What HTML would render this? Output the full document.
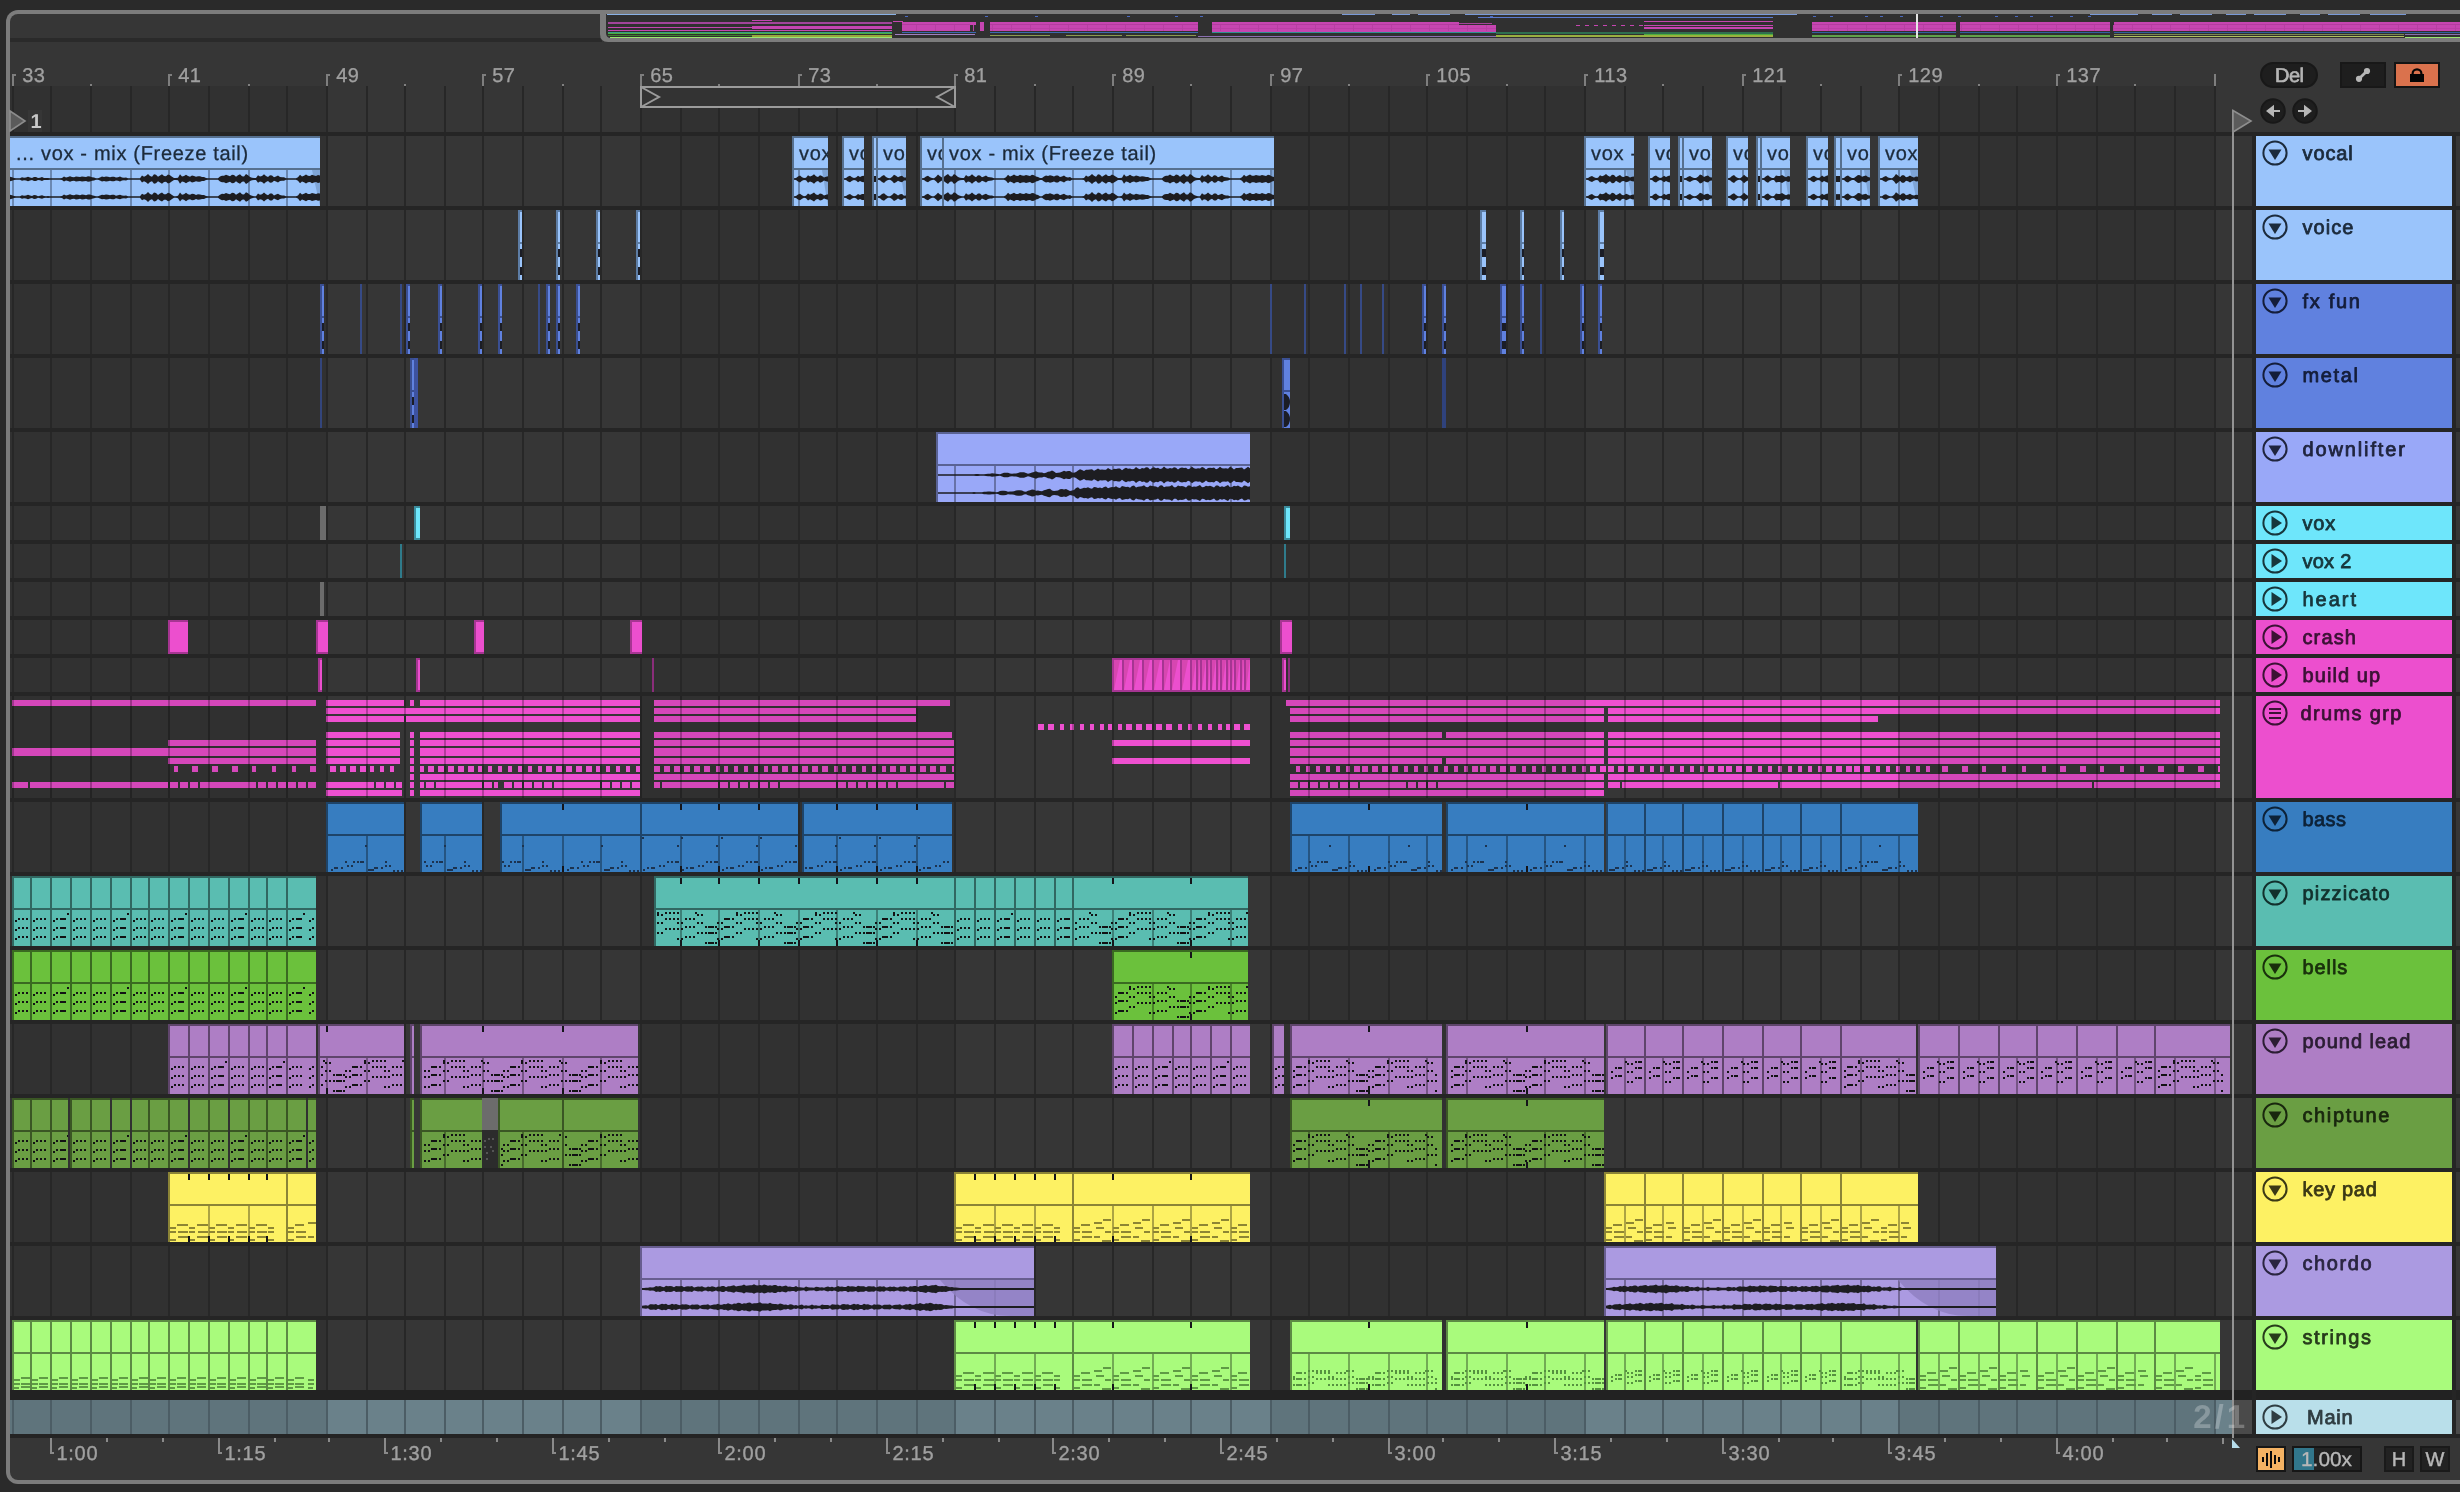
<!DOCTYPE html>
<html lang="en"><head><meta charset="utf-8"><title>Arrangement</title>
<style>html,body{margin:0;padding:0;background:#2a2a2a;overflow:hidden}svg{display:block;will-change:transform;backface-visibility:hidden}text{shape-rendering:auto}circle,.aa{shape-rendering:geometricPrecision}</style></head>
<body>
<svg width="2460" height="1492" viewBox="0 0 2460 1492" shape-rendering="crispEdges" text-rendering="geometricPrecision">
<rect x="0" y="0" width="2460" height="1492" fill="#2a2a2a"/>
<rect class="aa" x="6" y="10" width="2480" height="1474" rx="12" fill="#7c7c7c"/>
<rect class="aa" x="10" y="14" width="2480" height="1466" rx="8" fill="#363636"/>
<rect x="10" y="38" width="592" height="4" fill="#2a2a2a"/>
<rect x="10" y="132" width="2450" height="1306" fill="#252525"/>
<rect x="10" y="86" width="2242" height="46" fill="#363636"/>
<rect x="2456" y="86" width="4" height="46" fill="#363636"/>
<rect x="10" y="86" width="316" height="46" fill="#313131"/>
<rect x="640" y="86" width="314" height="46" fill="#313131"/>
<rect x="1270" y="86" width="314" height="46" fill="#313131"/>
<rect x="1898" y="86" width="316" height="46" fill="#313131"/>
<rect x="10" y="136" width="2242" height="70" fill="#363636"/>
<rect x="2456" y="136" width="4" height="70" fill="#363636"/>
<rect x="10" y="136" width="316" height="70" fill="#313131"/>
<rect x="640" y="136" width="314" height="70" fill="#313131"/>
<rect x="1270" y="136" width="314" height="70" fill="#313131"/>
<rect x="1898" y="136" width="316" height="70" fill="#313131"/>
<rect x="10" y="210" width="2242" height="70" fill="#363636"/>
<rect x="2456" y="210" width="4" height="70" fill="#363636"/>
<rect x="10" y="210" width="316" height="70" fill="#313131"/>
<rect x="640" y="210" width="314" height="70" fill="#313131"/>
<rect x="1270" y="210" width="314" height="70" fill="#313131"/>
<rect x="1898" y="210" width="316" height="70" fill="#313131"/>
<rect x="10" y="284" width="2242" height="70" fill="#363636"/>
<rect x="2456" y="284" width="4" height="70" fill="#363636"/>
<rect x="10" y="284" width="316" height="70" fill="#313131"/>
<rect x="640" y="284" width="314" height="70" fill="#313131"/>
<rect x="1270" y="284" width="314" height="70" fill="#313131"/>
<rect x="1898" y="284" width="316" height="70" fill="#313131"/>
<rect x="10" y="358" width="2242" height="70" fill="#363636"/>
<rect x="2456" y="358" width="4" height="70" fill="#363636"/>
<rect x="10" y="358" width="316" height="70" fill="#313131"/>
<rect x="640" y="358" width="314" height="70" fill="#313131"/>
<rect x="1270" y="358" width="314" height="70" fill="#313131"/>
<rect x="1898" y="358" width="316" height="70" fill="#313131"/>
<rect x="10" y="432" width="2242" height="70" fill="#363636"/>
<rect x="2456" y="432" width="4" height="70" fill="#363636"/>
<rect x="10" y="432" width="316" height="70" fill="#313131"/>
<rect x="640" y="432" width="314" height="70" fill="#313131"/>
<rect x="1270" y="432" width="314" height="70" fill="#313131"/>
<rect x="1898" y="432" width="316" height="70" fill="#313131"/>
<rect x="10" y="506" width="2242" height="34" fill="#363636"/>
<rect x="2456" y="506" width="4" height="34" fill="#363636"/>
<rect x="10" y="506" width="316" height="34" fill="#313131"/>
<rect x="640" y="506" width="314" height="34" fill="#313131"/>
<rect x="1270" y="506" width="314" height="34" fill="#313131"/>
<rect x="1898" y="506" width="316" height="34" fill="#313131"/>
<rect x="10" y="544" width="2242" height="34" fill="#363636"/>
<rect x="2456" y="544" width="4" height="34" fill="#363636"/>
<rect x="10" y="544" width="316" height="34" fill="#313131"/>
<rect x="640" y="544" width="314" height="34" fill="#313131"/>
<rect x="1270" y="544" width="314" height="34" fill="#313131"/>
<rect x="1898" y="544" width="316" height="34" fill="#313131"/>
<rect x="10" y="582" width="2242" height="34" fill="#363636"/>
<rect x="2456" y="582" width="4" height="34" fill="#363636"/>
<rect x="10" y="582" width="316" height="34" fill="#313131"/>
<rect x="640" y="582" width="314" height="34" fill="#313131"/>
<rect x="1270" y="582" width="314" height="34" fill="#313131"/>
<rect x="1898" y="582" width="316" height="34" fill="#313131"/>
<rect x="10" y="620" width="2242" height="34" fill="#363636"/>
<rect x="2456" y="620" width="4" height="34" fill="#363636"/>
<rect x="10" y="620" width="316" height="34" fill="#313131"/>
<rect x="640" y="620" width="314" height="34" fill="#313131"/>
<rect x="1270" y="620" width="314" height="34" fill="#313131"/>
<rect x="1898" y="620" width="316" height="34" fill="#313131"/>
<rect x="10" y="658" width="2242" height="34" fill="#363636"/>
<rect x="2456" y="658" width="4" height="34" fill="#363636"/>
<rect x="10" y="658" width="316" height="34" fill="#313131"/>
<rect x="640" y="658" width="314" height="34" fill="#313131"/>
<rect x="1270" y="658" width="314" height="34" fill="#313131"/>
<rect x="1898" y="658" width="316" height="34" fill="#313131"/>
<rect x="10" y="696" width="2242" height="102" fill="#363636"/>
<rect x="2456" y="696" width="4" height="102" fill="#363636"/>
<rect x="10" y="802" width="2242" height="70" fill="#363636"/>
<rect x="2456" y="802" width="4" height="70" fill="#363636"/>
<rect x="10" y="802" width="316" height="70" fill="#313131"/>
<rect x="640" y="802" width="314" height="70" fill="#313131"/>
<rect x="1270" y="802" width="314" height="70" fill="#313131"/>
<rect x="1898" y="802" width="316" height="70" fill="#313131"/>
<rect x="10" y="876" width="2242" height="70" fill="#363636"/>
<rect x="2456" y="876" width="4" height="70" fill="#363636"/>
<rect x="10" y="876" width="316" height="70" fill="#313131"/>
<rect x="640" y="876" width="314" height="70" fill="#313131"/>
<rect x="1270" y="876" width="314" height="70" fill="#313131"/>
<rect x="1898" y="876" width="316" height="70" fill="#313131"/>
<rect x="10" y="950" width="2242" height="70" fill="#363636"/>
<rect x="2456" y="950" width="4" height="70" fill="#363636"/>
<rect x="10" y="950" width="316" height="70" fill="#313131"/>
<rect x="640" y="950" width="314" height="70" fill="#313131"/>
<rect x="1270" y="950" width="314" height="70" fill="#313131"/>
<rect x="1898" y="950" width="316" height="70" fill="#313131"/>
<rect x="10" y="1024" width="2242" height="70" fill="#363636"/>
<rect x="2456" y="1024" width="4" height="70" fill="#363636"/>
<rect x="10" y="1024" width="316" height="70" fill="#313131"/>
<rect x="640" y="1024" width="314" height="70" fill="#313131"/>
<rect x="1270" y="1024" width="314" height="70" fill="#313131"/>
<rect x="1898" y="1024" width="316" height="70" fill="#313131"/>
<rect x="10" y="1098" width="2242" height="70" fill="#363636"/>
<rect x="2456" y="1098" width="4" height="70" fill="#363636"/>
<rect x="10" y="1098" width="316" height="70" fill="#313131"/>
<rect x="640" y="1098" width="314" height="70" fill="#313131"/>
<rect x="1270" y="1098" width="314" height="70" fill="#313131"/>
<rect x="1898" y="1098" width="316" height="70" fill="#313131"/>
<rect x="10" y="1172" width="2242" height="70" fill="#363636"/>
<rect x="2456" y="1172" width="4" height="70" fill="#363636"/>
<rect x="10" y="1172" width="316" height="70" fill="#313131"/>
<rect x="640" y="1172" width="314" height="70" fill="#313131"/>
<rect x="1270" y="1172" width="314" height="70" fill="#313131"/>
<rect x="1898" y="1172" width="316" height="70" fill="#313131"/>
<rect x="10" y="1246" width="2242" height="70" fill="#363636"/>
<rect x="2456" y="1246" width="4" height="70" fill="#363636"/>
<rect x="10" y="1246" width="316" height="70" fill="#313131"/>
<rect x="640" y="1246" width="314" height="70" fill="#313131"/>
<rect x="1270" y="1246" width="314" height="70" fill="#313131"/>
<rect x="1898" y="1246" width="316" height="70" fill="#313131"/>
<rect x="10" y="1320" width="2242" height="70" fill="#363636"/>
<rect x="2456" y="1320" width="4" height="70" fill="#363636"/>
<rect x="10" y="1320" width="316" height="70" fill="#313131"/>
<rect x="640" y="1320" width="314" height="70" fill="#313131"/>
<rect x="1270" y="1320" width="314" height="70" fill="#313131"/>
<rect x="1898" y="1320" width="316" height="70" fill="#313131"/>
<rect x="10" y="1400" width="2224" height="34" fill="#6a818a"/>
<rect x="10" y="1400" width="316" height="34" fill="#5f747c"/>
<rect x="640" y="1400" width="314" height="34" fill="#5f747c"/>
<rect x="1270" y="1400" width="314" height="34" fill="#5f747c"/>
<rect x="1898" y="1400" width="316" height="34" fill="#5f747c"/>
<rect x="2234" y="1400" width="18" height="34" fill="#4a4a4a"/>
<rect x="2456" y="1400" width="4" height="34" fill="#4a4a4a"/>
<rect x="12" y="86" width="2" height="46" fill="#272727"/>
<rect x="12" y="136" width="2" height="70" fill="#272727"/>
<rect x="12" y="210" width="2" height="70" fill="#272727"/>
<rect x="12" y="284" width="2" height="70" fill="#272727"/>
<rect x="12" y="358" width="2" height="70" fill="#272727"/>
<rect x="12" y="432" width="2" height="70" fill="#272727"/>
<rect x="12" y="506" width="2" height="34" fill="#272727"/>
<rect x="12" y="544" width="2" height="34" fill="#272727"/>
<rect x="12" y="582" width="2" height="34" fill="#272727"/>
<rect x="12" y="620" width="2" height="34" fill="#272727"/>
<rect x="12" y="658" width="2" height="34" fill="#272727"/>
<rect x="12" y="802" width="2" height="70" fill="#272727"/>
<rect x="12" y="876" width="2" height="70" fill="#272727"/>
<rect x="12" y="950" width="2" height="70" fill="#272727"/>
<rect x="12" y="1024" width="2" height="70" fill="#272727"/>
<rect x="12" y="1098" width="2" height="70" fill="#272727"/>
<rect x="12" y="1172" width="2" height="70" fill="#272727"/>
<rect x="12" y="1246" width="2" height="70" fill="#272727"/>
<rect x="12" y="1320" width="2" height="70" fill="#272727"/>
<rect x="12" y="1400" width="2" height="34" fill="#4c5d65"/>
<rect x="50" y="86" width="2" height="46" fill="#272727"/>
<rect x="50" y="136" width="2" height="70" fill="#272727"/>
<rect x="50" y="210" width="2" height="70" fill="#272727"/>
<rect x="50" y="284" width="2" height="70" fill="#272727"/>
<rect x="50" y="358" width="2" height="70" fill="#272727"/>
<rect x="50" y="432" width="2" height="70" fill="#272727"/>
<rect x="50" y="506" width="2" height="34" fill="#272727"/>
<rect x="50" y="544" width="2" height="34" fill="#272727"/>
<rect x="50" y="582" width="2" height="34" fill="#272727"/>
<rect x="50" y="620" width="2" height="34" fill="#272727"/>
<rect x="50" y="658" width="2" height="34" fill="#272727"/>
<rect x="50" y="802" width="2" height="70" fill="#272727"/>
<rect x="50" y="876" width="2" height="70" fill="#272727"/>
<rect x="50" y="950" width="2" height="70" fill="#272727"/>
<rect x="50" y="1024" width="2" height="70" fill="#272727"/>
<rect x="50" y="1098" width="2" height="70" fill="#272727"/>
<rect x="50" y="1172" width="2" height="70" fill="#272727"/>
<rect x="50" y="1246" width="2" height="70" fill="#272727"/>
<rect x="50" y="1320" width="2" height="70" fill="#272727"/>
<rect x="50" y="1400" width="2" height="34" fill="#4c5d65"/>
<rect x="90" y="86" width="2" height="46" fill="#272727"/>
<rect x="90" y="136" width="2" height="70" fill="#272727"/>
<rect x="90" y="210" width="2" height="70" fill="#272727"/>
<rect x="90" y="284" width="2" height="70" fill="#272727"/>
<rect x="90" y="358" width="2" height="70" fill="#272727"/>
<rect x="90" y="432" width="2" height="70" fill="#272727"/>
<rect x="90" y="506" width="2" height="34" fill="#272727"/>
<rect x="90" y="544" width="2" height="34" fill="#272727"/>
<rect x="90" y="582" width="2" height="34" fill="#272727"/>
<rect x="90" y="620" width="2" height="34" fill="#272727"/>
<rect x="90" y="658" width="2" height="34" fill="#272727"/>
<rect x="90" y="802" width="2" height="70" fill="#272727"/>
<rect x="90" y="876" width="2" height="70" fill="#272727"/>
<rect x="90" y="950" width="2" height="70" fill="#272727"/>
<rect x="90" y="1024" width="2" height="70" fill="#272727"/>
<rect x="90" y="1098" width="2" height="70" fill="#272727"/>
<rect x="90" y="1172" width="2" height="70" fill="#272727"/>
<rect x="90" y="1246" width="2" height="70" fill="#272727"/>
<rect x="90" y="1320" width="2" height="70" fill="#272727"/>
<rect x="90" y="1400" width="2" height="34" fill="#4c5d65"/>
<rect x="130" y="86" width="2" height="46" fill="#272727"/>
<rect x="130" y="136" width="2" height="70" fill="#272727"/>
<rect x="130" y="210" width="2" height="70" fill="#272727"/>
<rect x="130" y="284" width="2" height="70" fill="#272727"/>
<rect x="130" y="358" width="2" height="70" fill="#272727"/>
<rect x="130" y="432" width="2" height="70" fill="#272727"/>
<rect x="130" y="506" width="2" height="34" fill="#272727"/>
<rect x="130" y="544" width="2" height="34" fill="#272727"/>
<rect x="130" y="582" width="2" height="34" fill="#272727"/>
<rect x="130" y="620" width="2" height="34" fill="#272727"/>
<rect x="130" y="658" width="2" height="34" fill="#272727"/>
<rect x="130" y="802" width="2" height="70" fill="#272727"/>
<rect x="130" y="876" width="2" height="70" fill="#272727"/>
<rect x="130" y="950" width="2" height="70" fill="#272727"/>
<rect x="130" y="1024" width="2" height="70" fill="#272727"/>
<rect x="130" y="1098" width="2" height="70" fill="#272727"/>
<rect x="130" y="1172" width="2" height="70" fill="#272727"/>
<rect x="130" y="1246" width="2" height="70" fill="#272727"/>
<rect x="130" y="1320" width="2" height="70" fill="#272727"/>
<rect x="130" y="1400" width="2" height="34" fill="#4c5d65"/>
<rect x="168" y="86" width="2" height="46" fill="#272727"/>
<rect x="168" y="136" width="2" height="70" fill="#272727"/>
<rect x="168" y="210" width="2" height="70" fill="#272727"/>
<rect x="168" y="284" width="2" height="70" fill="#272727"/>
<rect x="168" y="358" width="2" height="70" fill="#272727"/>
<rect x="168" y="432" width="2" height="70" fill="#272727"/>
<rect x="168" y="506" width="2" height="34" fill="#272727"/>
<rect x="168" y="544" width="2" height="34" fill="#272727"/>
<rect x="168" y="582" width="2" height="34" fill="#272727"/>
<rect x="168" y="620" width="2" height="34" fill="#272727"/>
<rect x="168" y="658" width="2" height="34" fill="#272727"/>
<rect x="168" y="802" width="2" height="70" fill="#272727"/>
<rect x="168" y="876" width="2" height="70" fill="#272727"/>
<rect x="168" y="950" width="2" height="70" fill="#272727"/>
<rect x="168" y="1024" width="2" height="70" fill="#272727"/>
<rect x="168" y="1098" width="2" height="70" fill="#272727"/>
<rect x="168" y="1172" width="2" height="70" fill="#272727"/>
<rect x="168" y="1246" width="2" height="70" fill="#272727"/>
<rect x="168" y="1320" width="2" height="70" fill="#272727"/>
<rect x="168" y="1400" width="2" height="34" fill="#4c5d65"/>
<rect x="208" y="86" width="2" height="46" fill="#272727"/>
<rect x="208" y="136" width="2" height="70" fill="#272727"/>
<rect x="208" y="210" width="2" height="70" fill="#272727"/>
<rect x="208" y="284" width="2" height="70" fill="#272727"/>
<rect x="208" y="358" width="2" height="70" fill="#272727"/>
<rect x="208" y="432" width="2" height="70" fill="#272727"/>
<rect x="208" y="506" width="2" height="34" fill="#272727"/>
<rect x="208" y="544" width="2" height="34" fill="#272727"/>
<rect x="208" y="582" width="2" height="34" fill="#272727"/>
<rect x="208" y="620" width="2" height="34" fill="#272727"/>
<rect x="208" y="658" width="2" height="34" fill="#272727"/>
<rect x="208" y="802" width="2" height="70" fill="#272727"/>
<rect x="208" y="876" width="2" height="70" fill="#272727"/>
<rect x="208" y="950" width="2" height="70" fill="#272727"/>
<rect x="208" y="1024" width="2" height="70" fill="#272727"/>
<rect x="208" y="1098" width="2" height="70" fill="#272727"/>
<rect x="208" y="1172" width="2" height="70" fill="#272727"/>
<rect x="208" y="1246" width="2" height="70" fill="#272727"/>
<rect x="208" y="1320" width="2" height="70" fill="#272727"/>
<rect x="208" y="1400" width="2" height="34" fill="#4c5d65"/>
<rect x="248" y="86" width="2" height="46" fill="#272727"/>
<rect x="248" y="136" width="2" height="70" fill="#272727"/>
<rect x="248" y="210" width="2" height="70" fill="#272727"/>
<rect x="248" y="284" width="2" height="70" fill="#272727"/>
<rect x="248" y="358" width="2" height="70" fill="#272727"/>
<rect x="248" y="432" width="2" height="70" fill="#272727"/>
<rect x="248" y="506" width="2" height="34" fill="#272727"/>
<rect x="248" y="544" width="2" height="34" fill="#272727"/>
<rect x="248" y="582" width="2" height="34" fill="#272727"/>
<rect x="248" y="620" width="2" height="34" fill="#272727"/>
<rect x="248" y="658" width="2" height="34" fill="#272727"/>
<rect x="248" y="802" width="2" height="70" fill="#272727"/>
<rect x="248" y="876" width="2" height="70" fill="#272727"/>
<rect x="248" y="950" width="2" height="70" fill="#272727"/>
<rect x="248" y="1024" width="2" height="70" fill="#272727"/>
<rect x="248" y="1098" width="2" height="70" fill="#272727"/>
<rect x="248" y="1172" width="2" height="70" fill="#272727"/>
<rect x="248" y="1246" width="2" height="70" fill="#272727"/>
<rect x="248" y="1320" width="2" height="70" fill="#272727"/>
<rect x="248" y="1400" width="2" height="34" fill="#4c5d65"/>
<rect x="286" y="86" width="2" height="46" fill="#272727"/>
<rect x="286" y="136" width="2" height="70" fill="#272727"/>
<rect x="286" y="210" width="2" height="70" fill="#272727"/>
<rect x="286" y="284" width="2" height="70" fill="#272727"/>
<rect x="286" y="358" width="2" height="70" fill="#272727"/>
<rect x="286" y="432" width="2" height="70" fill="#272727"/>
<rect x="286" y="506" width="2" height="34" fill="#272727"/>
<rect x="286" y="544" width="2" height="34" fill="#272727"/>
<rect x="286" y="582" width="2" height="34" fill="#272727"/>
<rect x="286" y="620" width="2" height="34" fill="#272727"/>
<rect x="286" y="658" width="2" height="34" fill="#272727"/>
<rect x="286" y="802" width="2" height="70" fill="#272727"/>
<rect x="286" y="876" width="2" height="70" fill="#272727"/>
<rect x="286" y="950" width="2" height="70" fill="#272727"/>
<rect x="286" y="1024" width="2" height="70" fill="#272727"/>
<rect x="286" y="1098" width="2" height="70" fill="#272727"/>
<rect x="286" y="1172" width="2" height="70" fill="#272727"/>
<rect x="286" y="1246" width="2" height="70" fill="#272727"/>
<rect x="286" y="1320" width="2" height="70" fill="#272727"/>
<rect x="286" y="1400" width="2" height="34" fill="#4c5d65"/>
<rect x="326" y="86" width="2" height="46" fill="#272727"/>
<rect x="326" y="136" width="2" height="70" fill="#272727"/>
<rect x="326" y="210" width="2" height="70" fill="#272727"/>
<rect x="326" y="284" width="2" height="70" fill="#272727"/>
<rect x="326" y="358" width="2" height="70" fill="#272727"/>
<rect x="326" y="432" width="2" height="70" fill="#272727"/>
<rect x="326" y="506" width="2" height="34" fill="#272727"/>
<rect x="326" y="544" width="2" height="34" fill="#272727"/>
<rect x="326" y="582" width="2" height="34" fill="#272727"/>
<rect x="326" y="620" width="2" height="34" fill="#272727"/>
<rect x="326" y="658" width="2" height="34" fill="#272727"/>
<rect x="326" y="802" width="2" height="70" fill="#272727"/>
<rect x="326" y="876" width="2" height="70" fill="#272727"/>
<rect x="326" y="950" width="2" height="70" fill="#272727"/>
<rect x="326" y="1024" width="2" height="70" fill="#272727"/>
<rect x="326" y="1098" width="2" height="70" fill="#272727"/>
<rect x="326" y="1172" width="2" height="70" fill="#272727"/>
<rect x="326" y="1246" width="2" height="70" fill="#272727"/>
<rect x="326" y="1320" width="2" height="70" fill="#272727"/>
<rect x="326" y="1400" width="2" height="34" fill="#4c5d65"/>
<rect x="366" y="86" width="2" height="46" fill="#272727"/>
<rect x="366" y="136" width="2" height="70" fill="#272727"/>
<rect x="366" y="210" width="2" height="70" fill="#272727"/>
<rect x="366" y="284" width="2" height="70" fill="#272727"/>
<rect x="366" y="358" width="2" height="70" fill="#272727"/>
<rect x="366" y="432" width="2" height="70" fill="#272727"/>
<rect x="366" y="506" width="2" height="34" fill="#272727"/>
<rect x="366" y="544" width="2" height="34" fill="#272727"/>
<rect x="366" y="582" width="2" height="34" fill="#272727"/>
<rect x="366" y="620" width="2" height="34" fill="#272727"/>
<rect x="366" y="658" width="2" height="34" fill="#272727"/>
<rect x="366" y="802" width="2" height="70" fill="#272727"/>
<rect x="366" y="876" width="2" height="70" fill="#272727"/>
<rect x="366" y="950" width="2" height="70" fill="#272727"/>
<rect x="366" y="1024" width="2" height="70" fill="#272727"/>
<rect x="366" y="1098" width="2" height="70" fill="#272727"/>
<rect x="366" y="1172" width="2" height="70" fill="#272727"/>
<rect x="366" y="1246" width="2" height="70" fill="#272727"/>
<rect x="366" y="1320" width="2" height="70" fill="#272727"/>
<rect x="366" y="1400" width="2" height="34" fill="#4c5d65"/>
<rect x="404" y="86" width="2" height="46" fill="#272727"/>
<rect x="404" y="136" width="2" height="70" fill="#272727"/>
<rect x="404" y="210" width="2" height="70" fill="#272727"/>
<rect x="404" y="284" width="2" height="70" fill="#272727"/>
<rect x="404" y="358" width="2" height="70" fill="#272727"/>
<rect x="404" y="432" width="2" height="70" fill="#272727"/>
<rect x="404" y="506" width="2" height="34" fill="#272727"/>
<rect x="404" y="544" width="2" height="34" fill="#272727"/>
<rect x="404" y="582" width="2" height="34" fill="#272727"/>
<rect x="404" y="620" width="2" height="34" fill="#272727"/>
<rect x="404" y="658" width="2" height="34" fill="#272727"/>
<rect x="404" y="802" width="2" height="70" fill="#272727"/>
<rect x="404" y="876" width="2" height="70" fill="#272727"/>
<rect x="404" y="950" width="2" height="70" fill="#272727"/>
<rect x="404" y="1024" width="2" height="70" fill="#272727"/>
<rect x="404" y="1098" width="2" height="70" fill="#272727"/>
<rect x="404" y="1172" width="2" height="70" fill="#272727"/>
<rect x="404" y="1246" width="2" height="70" fill="#272727"/>
<rect x="404" y="1320" width="2" height="70" fill="#272727"/>
<rect x="404" y="1400" width="2" height="34" fill="#4c5d65"/>
<rect x="444" y="86" width="2" height="46" fill="#272727"/>
<rect x="444" y="136" width="2" height="70" fill="#272727"/>
<rect x="444" y="210" width="2" height="70" fill="#272727"/>
<rect x="444" y="284" width="2" height="70" fill="#272727"/>
<rect x="444" y="358" width="2" height="70" fill="#272727"/>
<rect x="444" y="432" width="2" height="70" fill="#272727"/>
<rect x="444" y="506" width="2" height="34" fill="#272727"/>
<rect x="444" y="544" width="2" height="34" fill="#272727"/>
<rect x="444" y="582" width="2" height="34" fill="#272727"/>
<rect x="444" y="620" width="2" height="34" fill="#272727"/>
<rect x="444" y="658" width="2" height="34" fill="#272727"/>
<rect x="444" y="802" width="2" height="70" fill="#272727"/>
<rect x="444" y="876" width="2" height="70" fill="#272727"/>
<rect x="444" y="950" width="2" height="70" fill="#272727"/>
<rect x="444" y="1024" width="2" height="70" fill="#272727"/>
<rect x="444" y="1098" width="2" height="70" fill="#272727"/>
<rect x="444" y="1172" width="2" height="70" fill="#272727"/>
<rect x="444" y="1246" width="2" height="70" fill="#272727"/>
<rect x="444" y="1320" width="2" height="70" fill="#272727"/>
<rect x="444" y="1400" width="2" height="34" fill="#4c5d65"/>
<rect x="482" y="86" width="2" height="46" fill="#272727"/>
<rect x="482" y="136" width="2" height="70" fill="#272727"/>
<rect x="482" y="210" width="2" height="70" fill="#272727"/>
<rect x="482" y="284" width="2" height="70" fill="#272727"/>
<rect x="482" y="358" width="2" height="70" fill="#272727"/>
<rect x="482" y="432" width="2" height="70" fill="#272727"/>
<rect x="482" y="506" width="2" height="34" fill="#272727"/>
<rect x="482" y="544" width="2" height="34" fill="#272727"/>
<rect x="482" y="582" width="2" height="34" fill="#272727"/>
<rect x="482" y="620" width="2" height="34" fill="#272727"/>
<rect x="482" y="658" width="2" height="34" fill="#272727"/>
<rect x="482" y="802" width="2" height="70" fill="#272727"/>
<rect x="482" y="876" width="2" height="70" fill="#272727"/>
<rect x="482" y="950" width="2" height="70" fill="#272727"/>
<rect x="482" y="1024" width="2" height="70" fill="#272727"/>
<rect x="482" y="1098" width="2" height="70" fill="#272727"/>
<rect x="482" y="1172" width="2" height="70" fill="#272727"/>
<rect x="482" y="1246" width="2" height="70" fill="#272727"/>
<rect x="482" y="1320" width="2" height="70" fill="#272727"/>
<rect x="482" y="1400" width="2" height="34" fill="#4c5d65"/>
<rect x="522" y="86" width="2" height="46" fill="#272727"/>
<rect x="522" y="136" width="2" height="70" fill="#272727"/>
<rect x="522" y="210" width="2" height="70" fill="#272727"/>
<rect x="522" y="284" width="2" height="70" fill="#272727"/>
<rect x="522" y="358" width="2" height="70" fill="#272727"/>
<rect x="522" y="432" width="2" height="70" fill="#272727"/>
<rect x="522" y="506" width="2" height="34" fill="#272727"/>
<rect x="522" y="544" width="2" height="34" fill="#272727"/>
<rect x="522" y="582" width="2" height="34" fill="#272727"/>
<rect x="522" y="620" width="2" height="34" fill="#272727"/>
<rect x="522" y="658" width="2" height="34" fill="#272727"/>
<rect x="522" y="802" width="2" height="70" fill="#272727"/>
<rect x="522" y="876" width="2" height="70" fill="#272727"/>
<rect x="522" y="950" width="2" height="70" fill="#272727"/>
<rect x="522" y="1024" width="2" height="70" fill="#272727"/>
<rect x="522" y="1098" width="2" height="70" fill="#272727"/>
<rect x="522" y="1172" width="2" height="70" fill="#272727"/>
<rect x="522" y="1246" width="2" height="70" fill="#272727"/>
<rect x="522" y="1320" width="2" height="70" fill="#272727"/>
<rect x="522" y="1400" width="2" height="34" fill="#4c5d65"/>
<rect x="562" y="86" width="2" height="46" fill="#272727"/>
<rect x="562" y="136" width="2" height="70" fill="#272727"/>
<rect x="562" y="210" width="2" height="70" fill="#272727"/>
<rect x="562" y="284" width="2" height="70" fill="#272727"/>
<rect x="562" y="358" width="2" height="70" fill="#272727"/>
<rect x="562" y="432" width="2" height="70" fill="#272727"/>
<rect x="562" y="506" width="2" height="34" fill="#272727"/>
<rect x="562" y="544" width="2" height="34" fill="#272727"/>
<rect x="562" y="582" width="2" height="34" fill="#272727"/>
<rect x="562" y="620" width="2" height="34" fill="#272727"/>
<rect x="562" y="658" width="2" height="34" fill="#272727"/>
<rect x="562" y="802" width="2" height="70" fill="#272727"/>
<rect x="562" y="876" width="2" height="70" fill="#272727"/>
<rect x="562" y="950" width="2" height="70" fill="#272727"/>
<rect x="562" y="1024" width="2" height="70" fill="#272727"/>
<rect x="562" y="1098" width="2" height="70" fill="#272727"/>
<rect x="562" y="1172" width="2" height="70" fill="#272727"/>
<rect x="562" y="1246" width="2" height="70" fill="#272727"/>
<rect x="562" y="1320" width="2" height="70" fill="#272727"/>
<rect x="562" y="1400" width="2" height="34" fill="#4c5d65"/>
<rect x="600" y="86" width="2" height="46" fill="#272727"/>
<rect x="600" y="136" width="2" height="70" fill="#272727"/>
<rect x="600" y="210" width="2" height="70" fill="#272727"/>
<rect x="600" y="284" width="2" height="70" fill="#272727"/>
<rect x="600" y="358" width="2" height="70" fill="#272727"/>
<rect x="600" y="432" width="2" height="70" fill="#272727"/>
<rect x="600" y="506" width="2" height="34" fill="#272727"/>
<rect x="600" y="544" width="2" height="34" fill="#272727"/>
<rect x="600" y="582" width="2" height="34" fill="#272727"/>
<rect x="600" y="620" width="2" height="34" fill="#272727"/>
<rect x="600" y="658" width="2" height="34" fill="#272727"/>
<rect x="600" y="802" width="2" height="70" fill="#272727"/>
<rect x="600" y="876" width="2" height="70" fill="#272727"/>
<rect x="600" y="950" width="2" height="70" fill="#272727"/>
<rect x="600" y="1024" width="2" height="70" fill="#272727"/>
<rect x="600" y="1098" width="2" height="70" fill="#272727"/>
<rect x="600" y="1172" width="2" height="70" fill="#272727"/>
<rect x="600" y="1246" width="2" height="70" fill="#272727"/>
<rect x="600" y="1320" width="2" height="70" fill="#272727"/>
<rect x="600" y="1400" width="2" height="34" fill="#4c5d65"/>
<rect x="640" y="86" width="2" height="46" fill="#272727"/>
<rect x="640" y="136" width="2" height="70" fill="#272727"/>
<rect x="640" y="210" width="2" height="70" fill="#272727"/>
<rect x="640" y="284" width="2" height="70" fill="#272727"/>
<rect x="640" y="358" width="2" height="70" fill="#272727"/>
<rect x="640" y="432" width="2" height="70" fill="#272727"/>
<rect x="640" y="506" width="2" height="34" fill="#272727"/>
<rect x="640" y="544" width="2" height="34" fill="#272727"/>
<rect x="640" y="582" width="2" height="34" fill="#272727"/>
<rect x="640" y="620" width="2" height="34" fill="#272727"/>
<rect x="640" y="658" width="2" height="34" fill="#272727"/>
<rect x="640" y="802" width="2" height="70" fill="#272727"/>
<rect x="640" y="876" width="2" height="70" fill="#272727"/>
<rect x="640" y="950" width="2" height="70" fill="#272727"/>
<rect x="640" y="1024" width="2" height="70" fill="#272727"/>
<rect x="640" y="1098" width="2" height="70" fill="#272727"/>
<rect x="640" y="1172" width="2" height="70" fill="#272727"/>
<rect x="640" y="1246" width="2" height="70" fill="#272727"/>
<rect x="640" y="1320" width="2" height="70" fill="#272727"/>
<rect x="640" y="1400" width="2" height="34" fill="#4c5d65"/>
<rect x="680" y="86" width="2" height="46" fill="#272727"/>
<rect x="680" y="136" width="2" height="70" fill="#272727"/>
<rect x="680" y="210" width="2" height="70" fill="#272727"/>
<rect x="680" y="284" width="2" height="70" fill="#272727"/>
<rect x="680" y="358" width="2" height="70" fill="#272727"/>
<rect x="680" y="432" width="2" height="70" fill="#272727"/>
<rect x="680" y="506" width="2" height="34" fill="#272727"/>
<rect x="680" y="544" width="2" height="34" fill="#272727"/>
<rect x="680" y="582" width="2" height="34" fill="#272727"/>
<rect x="680" y="620" width="2" height="34" fill="#272727"/>
<rect x="680" y="658" width="2" height="34" fill="#272727"/>
<rect x="680" y="802" width="2" height="70" fill="#272727"/>
<rect x="680" y="876" width="2" height="70" fill="#272727"/>
<rect x="680" y="950" width="2" height="70" fill="#272727"/>
<rect x="680" y="1024" width="2" height="70" fill="#272727"/>
<rect x="680" y="1098" width="2" height="70" fill="#272727"/>
<rect x="680" y="1172" width="2" height="70" fill="#272727"/>
<rect x="680" y="1246" width="2" height="70" fill="#272727"/>
<rect x="680" y="1320" width="2" height="70" fill="#272727"/>
<rect x="680" y="1400" width="2" height="34" fill="#4c5d65"/>
<rect x="718" y="86" width="2" height="46" fill="#272727"/>
<rect x="718" y="136" width="2" height="70" fill="#272727"/>
<rect x="718" y="210" width="2" height="70" fill="#272727"/>
<rect x="718" y="284" width="2" height="70" fill="#272727"/>
<rect x="718" y="358" width="2" height="70" fill="#272727"/>
<rect x="718" y="432" width="2" height="70" fill="#272727"/>
<rect x="718" y="506" width="2" height="34" fill="#272727"/>
<rect x="718" y="544" width="2" height="34" fill="#272727"/>
<rect x="718" y="582" width="2" height="34" fill="#272727"/>
<rect x="718" y="620" width="2" height="34" fill="#272727"/>
<rect x="718" y="658" width="2" height="34" fill="#272727"/>
<rect x="718" y="802" width="2" height="70" fill="#272727"/>
<rect x="718" y="876" width="2" height="70" fill="#272727"/>
<rect x="718" y="950" width="2" height="70" fill="#272727"/>
<rect x="718" y="1024" width="2" height="70" fill="#272727"/>
<rect x="718" y="1098" width="2" height="70" fill="#272727"/>
<rect x="718" y="1172" width="2" height="70" fill="#272727"/>
<rect x="718" y="1246" width="2" height="70" fill="#272727"/>
<rect x="718" y="1320" width="2" height="70" fill="#272727"/>
<rect x="718" y="1400" width="2" height="34" fill="#4c5d65"/>
<rect x="758" y="86" width="2" height="46" fill="#272727"/>
<rect x="758" y="136" width="2" height="70" fill="#272727"/>
<rect x="758" y="210" width="2" height="70" fill="#272727"/>
<rect x="758" y="284" width="2" height="70" fill="#272727"/>
<rect x="758" y="358" width="2" height="70" fill="#272727"/>
<rect x="758" y="432" width="2" height="70" fill="#272727"/>
<rect x="758" y="506" width="2" height="34" fill="#272727"/>
<rect x="758" y="544" width="2" height="34" fill="#272727"/>
<rect x="758" y="582" width="2" height="34" fill="#272727"/>
<rect x="758" y="620" width="2" height="34" fill="#272727"/>
<rect x="758" y="658" width="2" height="34" fill="#272727"/>
<rect x="758" y="802" width="2" height="70" fill="#272727"/>
<rect x="758" y="876" width="2" height="70" fill="#272727"/>
<rect x="758" y="950" width="2" height="70" fill="#272727"/>
<rect x="758" y="1024" width="2" height="70" fill="#272727"/>
<rect x="758" y="1098" width="2" height="70" fill="#272727"/>
<rect x="758" y="1172" width="2" height="70" fill="#272727"/>
<rect x="758" y="1246" width="2" height="70" fill="#272727"/>
<rect x="758" y="1320" width="2" height="70" fill="#272727"/>
<rect x="758" y="1400" width="2" height="34" fill="#4c5d65"/>
<rect x="798" y="86" width="2" height="46" fill="#272727"/>
<rect x="798" y="136" width="2" height="70" fill="#272727"/>
<rect x="798" y="210" width="2" height="70" fill="#272727"/>
<rect x="798" y="284" width="2" height="70" fill="#272727"/>
<rect x="798" y="358" width="2" height="70" fill="#272727"/>
<rect x="798" y="432" width="2" height="70" fill="#272727"/>
<rect x="798" y="506" width="2" height="34" fill="#272727"/>
<rect x="798" y="544" width="2" height="34" fill="#272727"/>
<rect x="798" y="582" width="2" height="34" fill="#272727"/>
<rect x="798" y="620" width="2" height="34" fill="#272727"/>
<rect x="798" y="658" width="2" height="34" fill="#272727"/>
<rect x="798" y="802" width="2" height="70" fill="#272727"/>
<rect x="798" y="876" width="2" height="70" fill="#272727"/>
<rect x="798" y="950" width="2" height="70" fill="#272727"/>
<rect x="798" y="1024" width="2" height="70" fill="#272727"/>
<rect x="798" y="1098" width="2" height="70" fill="#272727"/>
<rect x="798" y="1172" width="2" height="70" fill="#272727"/>
<rect x="798" y="1246" width="2" height="70" fill="#272727"/>
<rect x="798" y="1320" width="2" height="70" fill="#272727"/>
<rect x="798" y="1400" width="2" height="34" fill="#4c5d65"/>
<rect x="836" y="86" width="2" height="46" fill="#272727"/>
<rect x="836" y="136" width="2" height="70" fill="#272727"/>
<rect x="836" y="210" width="2" height="70" fill="#272727"/>
<rect x="836" y="284" width="2" height="70" fill="#272727"/>
<rect x="836" y="358" width="2" height="70" fill="#272727"/>
<rect x="836" y="432" width="2" height="70" fill="#272727"/>
<rect x="836" y="506" width="2" height="34" fill="#272727"/>
<rect x="836" y="544" width="2" height="34" fill="#272727"/>
<rect x="836" y="582" width="2" height="34" fill="#272727"/>
<rect x="836" y="620" width="2" height="34" fill="#272727"/>
<rect x="836" y="658" width="2" height="34" fill="#272727"/>
<rect x="836" y="802" width="2" height="70" fill="#272727"/>
<rect x="836" y="876" width="2" height="70" fill="#272727"/>
<rect x="836" y="950" width="2" height="70" fill="#272727"/>
<rect x="836" y="1024" width="2" height="70" fill="#272727"/>
<rect x="836" y="1098" width="2" height="70" fill="#272727"/>
<rect x="836" y="1172" width="2" height="70" fill="#272727"/>
<rect x="836" y="1246" width="2" height="70" fill="#272727"/>
<rect x="836" y="1320" width="2" height="70" fill="#272727"/>
<rect x="836" y="1400" width="2" height="34" fill="#4c5d65"/>
<rect x="876" y="86" width="2" height="46" fill="#272727"/>
<rect x="876" y="136" width="2" height="70" fill="#272727"/>
<rect x="876" y="210" width="2" height="70" fill="#272727"/>
<rect x="876" y="284" width="2" height="70" fill="#272727"/>
<rect x="876" y="358" width="2" height="70" fill="#272727"/>
<rect x="876" y="432" width="2" height="70" fill="#272727"/>
<rect x="876" y="506" width="2" height="34" fill="#272727"/>
<rect x="876" y="544" width="2" height="34" fill="#272727"/>
<rect x="876" y="582" width="2" height="34" fill="#272727"/>
<rect x="876" y="620" width="2" height="34" fill="#272727"/>
<rect x="876" y="658" width="2" height="34" fill="#272727"/>
<rect x="876" y="802" width="2" height="70" fill="#272727"/>
<rect x="876" y="876" width="2" height="70" fill="#272727"/>
<rect x="876" y="950" width="2" height="70" fill="#272727"/>
<rect x="876" y="1024" width="2" height="70" fill="#272727"/>
<rect x="876" y="1098" width="2" height="70" fill="#272727"/>
<rect x="876" y="1172" width="2" height="70" fill="#272727"/>
<rect x="876" y="1246" width="2" height="70" fill="#272727"/>
<rect x="876" y="1320" width="2" height="70" fill="#272727"/>
<rect x="876" y="1400" width="2" height="34" fill="#4c5d65"/>
<rect x="916" y="86" width="2" height="46" fill="#272727"/>
<rect x="916" y="136" width="2" height="70" fill="#272727"/>
<rect x="916" y="210" width="2" height="70" fill="#272727"/>
<rect x="916" y="284" width="2" height="70" fill="#272727"/>
<rect x="916" y="358" width="2" height="70" fill="#272727"/>
<rect x="916" y="432" width="2" height="70" fill="#272727"/>
<rect x="916" y="506" width="2" height="34" fill="#272727"/>
<rect x="916" y="544" width="2" height="34" fill="#272727"/>
<rect x="916" y="582" width="2" height="34" fill="#272727"/>
<rect x="916" y="620" width="2" height="34" fill="#272727"/>
<rect x="916" y="658" width="2" height="34" fill="#272727"/>
<rect x="916" y="802" width="2" height="70" fill="#272727"/>
<rect x="916" y="876" width="2" height="70" fill="#272727"/>
<rect x="916" y="950" width="2" height="70" fill="#272727"/>
<rect x="916" y="1024" width="2" height="70" fill="#272727"/>
<rect x="916" y="1098" width="2" height="70" fill="#272727"/>
<rect x="916" y="1172" width="2" height="70" fill="#272727"/>
<rect x="916" y="1246" width="2" height="70" fill="#272727"/>
<rect x="916" y="1320" width="2" height="70" fill="#272727"/>
<rect x="916" y="1400" width="2" height="34" fill="#4c5d65"/>
<rect x="954" y="86" width="2" height="46" fill="#272727"/>
<rect x="954" y="136" width="2" height="70" fill="#272727"/>
<rect x="954" y="210" width="2" height="70" fill="#272727"/>
<rect x="954" y="284" width="2" height="70" fill="#272727"/>
<rect x="954" y="358" width="2" height="70" fill="#272727"/>
<rect x="954" y="432" width="2" height="70" fill="#272727"/>
<rect x="954" y="506" width="2" height="34" fill="#272727"/>
<rect x="954" y="544" width="2" height="34" fill="#272727"/>
<rect x="954" y="582" width="2" height="34" fill="#272727"/>
<rect x="954" y="620" width="2" height="34" fill="#272727"/>
<rect x="954" y="658" width="2" height="34" fill="#272727"/>
<rect x="954" y="802" width="2" height="70" fill="#272727"/>
<rect x="954" y="876" width="2" height="70" fill="#272727"/>
<rect x="954" y="950" width="2" height="70" fill="#272727"/>
<rect x="954" y="1024" width="2" height="70" fill="#272727"/>
<rect x="954" y="1098" width="2" height="70" fill="#272727"/>
<rect x="954" y="1172" width="2" height="70" fill="#272727"/>
<rect x="954" y="1246" width="2" height="70" fill="#272727"/>
<rect x="954" y="1320" width="2" height="70" fill="#272727"/>
<rect x="954" y="1400" width="2" height="34" fill="#4c5d65"/>
<rect x="994" y="86" width="2" height="46" fill="#272727"/>
<rect x="994" y="136" width="2" height="70" fill="#272727"/>
<rect x="994" y="210" width="2" height="70" fill="#272727"/>
<rect x="994" y="284" width="2" height="70" fill="#272727"/>
<rect x="994" y="358" width="2" height="70" fill="#272727"/>
<rect x="994" y="432" width="2" height="70" fill="#272727"/>
<rect x="994" y="506" width="2" height="34" fill="#272727"/>
<rect x="994" y="544" width="2" height="34" fill="#272727"/>
<rect x="994" y="582" width="2" height="34" fill="#272727"/>
<rect x="994" y="620" width="2" height="34" fill="#272727"/>
<rect x="994" y="658" width="2" height="34" fill="#272727"/>
<rect x="994" y="802" width="2" height="70" fill="#272727"/>
<rect x="994" y="876" width="2" height="70" fill="#272727"/>
<rect x="994" y="950" width="2" height="70" fill="#272727"/>
<rect x="994" y="1024" width="2" height="70" fill="#272727"/>
<rect x="994" y="1098" width="2" height="70" fill="#272727"/>
<rect x="994" y="1172" width="2" height="70" fill="#272727"/>
<rect x="994" y="1246" width="2" height="70" fill="#272727"/>
<rect x="994" y="1320" width="2" height="70" fill="#272727"/>
<rect x="994" y="1400" width="2" height="34" fill="#4c5d65"/>
<rect x="1034" y="86" width="2" height="46" fill="#272727"/>
<rect x="1034" y="136" width="2" height="70" fill="#272727"/>
<rect x="1034" y="210" width="2" height="70" fill="#272727"/>
<rect x="1034" y="284" width="2" height="70" fill="#272727"/>
<rect x="1034" y="358" width="2" height="70" fill="#272727"/>
<rect x="1034" y="432" width="2" height="70" fill="#272727"/>
<rect x="1034" y="506" width="2" height="34" fill="#272727"/>
<rect x="1034" y="544" width="2" height="34" fill="#272727"/>
<rect x="1034" y="582" width="2" height="34" fill="#272727"/>
<rect x="1034" y="620" width="2" height="34" fill="#272727"/>
<rect x="1034" y="658" width="2" height="34" fill="#272727"/>
<rect x="1034" y="802" width="2" height="70" fill="#272727"/>
<rect x="1034" y="876" width="2" height="70" fill="#272727"/>
<rect x="1034" y="950" width="2" height="70" fill="#272727"/>
<rect x="1034" y="1024" width="2" height="70" fill="#272727"/>
<rect x="1034" y="1098" width="2" height="70" fill="#272727"/>
<rect x="1034" y="1172" width="2" height="70" fill="#272727"/>
<rect x="1034" y="1246" width="2" height="70" fill="#272727"/>
<rect x="1034" y="1320" width="2" height="70" fill="#272727"/>
<rect x="1034" y="1400" width="2" height="34" fill="#4c5d65"/>
<rect x="1072" y="86" width="2" height="46" fill="#272727"/>
<rect x="1072" y="136" width="2" height="70" fill="#272727"/>
<rect x="1072" y="210" width="2" height="70" fill="#272727"/>
<rect x="1072" y="284" width="2" height="70" fill="#272727"/>
<rect x="1072" y="358" width="2" height="70" fill="#272727"/>
<rect x="1072" y="432" width="2" height="70" fill="#272727"/>
<rect x="1072" y="506" width="2" height="34" fill="#272727"/>
<rect x="1072" y="544" width="2" height="34" fill="#272727"/>
<rect x="1072" y="582" width="2" height="34" fill="#272727"/>
<rect x="1072" y="620" width="2" height="34" fill="#272727"/>
<rect x="1072" y="658" width="2" height="34" fill="#272727"/>
<rect x="1072" y="802" width="2" height="70" fill="#272727"/>
<rect x="1072" y="876" width="2" height="70" fill="#272727"/>
<rect x="1072" y="950" width="2" height="70" fill="#272727"/>
<rect x="1072" y="1024" width="2" height="70" fill="#272727"/>
<rect x="1072" y="1098" width="2" height="70" fill="#272727"/>
<rect x="1072" y="1172" width="2" height="70" fill="#272727"/>
<rect x="1072" y="1246" width="2" height="70" fill="#272727"/>
<rect x="1072" y="1320" width="2" height="70" fill="#272727"/>
<rect x="1072" y="1400" width="2" height="34" fill="#4c5d65"/>
<rect x="1112" y="86" width="2" height="46" fill="#272727"/>
<rect x="1112" y="136" width="2" height="70" fill="#272727"/>
<rect x="1112" y="210" width="2" height="70" fill="#272727"/>
<rect x="1112" y="284" width="2" height="70" fill="#272727"/>
<rect x="1112" y="358" width="2" height="70" fill="#272727"/>
<rect x="1112" y="432" width="2" height="70" fill="#272727"/>
<rect x="1112" y="506" width="2" height="34" fill="#272727"/>
<rect x="1112" y="544" width="2" height="34" fill="#272727"/>
<rect x="1112" y="582" width="2" height="34" fill="#272727"/>
<rect x="1112" y="620" width="2" height="34" fill="#272727"/>
<rect x="1112" y="658" width="2" height="34" fill="#272727"/>
<rect x="1112" y="802" width="2" height="70" fill="#272727"/>
<rect x="1112" y="876" width="2" height="70" fill="#272727"/>
<rect x="1112" y="950" width="2" height="70" fill="#272727"/>
<rect x="1112" y="1024" width="2" height="70" fill="#272727"/>
<rect x="1112" y="1098" width="2" height="70" fill="#272727"/>
<rect x="1112" y="1172" width="2" height="70" fill="#272727"/>
<rect x="1112" y="1246" width="2" height="70" fill="#272727"/>
<rect x="1112" y="1320" width="2" height="70" fill="#272727"/>
<rect x="1112" y="1400" width="2" height="34" fill="#4c5d65"/>
<rect x="1152" y="86" width="2" height="46" fill="#272727"/>
<rect x="1152" y="136" width="2" height="70" fill="#272727"/>
<rect x="1152" y="210" width="2" height="70" fill="#272727"/>
<rect x="1152" y="284" width="2" height="70" fill="#272727"/>
<rect x="1152" y="358" width="2" height="70" fill="#272727"/>
<rect x="1152" y="432" width="2" height="70" fill="#272727"/>
<rect x="1152" y="506" width="2" height="34" fill="#272727"/>
<rect x="1152" y="544" width="2" height="34" fill="#272727"/>
<rect x="1152" y="582" width="2" height="34" fill="#272727"/>
<rect x="1152" y="620" width="2" height="34" fill="#272727"/>
<rect x="1152" y="658" width="2" height="34" fill="#272727"/>
<rect x="1152" y="802" width="2" height="70" fill="#272727"/>
<rect x="1152" y="876" width="2" height="70" fill="#272727"/>
<rect x="1152" y="950" width="2" height="70" fill="#272727"/>
<rect x="1152" y="1024" width="2" height="70" fill="#272727"/>
<rect x="1152" y="1098" width="2" height="70" fill="#272727"/>
<rect x="1152" y="1172" width="2" height="70" fill="#272727"/>
<rect x="1152" y="1246" width="2" height="70" fill="#272727"/>
<rect x="1152" y="1320" width="2" height="70" fill="#272727"/>
<rect x="1152" y="1400" width="2" height="34" fill="#4c5d65"/>
<rect x="1190" y="86" width="2" height="46" fill="#272727"/>
<rect x="1190" y="136" width="2" height="70" fill="#272727"/>
<rect x="1190" y="210" width="2" height="70" fill="#272727"/>
<rect x="1190" y="284" width="2" height="70" fill="#272727"/>
<rect x="1190" y="358" width="2" height="70" fill="#272727"/>
<rect x="1190" y="432" width="2" height="70" fill="#272727"/>
<rect x="1190" y="506" width="2" height="34" fill="#272727"/>
<rect x="1190" y="544" width="2" height="34" fill="#272727"/>
<rect x="1190" y="582" width="2" height="34" fill="#272727"/>
<rect x="1190" y="620" width="2" height="34" fill="#272727"/>
<rect x="1190" y="658" width="2" height="34" fill="#272727"/>
<rect x="1190" y="802" width="2" height="70" fill="#272727"/>
<rect x="1190" y="876" width="2" height="70" fill="#272727"/>
<rect x="1190" y="950" width="2" height="70" fill="#272727"/>
<rect x="1190" y="1024" width="2" height="70" fill="#272727"/>
<rect x="1190" y="1098" width="2" height="70" fill="#272727"/>
<rect x="1190" y="1172" width="2" height="70" fill="#272727"/>
<rect x="1190" y="1246" width="2" height="70" fill="#272727"/>
<rect x="1190" y="1320" width="2" height="70" fill="#272727"/>
<rect x="1190" y="1400" width="2" height="34" fill="#4c5d65"/>
<rect x="1230" y="86" width="2" height="46" fill="#272727"/>
<rect x="1230" y="136" width="2" height="70" fill="#272727"/>
<rect x="1230" y="210" width="2" height="70" fill="#272727"/>
<rect x="1230" y="284" width="2" height="70" fill="#272727"/>
<rect x="1230" y="358" width="2" height="70" fill="#272727"/>
<rect x="1230" y="432" width="2" height="70" fill="#272727"/>
<rect x="1230" y="506" width="2" height="34" fill="#272727"/>
<rect x="1230" y="544" width="2" height="34" fill="#272727"/>
<rect x="1230" y="582" width="2" height="34" fill="#272727"/>
<rect x="1230" y="620" width="2" height="34" fill="#272727"/>
<rect x="1230" y="658" width="2" height="34" fill="#272727"/>
<rect x="1230" y="802" width="2" height="70" fill="#272727"/>
<rect x="1230" y="876" width="2" height="70" fill="#272727"/>
<rect x="1230" y="950" width="2" height="70" fill="#272727"/>
<rect x="1230" y="1024" width="2" height="70" fill="#272727"/>
<rect x="1230" y="1098" width="2" height="70" fill="#272727"/>
<rect x="1230" y="1172" width="2" height="70" fill="#272727"/>
<rect x="1230" y="1246" width="2" height="70" fill="#272727"/>
<rect x="1230" y="1320" width="2" height="70" fill="#272727"/>
<rect x="1230" y="1400" width="2" height="34" fill="#4c5d65"/>
<rect x="1270" y="86" width="2" height="46" fill="#272727"/>
<rect x="1270" y="136" width="2" height="70" fill="#272727"/>
<rect x="1270" y="210" width="2" height="70" fill="#272727"/>
<rect x="1270" y="284" width="2" height="70" fill="#272727"/>
<rect x="1270" y="358" width="2" height="70" fill="#272727"/>
<rect x="1270" y="432" width="2" height="70" fill="#272727"/>
<rect x="1270" y="506" width="2" height="34" fill="#272727"/>
<rect x="1270" y="544" width="2" height="34" fill="#272727"/>
<rect x="1270" y="582" width="2" height="34" fill="#272727"/>
<rect x="1270" y="620" width="2" height="34" fill="#272727"/>
<rect x="1270" y="658" width="2" height="34" fill="#272727"/>
<rect x="1270" y="802" width="2" height="70" fill="#272727"/>
<rect x="1270" y="876" width="2" height="70" fill="#272727"/>
<rect x="1270" y="950" width="2" height="70" fill="#272727"/>
<rect x="1270" y="1024" width="2" height="70" fill="#272727"/>
<rect x="1270" y="1098" width="2" height="70" fill="#272727"/>
<rect x="1270" y="1172" width="2" height="70" fill="#272727"/>
<rect x="1270" y="1246" width="2" height="70" fill="#272727"/>
<rect x="1270" y="1320" width="2" height="70" fill="#272727"/>
<rect x="1270" y="1400" width="2" height="34" fill="#4c5d65"/>
<rect x="1308" y="86" width="2" height="46" fill="#272727"/>
<rect x="1308" y="136" width="2" height="70" fill="#272727"/>
<rect x="1308" y="210" width="2" height="70" fill="#272727"/>
<rect x="1308" y="284" width="2" height="70" fill="#272727"/>
<rect x="1308" y="358" width="2" height="70" fill="#272727"/>
<rect x="1308" y="432" width="2" height="70" fill="#272727"/>
<rect x="1308" y="506" width="2" height="34" fill="#272727"/>
<rect x="1308" y="544" width="2" height="34" fill="#272727"/>
<rect x="1308" y="582" width="2" height="34" fill="#272727"/>
<rect x="1308" y="620" width="2" height="34" fill="#272727"/>
<rect x="1308" y="658" width="2" height="34" fill="#272727"/>
<rect x="1308" y="802" width="2" height="70" fill="#272727"/>
<rect x="1308" y="876" width="2" height="70" fill="#272727"/>
<rect x="1308" y="950" width="2" height="70" fill="#272727"/>
<rect x="1308" y="1024" width="2" height="70" fill="#272727"/>
<rect x="1308" y="1098" width="2" height="70" fill="#272727"/>
<rect x="1308" y="1172" width="2" height="70" fill="#272727"/>
<rect x="1308" y="1246" width="2" height="70" fill="#272727"/>
<rect x="1308" y="1320" width="2" height="70" fill="#272727"/>
<rect x="1308" y="1400" width="2" height="34" fill="#4c5d65"/>
<rect x="1348" y="86" width="2" height="46" fill="#272727"/>
<rect x="1348" y="136" width="2" height="70" fill="#272727"/>
<rect x="1348" y="210" width="2" height="70" fill="#272727"/>
<rect x="1348" y="284" width="2" height="70" fill="#272727"/>
<rect x="1348" y="358" width="2" height="70" fill="#272727"/>
<rect x="1348" y="432" width="2" height="70" fill="#272727"/>
<rect x="1348" y="506" width="2" height="34" fill="#272727"/>
<rect x="1348" y="544" width="2" height="34" fill="#272727"/>
<rect x="1348" y="582" width="2" height="34" fill="#272727"/>
<rect x="1348" y="620" width="2" height="34" fill="#272727"/>
<rect x="1348" y="658" width="2" height="34" fill="#272727"/>
<rect x="1348" y="802" width="2" height="70" fill="#272727"/>
<rect x="1348" y="876" width="2" height="70" fill="#272727"/>
<rect x="1348" y="950" width="2" height="70" fill="#272727"/>
<rect x="1348" y="1024" width="2" height="70" fill="#272727"/>
<rect x="1348" y="1098" width="2" height="70" fill="#272727"/>
<rect x="1348" y="1172" width="2" height="70" fill="#272727"/>
<rect x="1348" y="1246" width="2" height="70" fill="#272727"/>
<rect x="1348" y="1320" width="2" height="70" fill="#272727"/>
<rect x="1348" y="1400" width="2" height="34" fill="#4c5d65"/>
<rect x="1388" y="86" width="2" height="46" fill="#272727"/>
<rect x="1388" y="136" width="2" height="70" fill="#272727"/>
<rect x="1388" y="210" width="2" height="70" fill="#272727"/>
<rect x="1388" y="284" width="2" height="70" fill="#272727"/>
<rect x="1388" y="358" width="2" height="70" fill="#272727"/>
<rect x="1388" y="432" width="2" height="70" fill="#272727"/>
<rect x="1388" y="506" width="2" height="34" fill="#272727"/>
<rect x="1388" y="544" width="2" height="34" fill="#272727"/>
<rect x="1388" y="582" width="2" height="34" fill="#272727"/>
<rect x="1388" y="620" width="2" height="34" fill="#272727"/>
<rect x="1388" y="658" width="2" height="34" fill="#272727"/>
<rect x="1388" y="802" width="2" height="70" fill="#272727"/>
<rect x="1388" y="876" width="2" height="70" fill="#272727"/>
<rect x="1388" y="950" width="2" height="70" fill="#272727"/>
<rect x="1388" y="1024" width="2" height="70" fill="#272727"/>
<rect x="1388" y="1098" width="2" height="70" fill="#272727"/>
<rect x="1388" y="1172" width="2" height="70" fill="#272727"/>
<rect x="1388" y="1246" width="2" height="70" fill="#272727"/>
<rect x="1388" y="1320" width="2" height="70" fill="#272727"/>
<rect x="1388" y="1400" width="2" height="34" fill="#4c5d65"/>
<rect x="1426" y="86" width="2" height="46" fill="#272727"/>
<rect x="1426" y="136" width="2" height="70" fill="#272727"/>
<rect x="1426" y="210" width="2" height="70" fill="#272727"/>
<rect x="1426" y="284" width="2" height="70" fill="#272727"/>
<rect x="1426" y="358" width="2" height="70" fill="#272727"/>
<rect x="1426" y="432" width="2" height="70" fill="#272727"/>
<rect x="1426" y="506" width="2" height="34" fill="#272727"/>
<rect x="1426" y="544" width="2" height="34" fill="#272727"/>
<rect x="1426" y="582" width="2" height="34" fill="#272727"/>
<rect x="1426" y="620" width="2" height="34" fill="#272727"/>
<rect x="1426" y="658" width="2" height="34" fill="#272727"/>
<rect x="1426" y="802" width="2" height="70" fill="#272727"/>
<rect x="1426" y="876" width="2" height="70" fill="#272727"/>
<rect x="1426" y="950" width="2" height="70" fill="#272727"/>
<rect x="1426" y="1024" width="2" height="70" fill="#272727"/>
<rect x="1426" y="1098" width="2" height="70" fill="#272727"/>
<rect x="1426" y="1172" width="2" height="70" fill="#272727"/>
<rect x="1426" y="1246" width="2" height="70" fill="#272727"/>
<rect x="1426" y="1320" width="2" height="70" fill="#272727"/>
<rect x="1426" y="1400" width="2" height="34" fill="#4c5d65"/>
<rect x="1466" y="86" width="2" height="46" fill="#272727"/>
<rect x="1466" y="136" width="2" height="70" fill="#272727"/>
<rect x="1466" y="210" width="2" height="70" fill="#272727"/>
<rect x="1466" y="284" width="2" height="70" fill="#272727"/>
<rect x="1466" y="358" width="2" height="70" fill="#272727"/>
<rect x="1466" y="432" width="2" height="70" fill="#272727"/>
<rect x="1466" y="506" width="2" height="34" fill="#272727"/>
<rect x="1466" y="544" width="2" height="34" fill="#272727"/>
<rect x="1466" y="582" width="2" height="34" fill="#272727"/>
<rect x="1466" y="620" width="2" height="34" fill="#272727"/>
<rect x="1466" y="658" width="2" height="34" fill="#272727"/>
<rect x="1466" y="802" width="2" height="70" fill="#272727"/>
<rect x="1466" y="876" width="2" height="70" fill="#272727"/>
<rect x="1466" y="950" width="2" height="70" fill="#272727"/>
<rect x="1466" y="1024" width="2" height="70" fill="#272727"/>
<rect x="1466" y="1098" width="2" height="70" fill="#272727"/>
<rect x="1466" y="1172" width="2" height="70" fill="#272727"/>
<rect x="1466" y="1246" width="2" height="70" fill="#272727"/>
<rect x="1466" y="1320" width="2" height="70" fill="#272727"/>
<rect x="1466" y="1400" width="2" height="34" fill="#4c5d65"/>
<rect x="1506" y="86" width="2" height="46" fill="#272727"/>
<rect x="1506" y="136" width="2" height="70" fill="#272727"/>
<rect x="1506" y="210" width="2" height="70" fill="#272727"/>
<rect x="1506" y="284" width="2" height="70" fill="#272727"/>
<rect x="1506" y="358" width="2" height="70" fill="#272727"/>
<rect x="1506" y="432" width="2" height="70" fill="#272727"/>
<rect x="1506" y="506" width="2" height="34" fill="#272727"/>
<rect x="1506" y="544" width="2" height="34" fill="#272727"/>
<rect x="1506" y="582" width="2" height="34" fill="#272727"/>
<rect x="1506" y="620" width="2" height="34" fill="#272727"/>
<rect x="1506" y="658" width="2" height="34" fill="#272727"/>
<rect x="1506" y="802" width="2" height="70" fill="#272727"/>
<rect x="1506" y="876" width="2" height="70" fill="#272727"/>
<rect x="1506" y="950" width="2" height="70" fill="#272727"/>
<rect x="1506" y="1024" width="2" height="70" fill="#272727"/>
<rect x="1506" y="1098" width="2" height="70" fill="#272727"/>
<rect x="1506" y="1172" width="2" height="70" fill="#272727"/>
<rect x="1506" y="1246" width="2" height="70" fill="#272727"/>
<rect x="1506" y="1320" width="2" height="70" fill="#272727"/>
<rect x="1506" y="1400" width="2" height="34" fill="#4c5d65"/>
<rect x="1544" y="86" width="2" height="46" fill="#272727"/>
<rect x="1544" y="136" width="2" height="70" fill="#272727"/>
<rect x="1544" y="210" width="2" height="70" fill="#272727"/>
<rect x="1544" y="284" width="2" height="70" fill="#272727"/>
<rect x="1544" y="358" width="2" height="70" fill="#272727"/>
<rect x="1544" y="432" width="2" height="70" fill="#272727"/>
<rect x="1544" y="506" width="2" height="34" fill="#272727"/>
<rect x="1544" y="544" width="2" height="34" fill="#272727"/>
<rect x="1544" y="582" width="2" height="34" fill="#272727"/>
<rect x="1544" y="620" width="2" height="34" fill="#272727"/>
<rect x="1544" y="658" width="2" height="34" fill="#272727"/>
<rect x="1544" y="802" width="2" height="70" fill="#272727"/>
<rect x="1544" y="876" width="2" height="70" fill="#272727"/>
<rect x="1544" y="950" width="2" height="70" fill="#272727"/>
<rect x="1544" y="1024" width="2" height="70" fill="#272727"/>
<rect x="1544" y="1098" width="2" height="70" fill="#272727"/>
<rect x="1544" y="1172" width="2" height="70" fill="#272727"/>
<rect x="1544" y="1246" width="2" height="70" fill="#272727"/>
<rect x="1544" y="1320" width="2" height="70" fill="#272727"/>
<rect x="1544" y="1400" width="2" height="34" fill="#4c5d65"/>
<rect x="1584" y="86" width="2" height="46" fill="#272727"/>
<rect x="1584" y="136" width="2" height="70" fill="#272727"/>
<rect x="1584" y="210" width="2" height="70" fill="#272727"/>
<rect x="1584" y="284" width="2" height="70" fill="#272727"/>
<rect x="1584" y="358" width="2" height="70" fill="#272727"/>
<rect x="1584" y="432" width="2" height="70" fill="#272727"/>
<rect x="1584" y="506" width="2" height="34" fill="#272727"/>
<rect x="1584" y="544" width="2" height="34" fill="#272727"/>
<rect x="1584" y="582" width="2" height="34" fill="#272727"/>
<rect x="1584" y="620" width="2" height="34" fill="#272727"/>
<rect x="1584" y="658" width="2" height="34" fill="#272727"/>
<rect x="1584" y="802" width="2" height="70" fill="#272727"/>
<rect x="1584" y="876" width="2" height="70" fill="#272727"/>
<rect x="1584" y="950" width="2" height="70" fill="#272727"/>
<rect x="1584" y="1024" width="2" height="70" fill="#272727"/>
<rect x="1584" y="1098" width="2" height="70" fill="#272727"/>
<rect x="1584" y="1172" width="2" height="70" fill="#272727"/>
<rect x="1584" y="1246" width="2" height="70" fill="#272727"/>
<rect x="1584" y="1320" width="2" height="70" fill="#272727"/>
<rect x="1584" y="1400" width="2" height="34" fill="#4c5d65"/>
<rect x="1624" y="86" width="2" height="46" fill="#272727"/>
<rect x="1624" y="136" width="2" height="70" fill="#272727"/>
<rect x="1624" y="210" width="2" height="70" fill="#272727"/>
<rect x="1624" y="284" width="2" height="70" fill="#272727"/>
<rect x="1624" y="358" width="2" height="70" fill="#272727"/>
<rect x="1624" y="432" width="2" height="70" fill="#272727"/>
<rect x="1624" y="506" width="2" height="34" fill="#272727"/>
<rect x="1624" y="544" width="2" height="34" fill="#272727"/>
<rect x="1624" y="582" width="2" height="34" fill="#272727"/>
<rect x="1624" y="620" width="2" height="34" fill="#272727"/>
<rect x="1624" y="658" width="2" height="34" fill="#272727"/>
<rect x="1624" y="802" width="2" height="70" fill="#272727"/>
<rect x="1624" y="876" width="2" height="70" fill="#272727"/>
<rect x="1624" y="950" width="2" height="70" fill="#272727"/>
<rect x="1624" y="1024" width="2" height="70" fill="#272727"/>
<rect x="1624" y="1098" width="2" height="70" fill="#272727"/>
<rect x="1624" y="1172" width="2" height="70" fill="#272727"/>
<rect x="1624" y="1246" width="2" height="70" fill="#272727"/>
<rect x="1624" y="1320" width="2" height="70" fill="#272727"/>
<rect x="1624" y="1400" width="2" height="34" fill="#4c5d65"/>
<rect x="1662" y="86" width="2" height="46" fill="#272727"/>
<rect x="1662" y="136" width="2" height="70" fill="#272727"/>
<rect x="1662" y="210" width="2" height="70" fill="#272727"/>
<rect x="1662" y="284" width="2" height="70" fill="#272727"/>
<rect x="1662" y="358" width="2" height="70" fill="#272727"/>
<rect x="1662" y="432" width="2" height="70" fill="#272727"/>
<rect x="1662" y="506" width="2" height="34" fill="#272727"/>
<rect x="1662" y="544" width="2" height="34" fill="#272727"/>
<rect x="1662" y="582" width="2" height="34" fill="#272727"/>
<rect x="1662" y="620" width="2" height="34" fill="#272727"/>
<rect x="1662" y="658" width="2" height="34" fill="#272727"/>
<rect x="1662" y="802" width="2" height="70" fill="#272727"/>
<rect x="1662" y="876" width="2" height="70" fill="#272727"/>
<rect x="1662" y="950" width="2" height="70" fill="#272727"/>
<rect x="1662" y="1024" width="2" height="70" fill="#272727"/>
<rect x="1662" y="1098" width="2" height="70" fill="#272727"/>
<rect x="1662" y="1172" width="2" height="70" fill="#272727"/>
<rect x="1662" y="1246" width="2" height="70" fill="#272727"/>
<rect x="1662" y="1320" width="2" height="70" fill="#272727"/>
<rect x="1662" y="1400" width="2" height="34" fill="#4c5d65"/>
<rect x="1702" y="86" width="2" height="46" fill="#272727"/>
<rect x="1702" y="136" width="2" height="70" fill="#272727"/>
<rect x="1702" y="210" width="2" height="70" fill="#272727"/>
<rect x="1702" y="284" width="2" height="70" fill="#272727"/>
<rect x="1702" y="358" width="2" height="70" fill="#272727"/>
<rect x="1702" y="432" width="2" height="70" fill="#272727"/>
<rect x="1702" y="506" width="2" height="34" fill="#272727"/>
<rect x="1702" y="544" width="2" height="34" fill="#272727"/>
<rect x="1702" y="582" width="2" height="34" fill="#272727"/>
<rect x="1702" y="620" width="2" height="34" fill="#272727"/>
<rect x="1702" y="658" width="2" height="34" fill="#272727"/>
<rect x="1702" y="802" width="2" height="70" fill="#272727"/>
<rect x="1702" y="876" width="2" height="70" fill="#272727"/>
<rect x="1702" y="950" width="2" height="70" fill="#272727"/>
<rect x="1702" y="1024" width="2" height="70" fill="#272727"/>
<rect x="1702" y="1098" width="2" height="70" fill="#272727"/>
<rect x="1702" y="1172" width="2" height="70" fill="#272727"/>
<rect x="1702" y="1246" width="2" height="70" fill="#272727"/>
<rect x="1702" y="1320" width="2" height="70" fill="#272727"/>
<rect x="1702" y="1400" width="2" height="34" fill="#4c5d65"/>
<rect x="1742" y="86" width="2" height="46" fill="#272727"/>
<rect x="1742" y="136" width="2" height="70" fill="#272727"/>
<rect x="1742" y="210" width="2" height="70" fill="#272727"/>
<rect x="1742" y="284" width="2" height="70" fill="#272727"/>
<rect x="1742" y="358" width="2" height="70" fill="#272727"/>
<rect x="1742" y="432" width="2" height="70" fill="#272727"/>
<rect x="1742" y="506" width="2" height="34" fill="#272727"/>
<rect x="1742" y="544" width="2" height="34" fill="#272727"/>
<rect x="1742" y="582" width="2" height="34" fill="#272727"/>
<rect x="1742" y="620" width="2" height="34" fill="#272727"/>
<rect x="1742" y="658" width="2" height="34" fill="#272727"/>
<rect x="1742" y="802" width="2" height="70" fill="#272727"/>
<rect x="1742" y="876" width="2" height="70" fill="#272727"/>
<rect x="1742" y="950" width="2" height="70" fill="#272727"/>
<rect x="1742" y="1024" width="2" height="70" fill="#272727"/>
<rect x="1742" y="1098" width="2" height="70" fill="#272727"/>
<rect x="1742" y="1172" width="2" height="70" fill="#272727"/>
<rect x="1742" y="1246" width="2" height="70" fill="#272727"/>
<rect x="1742" y="1320" width="2" height="70" fill="#272727"/>
<rect x="1742" y="1400" width="2" height="34" fill="#4c5d65"/>
<rect x="1780" y="86" width="2" height="46" fill="#272727"/>
<rect x="1780" y="136" width="2" height="70" fill="#272727"/>
<rect x="1780" y="210" width="2" height="70" fill="#272727"/>
<rect x="1780" y="284" width="2" height="70" fill="#272727"/>
<rect x="1780" y="358" width="2" height="70" fill="#272727"/>
<rect x="1780" y="432" width="2" height="70" fill="#272727"/>
<rect x="1780" y="506" width="2" height="34" fill="#272727"/>
<rect x="1780" y="544" width="2" height="34" fill="#272727"/>
<rect x="1780" y="582" width="2" height="34" fill="#272727"/>
<rect x="1780" y="620" width="2" height="34" fill="#272727"/>
<rect x="1780" y="658" width="2" height="34" fill="#272727"/>
<rect x="1780" y="802" width="2" height="70" fill="#272727"/>
<rect x="1780" y="876" width="2" height="70" fill="#272727"/>
<rect x="1780" y="950" width="2" height="70" fill="#272727"/>
<rect x="1780" y="1024" width="2" height="70" fill="#272727"/>
<rect x="1780" y="1098" width="2" height="70" fill="#272727"/>
<rect x="1780" y="1172" width="2" height="70" fill="#272727"/>
<rect x="1780" y="1246" width="2" height="70" fill="#272727"/>
<rect x="1780" y="1320" width="2" height="70" fill="#272727"/>
<rect x="1780" y="1400" width="2" height="34" fill="#4c5d65"/>
<rect x="1820" y="86" width="2" height="46" fill="#272727"/>
<rect x="1820" y="136" width="2" height="70" fill="#272727"/>
<rect x="1820" y="210" width="2" height="70" fill="#272727"/>
<rect x="1820" y="284" width="2" height="70" fill="#272727"/>
<rect x="1820" y="358" width="2" height="70" fill="#272727"/>
<rect x="1820" y="432" width="2" height="70" fill="#272727"/>
<rect x="1820" y="506" width="2" height="34" fill="#272727"/>
<rect x="1820" y="544" width="2" height="34" fill="#272727"/>
<rect x="1820" y="582" width="2" height="34" fill="#272727"/>
<rect x="1820" y="620" width="2" height="34" fill="#272727"/>
<rect x="1820" y="658" width="2" height="34" fill="#272727"/>
<rect x="1820" y="802" width="2" height="70" fill="#272727"/>
<rect x="1820" y="876" width="2" height="70" fill="#272727"/>
<rect x="1820" y="950" width="2" height="70" fill="#272727"/>
<rect x="1820" y="1024" width="2" height="70" fill="#272727"/>
<rect x="1820" y="1098" width="2" height="70" fill="#272727"/>
<rect x="1820" y="1172" width="2" height="70" fill="#272727"/>
<rect x="1820" y="1246" width="2" height="70" fill="#272727"/>
<rect x="1820" y="1320" width="2" height="70" fill="#272727"/>
<rect x="1820" y="1400" width="2" height="34" fill="#4c5d65"/>
<rect x="1860" y="86" width="2" height="46" fill="#272727"/>
<rect x="1860" y="136" width="2" height="70" fill="#272727"/>
<rect x="1860" y="210" width="2" height="70" fill="#272727"/>
<rect x="1860" y="284" width="2" height="70" fill="#272727"/>
<rect x="1860" y="358" width="2" height="70" fill="#272727"/>
<rect x="1860" y="432" width="2" height="70" fill="#272727"/>
<rect x="1860" y="506" width="2" height="34" fill="#272727"/>
<rect x="1860" y="544" width="2" height="34" fill="#272727"/>
<rect x="1860" y="582" width="2" height="34" fill="#272727"/>
<rect x="1860" y="620" width="2" height="34" fill="#272727"/>
<rect x="1860" y="658" width="2" height="34" fill="#272727"/>
<rect x="1860" y="802" width="2" height="70" fill="#272727"/>
<rect x="1860" y="876" width="2" height="70" fill="#272727"/>
<rect x="1860" y="950" width="2" height="70" fill="#272727"/>
<rect x="1860" y="1024" width="2" height="70" fill="#272727"/>
<rect x="1860" y="1098" width="2" height="70" fill="#272727"/>
<rect x="1860" y="1172" width="2" height="70" fill="#272727"/>
<rect x="1860" y="1246" width="2" height="70" fill="#272727"/>
<rect x="1860" y="1320" width="2" height="70" fill="#272727"/>
<rect x="1860" y="1400" width="2" height="34" fill="#4c5d65"/>
<rect x="1898" y="86" width="2" height="46" fill="#272727"/>
<rect x="1898" y="136" width="2" height="70" fill="#272727"/>
<rect x="1898" y="210" width="2" height="70" fill="#272727"/>
<rect x="1898" y="284" width="2" height="70" fill="#272727"/>
<rect x="1898" y="358" width="2" height="70" fill="#272727"/>
<rect x="1898" y="432" width="2" height="70" fill="#272727"/>
<rect x="1898" y="506" width="2" height="34" fill="#272727"/>
<rect x="1898" y="544" width="2" height="34" fill="#272727"/>
<rect x="1898" y="582" width="2" height="34" fill="#272727"/>
<rect x="1898" y="620" width="2" height="34" fill="#272727"/>
<rect x="1898" y="658" width="2" height="34" fill="#272727"/>
<rect x="1898" y="802" width="2" height="70" fill="#272727"/>
<rect x="1898" y="876" width="2" height="70" fill="#272727"/>
<rect x="1898" y="950" width="2" height="70" fill="#272727"/>
<rect x="1898" y="1024" width="2" height="70" fill="#272727"/>
<rect x="1898" y="1098" width="2" height="70" fill="#272727"/>
<rect x="1898" y="1172" width="2" height="70" fill="#272727"/>
<rect x="1898" y="1246" width="2" height="70" fill="#272727"/>
<rect x="1898" y="1320" width="2" height="70" fill="#272727"/>
<rect x="1898" y="1400" width="2" height="34" fill="#4c5d65"/>
<rect x="1938" y="86" width="2" height="46" fill="#272727"/>
<rect x="1938" y="136" width="2" height="70" fill="#272727"/>
<rect x="1938" y="210" width="2" height="70" fill="#272727"/>
<rect x="1938" y="284" width="2" height="70" fill="#272727"/>
<rect x="1938" y="358" width="2" height="70" fill="#272727"/>
<rect x="1938" y="432" width="2" height="70" fill="#272727"/>
<rect x="1938" y="506" width="2" height="34" fill="#272727"/>
<rect x="1938" y="544" width="2" height="34" fill="#272727"/>
<rect x="1938" y="582" width="2" height="34" fill="#272727"/>
<rect x="1938" y="620" width="2" height="34" fill="#272727"/>
<rect x="1938" y="658" width="2" height="34" fill="#272727"/>
<rect x="1938" y="802" width="2" height="70" fill="#272727"/>
<rect x="1938" y="876" width="2" height="70" fill="#272727"/>
<rect x="1938" y="950" width="2" height="70" fill="#272727"/>
<rect x="1938" y="1024" width="2" height="70" fill="#272727"/>
<rect x="1938" y="1098" width="2" height="70" fill="#272727"/>
<rect x="1938" y="1172" width="2" height="70" fill="#272727"/>
<rect x="1938" y="1246" width="2" height="70" fill="#272727"/>
<rect x="1938" y="1320" width="2" height="70" fill="#272727"/>
<rect x="1938" y="1400" width="2" height="34" fill="#4c5d65"/>
<rect x="1978" y="86" width="2" height="46" fill="#272727"/>
<rect x="1978" y="136" width="2" height="70" fill="#272727"/>
<rect x="1978" y="210" width="2" height="70" fill="#272727"/>
<rect x="1978" y="284" width="2" height="70" fill="#272727"/>
<rect x="1978" y="358" width="2" height="70" fill="#272727"/>
<rect x="1978" y="432" width="2" height="70" fill="#272727"/>
<rect x="1978" y="506" width="2" height="34" fill="#272727"/>
<rect x="1978" y="544" width="2" height="34" fill="#272727"/>
<rect x="1978" y="582" width="2" height="34" fill="#272727"/>
<rect x="1978" y="620" width="2" height="34" fill="#272727"/>
<rect x="1978" y="658" width="2" height="34" fill="#272727"/>
<rect x="1978" y="802" width="2" height="70" fill="#272727"/>
<rect x="1978" y="876" width="2" height="70" fill="#272727"/>
<rect x="1978" y="950" width="2" height="70" fill="#272727"/>
<rect x="1978" y="1024" width="2" height="70" fill="#272727"/>
<rect x="1978" y="1098" width="2" height="70" fill="#272727"/>
<rect x="1978" y="1172" width="2" height="70" fill="#272727"/>
<rect x="1978" y="1246" width="2" height="70" fill="#272727"/>
<rect x="1978" y="1320" width="2" height="70" fill="#272727"/>
<rect x="1978" y="1400" width="2" height="34" fill="#4c5d65"/>
<rect x="2016" y="86" width="2" height="46" fill="#272727"/>
<rect x="2016" y="136" width="2" height="70" fill="#272727"/>
<rect x="2016" y="210" width="2" height="70" fill="#272727"/>
<rect x="2016" y="284" width="2" height="70" fill="#272727"/>
<rect x="2016" y="358" width="2" height="70" fill="#272727"/>
<rect x="2016" y="432" width="2" height="70" fill="#272727"/>
<rect x="2016" y="506" width="2" height="34" fill="#272727"/>
<rect x="2016" y="544" width="2" height="34" fill="#272727"/>
<rect x="2016" y="582" width="2" height="34" fill="#272727"/>
<rect x="2016" y="620" width="2" height="34" fill="#272727"/>
<rect x="2016" y="658" width="2" height="34" fill="#272727"/>
<rect x="2016" y="802" width="2" height="70" fill="#272727"/>
<rect x="2016" y="876" width="2" height="70" fill="#272727"/>
<rect x="2016" y="950" width="2" height="70" fill="#272727"/>
<rect x="2016" y="1024" width="2" height="70" fill="#272727"/>
<rect x="2016" y="1098" width="2" height="70" fill="#272727"/>
<rect x="2016" y="1172" width="2" height="70" fill="#272727"/>
<rect x="2016" y="1246" width="2" height="70" fill="#272727"/>
<rect x="2016" y="1320" width="2" height="70" fill="#272727"/>
<rect x="2016" y="1400" width="2" height="34" fill="#4c5d65"/>
<rect x="2056" y="86" width="2" height="46" fill="#272727"/>
<rect x="2056" y="136" width="2" height="70" fill="#272727"/>
<rect x="2056" y="210" width="2" height="70" fill="#272727"/>
<rect x="2056" y="284" width="2" height="70" fill="#272727"/>
<rect x="2056" y="358" width="2" height="70" fill="#272727"/>
<rect x="2056" y="432" width="2" height="70" fill="#272727"/>
<rect x="2056" y="506" width="2" height="34" fill="#272727"/>
<rect x="2056" y="544" width="2" height="34" fill="#272727"/>
<rect x="2056" y="582" width="2" height="34" fill="#272727"/>
<rect x="2056" y="620" width="2" height="34" fill="#272727"/>
<rect x="2056" y="658" width="2" height="34" fill="#272727"/>
<rect x="2056" y="802" width="2" height="70" fill="#272727"/>
<rect x="2056" y="876" width="2" height="70" fill="#272727"/>
<rect x="2056" y="950" width="2" height="70" fill="#272727"/>
<rect x="2056" y="1024" width="2" height="70" fill="#272727"/>
<rect x="2056" y="1098" width="2" height="70" fill="#272727"/>
<rect x="2056" y="1172" width="2" height="70" fill="#272727"/>
<rect x="2056" y="1246" width="2" height="70" fill="#272727"/>
<rect x="2056" y="1320" width="2" height="70" fill="#272727"/>
<rect x="2056" y="1400" width="2" height="34" fill="#4c5d65"/>
<rect x="2096" y="86" width="2" height="46" fill="#272727"/>
<rect x="2096" y="136" width="2" height="70" fill="#272727"/>
<rect x="2096" y="210" width="2" height="70" fill="#272727"/>
<rect x="2096" y="284" width="2" height="70" fill="#272727"/>
<rect x="2096" y="358" width="2" height="70" fill="#272727"/>
<rect x="2096" y="432" width="2" height="70" fill="#272727"/>
<rect x="2096" y="506" width="2" height="34" fill="#272727"/>
<rect x="2096" y="544" width="2" height="34" fill="#272727"/>
<rect x="2096" y="582" width="2" height="34" fill="#272727"/>
<rect x="2096" y="620" width="2" height="34" fill="#272727"/>
<rect x="2096" y="658" width="2" height="34" fill="#272727"/>
<rect x="2096" y="802" width="2" height="70" fill="#272727"/>
<rect x="2096" y="876" width="2" height="70" fill="#272727"/>
<rect x="2096" y="950" width="2" height="70" fill="#272727"/>
<rect x="2096" y="1024" width="2" height="70" fill="#272727"/>
<rect x="2096" y="1098" width="2" height="70" fill="#272727"/>
<rect x="2096" y="1172" width="2" height="70" fill="#272727"/>
<rect x="2096" y="1246" width="2" height="70" fill="#272727"/>
<rect x="2096" y="1320" width="2" height="70" fill="#272727"/>
<rect x="2096" y="1400" width="2" height="34" fill="#4c5d65"/>
<rect x="2134" y="86" width="2" height="46" fill="#272727"/>
<rect x="2134" y="136" width="2" height="70" fill="#272727"/>
<rect x="2134" y="210" width="2" height="70" fill="#272727"/>
<rect x="2134" y="284" width="2" height="70" fill="#272727"/>
<rect x="2134" y="358" width="2" height="70" fill="#272727"/>
<rect x="2134" y="432" width="2" height="70" fill="#272727"/>
<rect x="2134" y="506" width="2" height="34" fill="#272727"/>
<rect x="2134" y="544" width="2" height="34" fill="#272727"/>
<rect x="2134" y="582" width="2" height="34" fill="#272727"/>
<rect x="2134" y="620" width="2" height="34" fill="#272727"/>
<rect x="2134" y="658" width="2" height="34" fill="#272727"/>
<rect x="2134" y="802" width="2" height="70" fill="#272727"/>
<rect x="2134" y="876" width="2" height="70" fill="#272727"/>
<rect x="2134" y="950" width="2" height="70" fill="#272727"/>
<rect x="2134" y="1024" width="2" height="70" fill="#272727"/>
<rect x="2134" y="1098" width="2" height="70" fill="#272727"/>
<rect x="2134" y="1172" width="2" height="70" fill="#272727"/>
<rect x="2134" y="1246" width="2" height="70" fill="#272727"/>
<rect x="2134" y="1320" width="2" height="70" fill="#272727"/>
<rect x="2134" y="1400" width="2" height="34" fill="#4c5d65"/>
<rect x="2174" y="86" width="2" height="46" fill="#272727"/>
<rect x="2174" y="136" width="2" height="70" fill="#272727"/>
<rect x="2174" y="210" width="2" height="70" fill="#272727"/>
<rect x="2174" y="284" width="2" height="70" fill="#272727"/>
<rect x="2174" y="358" width="2" height="70" fill="#272727"/>
<rect x="2174" y="432" width="2" height="70" fill="#272727"/>
<rect x="2174" y="506" width="2" height="34" fill="#272727"/>
<rect x="2174" y="544" width="2" height="34" fill="#272727"/>
<rect x="2174" y="582" width="2" height="34" fill="#272727"/>
<rect x="2174" y="620" width="2" height="34" fill="#272727"/>
<rect x="2174" y="658" width="2" height="34" fill="#272727"/>
<rect x="2174" y="802" width="2" height="70" fill="#272727"/>
<rect x="2174" y="876" width="2" height="70" fill="#272727"/>
<rect x="2174" y="950" width="2" height="70" fill="#272727"/>
<rect x="2174" y="1024" width="2" height="70" fill="#272727"/>
<rect x="2174" y="1098" width="2" height="70" fill="#272727"/>
<rect x="2174" y="1172" width="2" height="70" fill="#272727"/>
<rect x="2174" y="1246" width="2" height="70" fill="#272727"/>
<rect x="2174" y="1320" width="2" height="70" fill="#272727"/>
<rect x="2174" y="1400" width="2" height="34" fill="#4c5d65"/>
<rect x="2214" y="86" width="2" height="46" fill="#272727"/>
<rect x="2214" y="136" width="2" height="70" fill="#272727"/>
<rect x="2214" y="210" width="2" height="70" fill="#272727"/>
<rect x="2214" y="284" width="2" height="70" fill="#272727"/>
<rect x="2214" y="358" width="2" height="70" fill="#272727"/>
<rect x="2214" y="432" width="2" height="70" fill="#272727"/>
<rect x="2214" y="506" width="2" height="34" fill="#272727"/>
<rect x="2214" y="544" width="2" height="34" fill="#272727"/>
<rect x="2214" y="582" width="2" height="34" fill="#272727"/>
<rect x="2214" y="620" width="2" height="34" fill="#272727"/>
<rect x="2214" y="658" width="2" height="34" fill="#272727"/>
<rect x="2214" y="802" width="2" height="70" fill="#272727"/>
<rect x="2214" y="876" width="2" height="70" fill="#272727"/>
<rect x="2214" y="950" width="2" height="70" fill="#272727"/>
<rect x="2214" y="1024" width="2" height="70" fill="#272727"/>
<rect x="2214" y="1098" width="2" height="70" fill="#272727"/>
<rect x="2214" y="1172" width="2" height="70" fill="#272727"/>
<rect x="2214" y="1246" width="2" height="70" fill="#272727"/>
<rect x="2214" y="1320" width="2" height="70" fill="#272727"/>
<rect x="2214" y="1400" width="2" height="34" fill="#4c5d65"/>
<rect x="10" y="136" width="310" height="70" fill="#56708f"/>
<rect x="10" y="138" width="310" height="30" fill="#9ac4fb"/>
<rect x="10" y="170" width="310" height="36" fill="#9ac4fb"/>
<rect x="12" y="170" width="2" height="36" fill="#6a88b2"/>
<rect x="50" y="170" width="2" height="36" fill="#6a88b2"/>
<rect x="90" y="170" width="2" height="36" fill="#6a88b2"/>
<rect x="130" y="170" width="2" height="36" fill="#6a88b2"/>
<rect x="168" y="170" width="2" height="36" fill="#6a88b2"/>
<rect x="208" y="170" width="2" height="36" fill="#6a88b2"/>
<rect x="248" y="170" width="2" height="36" fill="#6a88b2"/>
<rect x="286" y="170" width="2" height="36" fill="#6a88b2"/>
<path class="aa" d="M312 170L320 170L320 206Z" fill="#6485b4" opacity=".5"/>
<path class="aa" d="M10 176.67L12 177.17L14 178.02L16 178.2L18 178.2L20 178.2L22 177.15L24 177.77L26 177.5L28 176.64L30 177.48L32 178.02L34 177.02L36 177.12L38 178.12L40 177.65L42 177.11L44 177.89L46 178.09L48 178.08L50 178.2L52 178.2L54 178.2L56 178.2L58 178.2L60 178.2L62 178.03L64 176.45L66 177.51L68 177.02L70 176.23L72 177.03L74 177.19L76 176.42L78 176.75L80 177.07L82 176.49L84 176.7L86 177.06L88 176.37L90 176.51L92 177.25L94 177.61L96 178.2L98 178.2L100 177.5L102 176.55L104 176.98L106 176.45L108 176.71L110 177.28L112 176.65L114 176.65L116 177.59L118 177.16L120 176.56L122 177.55L124 177.81L126 177.43L128 178.2L130 178.2L132 178.2L134 178.2L136 178.2L138 178.2L140 178.15L142 175.53L144 176.7L146 175.75L148 173.92L150 175.88L152 176.73L154 174.33L156 174.72L158 176.82L160 175.39L162 174.19L164 176.08L166 176.16L168 174.51L170 175.33L172 176.85L174 178.1L176 178.1L178 177.81L180 174.28L182 176.55L184 176.09L186 174.69L188 176.02L190 176.7L192 175.59L194 175.96L196 176.79L198 176.25L200 176.33L202 176.98L204 176.94L206 177.91L208 178.2L210 178.2L212 178.2L214 178.2L216 178.2L218 178.2L220 176.62L222 175.66L224 175.79L226 174.75L228 175.55L230 176.24L232 174.7L234 174.91L236 176.63L238 175.32L240 174.13L242 176.26L244 176.39L246 174.06L248 175.15L250 176.98L252 177.7L254 178.1L256 178.1L258 175.24L260 176.57L262 176.05L264 174.37L266 176.06L268 177.12L270 175.24L272 175.46L274 177.34L276 176.5L278 175.53L280 176.97L282 177.35L284 177.37L286 178.2L288 178.2L290 178.2L292 178.2L294 178.2L296 178.2L298 177.33L300 174.67L302 176.47L304 175.68L306 174.44L308 175.76L310 176L312 174.83L314 175.42L316 175.89L318 174.99L320 175.42L320 182.58L318 183.01L316 182.11L314 182.58L312 183.17L310 182L308 182.24L306 183.56L304 182.32L302 181.53L300 183.33L298 180.67L296 179.8L294 179.8L292 179.8L290 179.8L288 179.8L286 179.8L284 180.63L282 180.65L280 181.03L278 182.47L276 181.5L274 180.66L272 182.54L270 182.76L268 180.88L266 181.94L264 183.63L262 181.95L260 181.43L258 182.76L256 179.9L254 179.9L252 180.3L250 181.02L248 182.85L246 183.94L244 181.61L242 181.74L240 183.87L238 182.68L236 181.37L234 183.09L232 183.3L230 181.76L228 182.45L226 183.25L224 182.21L222 182.34L220 181.38L218 179.8L216 179.8L214 179.8L212 179.8L210 179.8L208 179.8L206 180.09L204 181.06L202 181.02L200 181.67L198 181.75L196 181.21L194 182.04L192 182.41L190 181.3L188 181.98L186 183.31L184 181.91L182 181.45L180 183.72L178 180.19L176 179.9L174 179.9L172 181.15L170 182.67L168 183.49L166 181.84L164 181.92L162 183.81L160 182.61L158 181.18L156 183.28L154 183.67L152 181.27L150 182.12L148 184.08L146 182.25L144 181.3L142 182.47L140 179.85L138 179.8L136 179.8L134 179.8L132 179.8L130 179.8L128 179.8L126 180.57L124 180.19L122 180.45L120 181.44L118 180.84L116 180.41L114 181.35L112 181.35L110 180.72L108 181.29L106 181.55L104 181.02L102 181.45L100 180.5L98 179.8L96 179.8L94 180.39L92 180.75L90 181.49L88 181.63L86 180.94L84 181.3L82 181.51L80 180.93L78 181.25L76 181.58L74 180.81L72 180.97L70 181.77L68 180.98L66 180.49L64 181.55L62 179.97L60 179.8L58 179.8L56 179.8L54 179.8L52 179.8L50 179.8L48 179.92L46 179.91L44 180.11L42 180.89L40 180.35L38 179.88L36 180.88L34 180.98L32 179.98L30 180.52L28 181.36L26 180.5L24 180.23L22 180.85L20 179.8L18 179.8L16 179.8L14 179.98L12 180.83L10 181.33Z" fill="#1d1d21"/>
<path class="aa" d="M10 194.76L12 195.24L14 196.06L16 196.2L18 196.2L20 196.2L22 195.22L24 195.82L26 195.56L28 194.73L30 195.54L32 196.06L34 195.1L36 195.2L38 196.15L40 195.7L42 195.18L44 195.94L46 196.13L48 196.12L50 196.2L52 196.2L54 196.2L56 196.2L58 196.2L60 196.2L62 196.07L64 194.55L66 195.57L68 195.1L70 194.34L72 195.11L74 195.26L76 194.52L78 194.84L80 195.15L82 194.59L84 194.8L86 195.14L88 194.48L90 194.61L92 195.32L94 195.66L96 196.2L98 196.2L100 195.56L102 194.65L104 195.06L106 194.55L108 194.8L110 195.35L112 194.75L114 194.74L116 195.64L118 195.23L120 194.66L122 195.61L124 195.85L126 195.49L128 196.2L130 196.2L132 196.2L134 196.2L136 196.2L138 196.2L140 196.18L142 193.67L144 194.8L146 193.88L148 192.12L150 194.01L152 194.82L154 192.52L156 192.9L158 194.91L160 193.54L162 192.38L164 194.2L166 194.28L168 192.69L170 193.48L172 194.94L174 196.14L176 196.14L178 195.86L180 192.47L182 194.65L184 194.21L186 192.87L188 194.14L190 194.79L192 193.72L194 194.09L196 194.88L198 194.36L200 194.44L202 195.07L204 195.02L206 195.96L208 196.2L210 196.2L212 196.2L214 196.2L216 196.2L218 196.2L220 194.72L222 193.8L224 193.92L226 192.92L228 193.69L230 194.35L232 192.87L234 193.08L236 194.72L238 193.47L240 192.33L242 194.37L244 194.49L246 192.26L248 193.31L250 195.06L252 195.75L254 196.14L256 196.14L258 193.39L260 194.67L262 194.17L264 192.56L266 194.18L268 195.2L270 193.39L272 193.6L274 195.41L276 194.6L278 193.67L280 195.06L282 195.41L284 195.44L286 196.2L288 196.2L290 196.2L292 196.2L294 196.2L296 196.2L298 195.4L300 192.85L302 194.57L304 193.81L306 192.63L308 193.89L310 194.12L312 193L314 193.57L316 194.02L318 193.15L320 193.57L320 200.43L318 200.85L316 199.98L314 200.43L312 201L310 199.88L308 200.11L306 201.37L304 200.19L302 199.43L300 201.15L298 198.6L296 197.8L294 197.8L292 197.8L290 197.8L288 197.8L286 197.8L284 198.56L282 198.59L280 198.94L278 200.33L276 199.4L274 198.59L272 200.4L270 200.61L268 198.8L266 199.82L264 201.44L262 199.83L260 199.33L258 200.61L256 197.86L254 197.86L252 198.25L250 198.94L248 200.69L246 201.74L244 199.51L242 199.63L240 201.67L238 200.53L236 199.28L234 200.92L232 201.13L230 199.65L228 200.31L226 201.08L224 200.08L222 200.2L220 199.28L218 197.8L216 197.8L214 197.8L212 197.8L210 197.8L208 197.8L206 198.04L204 198.98L202 198.93L200 199.56L198 199.64L196 199.12L194 199.91L192 200.28L190 199.21L188 199.86L186 201.13L184 199.79L182 199.35L180 201.53L178 198.14L176 197.86L174 197.86L172 199.06L170 200.52L168 201.31L166 199.72L164 199.8L162 201.62L160 200.46L158 199.09L156 201.1L154 201.48L152 199.18L150 199.99L148 201.88L146 200.12L144 199.2L142 200.33L140 197.82L138 197.8L136 197.8L134 197.8L132 197.8L130 197.8L128 197.8L126 198.51L124 198.15L122 198.39L120 199.34L118 198.77L116 198.36L114 199.26L112 199.25L110 198.65L108 199.2L106 199.45L104 198.94L102 199.35L100 198.44L98 197.8L96 197.8L94 198.34L92 198.68L90 199.39L88 199.52L86 198.86L84 199.2L82 199.41L80 198.85L78 199.16L76 199.48L74 198.74L72 198.89L70 199.66L68 198.9L66 198.43L64 199.45L62 197.93L60 197.8L58 197.8L56 197.8L54 197.8L52 197.8L50 197.8L48 197.88L46 197.87L44 198.06L42 198.82L40 198.3L38 197.85L36 198.8L34 198.9L32 197.94L30 198.46L28 199.27L26 198.44L24 198.18L22 198.78L20 197.8L18 197.8L16 197.8L14 197.94L12 198.76L10 199.24Z" fill="#1d1d21"/>
<svg x="10" y="136" width="310" height="32" overflow="hidden"><text x="6" y="23.6" font-family="'Liberation Sans',sans-serif" font-size="20" letter-spacing=".68" fill="#1c2a3a" stroke="#1c2a3a" stroke-width=".3">... vox - mix (Freeze tail)</text></svg>
<rect x="792" y="136" width="36" height="70" fill="#56708f"/>
<rect x="794" y="138" width="34" height="30" fill="#9ac4fb"/>
<rect x="794" y="170" width="34" height="36" fill="#9ac4fb"/>
<rect x="798" y="170" width="2" height="36" fill="#6a88b2"/>
<path class="aa" d="M822 170L828 170L828 206Z" fill="#6485b4" opacity=".5"/>
<path class="aa" d="M794 178.2L796 177.98L798 176.41L800 175.62L802 177.19L804 178.1L806 177.77L808 175.37L810 176.55L812 175.65L814 174.24L816 176.29L818 177.04L820 175.26L822 175.91L824 177.56L826 176.67L828 176.18L828 181.82L826 181.33L824 180.44L822 182.09L820 182.74L818 180.96L816 181.71L814 183.76L812 182.35L810 181.45L808 182.63L806 180.23L804 179.9L802 180.81L800 182.38L798 181.59L796 180.02L794 179.8Z" fill="#1d1d21"/>
<path class="aa" d="M794 196.2L796 196.02L798 194.51L800 193.76L802 195.27L804 196.14L806 195.82L808 193.52L810 194.65L812 193.79L814 192.43L816 194.4L818 195.12L820 193.41L822 194.03L824 195.62L826 194.76L828 194.3L828 199.7L826 199.24L824 198.38L822 199.97L820 200.59L818 198.88L816 199.6L814 201.57L812 200.21L810 199.35L808 200.48L806 198.18L804 197.86L802 198.73L800 200.24L798 199.49L796 197.98L794 197.8Z" fill="#1d1d21"/>
<svg x="794" y="136" width="34" height="32" overflow="hidden"><text x="5" y="23.6" font-family="'Liberation Sans',sans-serif" font-size="20" letter-spacing=".68" fill="#1c2a3a" stroke="#1c2a3a" stroke-width=".3">vox - mix (Freeze tail)</text></svg>
<rect x="842" y="136" width="22" height="70" fill="#56708f"/>
<rect x="844" y="138" width="20" height="30" fill="#9ac4fb"/>
<rect x="844" y="170" width="20" height="36" fill="#9ac4fb"/>
<path class="aa" d="M844 178.2L846 178.05L848 176.59L850 175.85L852 177.32L854 178.1L856 177.61L858 175.85L860 176.96L862 175.88L864 175.77L864 182.23L862 182.12L860 181.04L858 182.15L856 180.39L854 179.9L852 180.68L850 182.15L848 181.41L846 179.95L844 179.8Z" fill="#1d1d21"/>
<path class="aa" d="M844 196.2L846 196.09L848 194.68L850 193.98L852 195.39L854 196.14L856 195.66L858 193.97L860 195.04L862 194L864 193.9L864 200.1L862 200L860 198.96L858 200.03L856 198.34L854 197.86L852 198.61L850 200.02L848 199.32L846 197.91L844 197.8Z" fill="#1d1d21"/>
<svg x="844" y="136" width="20" height="32" overflow="hidden"><text x="5" y="23.6" font-family="'Liberation Sans',sans-serif" font-size="20" letter-spacing=".68" fill="#1c2a3a" stroke="#1c2a3a" stroke-width=".3">vox - mix (Freeze tail)</text></svg>
<rect x="872" y="136" width="4" height="70" fill="#56708f"/>
<rect x="874" y="138" width="2" height="30" fill="#9ac4fb"/>
<rect x="874" y="170" width="2" height="36" fill="#9ac4fb"/>
<path class="aa" d="M874 176L876 176L876 182L874 182Z" fill="#1d1d21"/>
<path class="aa" d="M874 194.12L876 194.12L876 199.88L874 199.88Z" fill="#1d1d21"/>
<rect x="876" y="136" width="30" height="70" fill="#56708f"/>
<rect x="878" y="138" width="28" height="30" fill="#9ac4fb"/>
<rect x="878" y="170" width="28" height="36" fill="#9ac4fb"/>
<path class="aa" d="M900 170L906 170L906 206Z" fill="#6485b4" opacity=".5"/>
<path class="aa" d="M878 178.2L880 177.82L882 176L884 175.1L886 176.91L888 178.1L890 178.2L892 176.98L894 174.74L896 175.75L898 177.31L900 176.13L902 175.86L904 177.57L906 177.51L906 180.49L904 180.43L902 182.14L900 181.87L898 180.69L896 182.25L894 183.26L892 181.02L890 179.8L888 179.9L886 181.09L884 182.9L882 182L880 180.18L878 179.8Z" fill="#1d1d21"/>
<path class="aa" d="M878 196.2L880 195.87L882 194.12L884 193.25L886 195L888 196.14L890 196.2L892 195.06L894 192.91L896 193.88L898 195.38L900 194.24L902 193.99L904 195.63L906 195.57L906 198.43L904 198.37L902 200.01L900 199.76L898 198.62L896 200.12L894 201.09L892 198.94L890 197.8L888 197.86L886 199L884 200.75L882 199.88L880 198.13L878 197.8Z" fill="#1d1d21"/>
<svg x="878" y="136" width="28" height="32" overflow="hidden"><text x="5" y="23.6" font-family="'Liberation Sans',sans-serif" font-size="20" letter-spacing=".68" fill="#1c2a3a" stroke="#1c2a3a" stroke-width=".3">vox - mix (Freeze tail)</text></svg>
<rect x="920" y="136" width="22" height="70" fill="#56708f"/>
<rect x="922" y="138" width="20" height="30" fill="#9ac4fb"/>
<rect x="922" y="170" width="20" height="36" fill="#9ac4fb"/>
<path class="aa" d="M922 178.2L924 178.02L926 176.5L928 175.74L930 177.26L932 178.1L934 178.2L936 176.7L938 174.5L940 176.35L942 177.41L942 180.59L940 181.65L938 183.5L936 181.3L934 179.8L932 179.9L930 180.74L928 182.26L926 181.5L924 179.98L922 179.8Z" fill="#1d1d21"/>
<path class="aa" d="M922 196.2L924 196.06L926 194.6L928 193.87L930 195.33L932 196.14L934 196.2L936 194.8L938 192.68L940 194.46L942 195.47L942 198.53L940 199.54L938 201.32L936 199.2L934 197.8L932 197.86L930 198.67L928 200.13L926 199.4L924 197.94L922 197.8Z" fill="#1d1d21"/>
<svg x="922" y="136" width="20" height="32" overflow="hidden"><text x="5" y="23.6" font-family="'Liberation Sans',sans-serif" font-size="20" letter-spacing=".68" fill="#1c2a3a" stroke="#1c2a3a" stroke-width=".3">vox - mix (Freeze tail)</text></svg>
<rect x="942" y="136" width="332" height="70" fill="#56708f"/>
<rect x="944" y="138" width="330" height="30" fill="#9ac4fb"/>
<rect x="944" y="170" width="330" height="36" fill="#9ac4fb"/>
<rect x="954" y="170" width="2" height="36" fill="#6a88b2"/>
<rect x="994" y="170" width="2" height="36" fill="#6a88b2"/>
<rect x="1034" y="170" width="2" height="36" fill="#6a88b2"/>
<rect x="1072" y="170" width="2" height="36" fill="#6a88b2"/>
<rect x="1112" y="170" width="2" height="36" fill="#6a88b2"/>
<rect x="1152" y="170" width="2" height="36" fill="#6a88b2"/>
<rect x="1190" y="170" width="2" height="36" fill="#6a88b2"/>
<rect x="1230" y="170" width="2" height="36" fill="#6a88b2"/>
<rect x="1270" y="170" width="2" height="36" fill="#6a88b2"/>
<path class="aa" d="M1270 170L1274 170L1274 206Z" fill="#6485b4" opacity=".5"/>
<path class="aa" d="M944 176.71L946 175.32L948 174.08L950 176.27L952 176.41L954 174.05L956 175.14L958 177.01L960 177.79L962 178.1L964 178.1L966 175.09L968 176.62L970 176.08L972 174.34L974 176.06L976 177.13L978 175.26L980 175.46L982 177.31L984 176.5L986 175.57L988 176.96L990 177.32L992 177.43L994 178.2L996 178.2L998 178.2L1000 178.2L1002 178.2L1004 178.2L1006 177.27L1008 174.66L1010 176.4L1012 175.63L1014 174.55L1016 175.78L1018 175.88L1020 174.87L1022 175.53L1024 175.81L1026 174.92L1028 175.54L1030 176L1032 174.76L1034 175.2L1036 176.45L1038 176.94L1040 178.1L1042 178.1L1044 176.61L1046 175.54L1048 175.99L1050 175.13L1052 175.77L1054 176.61L1056 175.53L1058 175.62L1060 177.09L1062 176.41L1064 175.53L1066 177.01L1068 177.39L1070 176.88L1072 178.2L1074 178.2L1076 178.2L1078 178.2L1080 178.2L1082 178.2L1084 178.04L1086 175.39L1088 176.75L1090 175.77L1092 173.9L1094 175.87L1096 176.72L1098 174.37L1100 174.74L1102 176.75L1104 175.39L1106 174.29L1108 176.04L1110 176.05L1112 174.61L1114 175.42L1116 176.82L1118 178.1L1120 178.1L1122 177.68L1124 174.35L1126 176.49L1128 176.04L1130 174.81L1132 176.05L1134 176.57L1136 175.62L1138 176.08L1140 176.72L1142 176.17L1144 176.44L1146 177.02L1148 176.89L1150 177.96L1152 178.2L1154 178.2L1156 178.2L1158 178.2L1160 178.2L1162 178.2L1164 176.51L1166 175.83L1168 175.75L1170 174.61L1172 175.65L1174 176.32L1176 174.58L1178 174.88L1180 176.73L1182 175.32L1184 174.07L1186 176.28L1188 176.42L1190 174.05L1192 175.14L1194 177.01L1196 177.82L1198 178.1L1200 178.1L1202 175.04L1204 176.64L1206 176.08L1208 174.34L1210 176.05L1212 177.14L1214 175.26L1216 175.47L1218 177.3L1220 176.5L1222 175.59L1224 176.96L1226 177.31L1228 177.45L1230 178.2L1232 178.2L1234 178.2L1236 178.2L1238 178.2L1240 178.2L1242 177.25L1244 174.66L1246 176.38L1248 175.61L1250 174.58L1252 175.78L1254 175.84L1256 174.88L1258 175.57L1260 175.78L1262 174.89L1264 175.58L1266 176.01L1268 174.73L1270 175.2L1272 176.48L1274 176.96L1274 181.04L1272 181.52L1270 182.8L1268 183.27L1266 181.99L1264 182.42L1262 183.11L1260 182.22L1258 182.43L1256 183.12L1254 182.16L1252 182.22L1250 183.42L1248 182.39L1246 181.62L1244 183.34L1242 180.75L1240 179.8L1238 179.8L1236 179.8L1234 179.8L1232 179.8L1230 179.8L1228 180.55L1226 180.69L1224 181.04L1222 182.41L1220 181.5L1218 180.7L1216 182.53L1214 182.74L1212 180.86L1210 181.95L1208 183.66L1206 181.92L1204 181.36L1202 182.96L1200 179.9L1198 179.9L1196 180.18L1194 180.99L1192 182.86L1190 183.95L1188 181.58L1186 181.72L1184 183.93L1182 182.68L1180 181.27L1178 183.12L1176 183.42L1174 181.68L1172 182.35L1170 183.39L1168 182.25L1166 182.17L1164 181.49L1162 179.8L1160 179.8L1158 179.8L1156 179.8L1154 179.8L1152 179.8L1150 180.04L1148 181.11L1146 180.98L1144 181.56L1142 181.83L1140 181.28L1138 181.92L1136 182.38L1134 181.43L1132 181.95L1130 183.19L1128 181.96L1126 181.51L1124 183.65L1122 180.32L1120 179.9L1118 179.9L1116 181.18L1114 182.58L1112 183.39L1110 181.95L1108 181.96L1106 183.71L1104 182.61L1102 181.25L1100 183.26L1098 183.63L1096 181.28L1094 182.13L1092 184.1L1090 182.23L1088 181.25L1086 182.61L1084 179.96L1082 179.8L1080 179.8L1078 179.8L1076 179.8L1074 179.8L1072 179.8L1070 181.12L1068 180.61L1066 180.99L1064 182.47L1062 181.59L1060 180.91L1058 182.38L1056 182.47L1054 181.39L1052 182.23L1050 182.87L1048 182.01L1046 182.46L1044 181.39L1042 179.9L1040 179.9L1038 181.06L1036 181.55L1034 182.8L1032 183.24L1030 182L1028 182.46L1026 183.08L1024 182.19L1022 182.47L1020 183.13L1018 182.12L1016 182.22L1014 183.45L1012 182.37L1010 181.6L1008 183.34L1006 180.73L1004 179.8L1002 179.8L1000 179.8L998 179.8L996 179.8L994 179.8L992 180.57L990 180.68L988 181.04L986 182.43L984 181.5L982 180.69L980 182.54L978 182.74L976 180.87L974 181.94L972 183.66L970 181.92L968 181.38L966 182.91L964 179.9L962 179.9L960 180.21L958 180.99L956 182.86L954 183.95L952 181.59L950 181.73L948 183.92L946 182.68L944 181.29Z" fill="#1d1d21"/>
<path class="aa" d="M944 194.8L946 193.46L948 192.28L950 194.38L952 194.51L954 192.25L956 193.29L958 195.09L960 195.84L962 196.14L964 196.14L966 193.24L968 194.72L970 194.19L972 192.53L974 194.17L976 195.21L978 193.41L980 193.6L982 195.38L984 194.6L986 193.71L988 195.04L990 195.39L992 195.49L994 196.2L996 196.2L998 196.2L1000 196.2L1002 196.2L1004 196.2L1006 195.34L1008 192.83L1010 194.51L1012 193.76L1014 192.72L1016 193.9L1018 194.01L1020 193.03L1022 193.67L1024 193.94L1026 193.08L1028 193.68L1030 194.12L1032 192.93L1034 193.35L1036 194.55L1038 195.03L1040 196.14L1042 196.14L1044 194.71L1046 193.68L1048 194.11L1050 193.29L1052 193.9L1054 194.7L1056 193.67L1058 193.76L1060 195.17L1062 194.51L1064 193.67L1066 195.09L1068 195.45L1070 194.96L1072 196.2L1074 196.2L1076 196.2L1078 196.2L1080 196.2L1082 196.2L1084 196.08L1086 193.53L1088 194.84L1090 193.9L1092 192.11L1094 193.99L1096 194.81L1098 192.55L1100 192.91L1102 194.84L1104 193.53L1106 192.48L1108 194.16L1110 194.17L1112 192.78L1114 193.56L1116 194.91L1118 196.14L1120 196.14L1122 195.74L1124 192.54L1126 194.59L1128 194.16L1130 192.97L1132 194.16L1134 194.67L1136 193.76L1138 194.2L1140 194.81L1142 194.29L1144 194.54L1146 195.1L1148 194.98L1150 196L1152 196.2L1154 196.2L1156 196.2L1158 196.2L1160 196.2L1162 196.2L1164 194.61L1166 193.96L1168 193.88L1170 192.78L1172 193.78L1174 194.43L1176 192.76L1178 193.05L1180 194.82L1182 193.46L1184 192.26L1186 194.39L1188 194.52L1190 192.25L1192 193.29L1194 195.09L1196 195.86L1198 196.14L1200 196.14L1202 193.19L1204 194.73L1206 194.2L1208 192.52L1210 194.17L1212 195.21L1214 193.41L1216 193.61L1218 195.37L1220 194.6L1222 193.73L1224 195.04L1226 195.38L1228 195.51L1230 196.2L1232 196.2L1234 196.2L1236 196.2L1238 196.2L1240 196.2L1242 195.32L1244 192.83L1246 194.48L1248 193.75L1250 192.76L1252 193.91L1254 193.97L1256 193.04L1258 193.71L1260 193.91L1262 193.05L1264 193.71L1266 194.13L1268 192.9L1270 193.35L1272 194.58L1274 195.04L1274 198.96L1272 199.42L1270 200.65L1268 201.1L1266 199.87L1264 200.29L1262 200.95L1260 200.09L1258 200.29L1256 200.96L1254 200.03L1252 200.09L1250 201.24L1248 200.25L1246 199.52L1244 201.17L1242 198.68L1240 197.8L1238 197.8L1236 197.8L1234 197.8L1232 197.8L1230 197.8L1228 198.49L1226 198.62L1224 198.96L1222 200.27L1220 199.4L1218 198.63L1216 200.39L1214 200.59L1212 198.79L1210 199.83L1208 201.48L1206 199.8L1204 199.27L1202 200.81L1200 197.86L1198 197.86L1196 198.14L1194 198.91L1192 200.71L1190 201.75L1188 199.48L1186 199.61L1184 201.74L1182 200.54L1180 199.18L1178 200.95L1176 201.24L1174 199.57L1172 200.22L1170 201.22L1168 200.12L1166 200.04L1164 199.39L1162 197.8L1160 197.8L1158 197.8L1156 197.8L1154 197.8L1152 197.8L1150 198L1148 199.02L1146 198.9L1144 199.46L1142 199.71L1140 199.19L1138 199.8L1136 200.24L1134 199.33L1132 199.84L1130 201.03L1128 199.84L1126 199.41L1124 201.46L1122 198.26L1120 197.86L1118 197.86L1116 199.09L1114 200.44L1112 201.22L1110 199.83L1108 199.84L1106 201.52L1104 200.47L1102 199.16L1100 201.09L1098 201.45L1096 199.19L1094 200.01L1092 201.89L1090 200.1L1088 199.16L1086 200.47L1084 197.92L1082 197.8L1080 197.8L1078 197.8L1076 197.8L1074 197.8L1072 197.8L1070 199.04L1068 198.55L1066 198.91L1064 200.33L1062 199.49L1060 198.83L1058 200.24L1056 200.33L1054 199.3L1052 200.1L1050 200.71L1048 199.89L1046 200.32L1044 199.29L1042 197.86L1040 197.86L1038 198.97L1036 199.45L1034 200.65L1032 201.07L1030 199.88L1028 200.32L1026 200.92L1024 200.06L1022 200.33L1020 200.97L1018 199.99L1016 200.1L1014 201.28L1012 200.24L1010 199.49L1008 201.17L1006 198.66L1004 197.8L1002 197.8L1000 197.8L998 197.8L996 197.8L994 197.8L992 198.51L990 198.61L988 198.96L986 200.29L984 199.4L982 198.62L980 200.4L978 200.59L976 198.79L974 199.83L972 201.47L970 199.81L968 199.28L966 200.76L964 197.86L962 197.86L960 198.16L958 198.91L956 200.71L954 201.75L952 199.49L950 199.62L948 201.72L946 200.54L944 199.2Z" fill="#1d1d21"/>
<svg x="944" y="136" width="330" height="32" overflow="hidden"><text x="5" y="23.6" font-family="'Liberation Sans',sans-serif" font-size="20" letter-spacing=".68" fill="#1c2a3a" stroke="#1c2a3a" stroke-width=".3">vox - mix (Freeze tail)</text></svg>
<rect x="1584" y="136" width="50" height="70" fill="#56708f"/>
<rect x="1586" y="138" width="48" height="30" fill="#9ac4fb"/>
<rect x="1586" y="170" width="48" height="36" fill="#9ac4fb"/>
<rect x="1624" y="170" width="2" height="36" fill="#6a88b2"/>
<path class="aa" d="M1626 170L1634 170L1634 206Z" fill="#6485b4" opacity=".5"/>
<path class="aa" d="M1586 178.2L1588 178.07L1590 176.65L1592 175.94L1594 177.36L1596 178.1L1598 177.86L1600 175.34L1602 176.15L1604 175.57L1606 173.98L1608 175.8L1610 176.76L1612 174.7L1614 175.1L1616 177.18L1618 176.04L1620 174.96L1622 176.79L1624 177.12L1626 175.65L1628 176.36L1630 177.47L1632 176.63L1634 176.46L1634 181.54L1632 181.37L1630 180.53L1628 181.64L1626 182.35L1624 180.88L1622 181.21L1620 183.04L1618 181.96L1616 180.82L1614 182.9L1612 183.3L1610 181.24L1608 182.2L1606 184.02L1604 182.43L1602 181.85L1600 182.66L1598 180.14L1596 179.9L1594 180.64L1592 182.06L1590 181.35L1588 179.93L1586 179.8Z" fill="#1d1d21"/>
<path class="aa" d="M1586 196.2L1588 196.11L1590 194.74L1592 194.06L1594 195.43L1596 196.14L1598 195.91L1600 193.48L1602 194.26L1604 193.71L1606 192.18L1608 193.93L1610 194.85L1612 192.87L1614 193.26L1616 195.25L1618 194.15L1620 193.12L1622 194.88L1624 195.2L1626 193.79L1628 194.46L1630 195.54L1632 194.73L1634 194.56L1634 199.44L1632 199.27L1630 198.46L1628 199.54L1626 200.21L1624 198.8L1622 199.12L1620 200.88L1618 199.85L1616 198.75L1614 200.74L1612 201.13L1610 199.15L1608 200.07L1606 201.82L1604 200.29L1602 199.74L1600 200.52L1598 198.09L1596 197.86L1594 198.57L1592 199.94L1590 199.26L1588 197.89L1586 197.8Z" fill="#1d1d21"/>
<svg x="1586" y="136" width="48" height="32" overflow="hidden"><text x="5" y="23.6" font-family="'Liberation Sans',sans-serif" font-size="20" letter-spacing=".68" fill="#1c2a3a" stroke="#1c2a3a" stroke-width=".3">vox - mix (Freeze tail)</text></svg>
<rect x="1648" y="136" width="22" height="70" fill="#56708f"/>
<rect x="1650" y="138" width="20" height="30" fill="#9ac4fb"/>
<rect x="1650" y="170" width="20" height="36" fill="#9ac4fb"/>
<rect x="1662" y="170" width="2" height="36" fill="#6a88b2"/>
<path class="aa" d="M1650 178.2L1652 177.91L1654 176.24L1656 175.41L1658 177.08L1660 178.1L1662 177.6L1664 175.66L1666 177.03L1668 175.94L1670 175.54L1670 182.46L1668 182.06L1666 180.97L1664 182.34L1662 180.4L1660 179.9L1658 180.92L1656 182.59L1654 181.76L1652 180.09L1650 179.8Z" fill="#1d1d21"/>
<path class="aa" d="M1650 196.2L1652 195.96L1654 194.35L1656 193.55L1658 195.15L1660 196.14L1662 195.65L1664 193.8L1666 195.11L1668 194.06L1670 193.68L1670 200.32L1668 199.94L1666 198.89L1664 200.2L1662 198.35L1660 197.86L1658 198.85L1656 200.45L1654 199.65L1652 198.04L1650 197.8Z" fill="#1d1d21"/>
<svg x="1650" y="136" width="20" height="32" overflow="hidden"><text x="5" y="23.6" font-family="'Liberation Sans',sans-serif" font-size="20" letter-spacing=".68" fill="#1c2a3a" stroke="#1c2a3a" stroke-width=".3">vox - mix (Freeze tail)</text></svg>
<rect x="1678" y="136" width="4" height="70" fill="#56708f"/>
<rect x="1680" y="138" width="2" height="30" fill="#9ac4fb"/>
<rect x="1680" y="170" width="2" height="36" fill="#9ac4fb"/>
<path class="aa" d="M1680 176L1682 176L1682 182L1680 182Z" fill="#1d1d21"/>
<path class="aa" d="M1680 194.12L1682 194.12L1682 199.88L1680 199.88Z" fill="#1d1d21"/>
<rect x="1682" y="136" width="30" height="70" fill="#56708f"/>
<rect x="1684" y="138" width="28" height="30" fill="#9ac4fb"/>
<rect x="1684" y="170" width="28" height="36" fill="#9ac4fb"/>
<rect x="1702" y="170" width="2" height="36" fill="#6a88b2"/>
<path class="aa" d="M1706 170L1712 170L1712 206Z" fill="#6485b4" opacity=".5"/>
<path class="aa" d="M1684 178.2L1686 178.08L1688 176.66L1690 175.96L1692 177.37L1694 178.1L1696 178.02L1698 176.68L1700 174.57L1702 175.26L1704 176.93L1706 175.95L1708 175.52L1710 177.29L1712 177.39L1712 180.61L1710 180.71L1708 182.48L1706 182.05L1704 181.07L1702 182.74L1700 183.43L1698 181.32L1696 179.98L1694 179.9L1692 180.63L1690 182.04L1688 181.34L1686 179.92L1684 179.8Z" fill="#1d1d21"/>
<path class="aa" d="M1684 196.2L1686 196.12L1688 194.76L1690 194.08L1692 195.44L1694 196.14L1696 196.06L1698 194.78L1700 192.75L1702 193.41L1704 195.01L1706 194.07L1708 193.66L1710 195.36L1712 195.46L1712 198.54L1710 198.64L1708 200.34L1706 199.93L1704 198.99L1702 200.59L1700 201.25L1698 199.22L1696 197.94L1694 197.86L1692 198.56L1690 199.92L1688 199.24L1686 197.88L1684 197.8Z" fill="#1d1d21"/>
<svg x="1684" y="136" width="28" height="32" overflow="hidden"><text x="5" y="23.6" font-family="'Liberation Sans',sans-serif" font-size="20" letter-spacing=".68" fill="#1c2a3a" stroke="#1c2a3a" stroke-width=".3">vox - mix (Freeze tail)</text></svg>
<rect x="1726" y="136" width="22" height="70" fill="#56708f"/>
<rect x="1728" y="138" width="20" height="30" fill="#9ac4fb"/>
<rect x="1728" y="170" width="20" height="36" fill="#9ac4fb"/>
<rect x="1742" y="170" width="2" height="36" fill="#6a88b2"/>
<path class="aa" d="M1728 178.2L1730 177.82L1732 176.01L1734 175.1L1736 176.92L1738 178.1L1740 178.2L1742 176.94L1744 174.7L1746 176.4L1748 177.62L1748 180.38L1746 181.6L1744 183.3L1742 181.06L1740 179.8L1738 179.9L1736 181.08L1734 182.9L1732 181.99L1730 180.18L1728 179.8Z" fill="#1d1d21"/>
<path class="aa" d="M1728 196.2L1730 195.87L1732 194.13L1734 193.26L1736 195L1738 196.14L1740 196.2L1742 195.02L1744 192.87L1746 194.5L1748 195.68L1748 198.32L1746 199.5L1744 201.13L1742 198.98L1740 197.8L1738 197.86L1736 199L1734 200.74L1732 199.87L1730 198.13L1728 197.8Z" fill="#1d1d21"/>
<svg x="1728" y="136" width="20" height="32" overflow="hidden"><text x="5" y="23.6" font-family="'Liberation Sans',sans-serif" font-size="20" letter-spacing=".68" fill="#1c2a3a" stroke="#1c2a3a" stroke-width=".3">vox - mix (Freeze tail)</text></svg>
<rect x="1756" y="136" width="4" height="70" fill="#56708f"/>
<rect x="1758" y="138" width="2" height="30" fill="#9ac4fb"/>
<rect x="1758" y="170" width="2" height="36" fill="#9ac4fb"/>
<path class="aa" d="M1758 176L1760 176L1760 182L1758 182Z" fill="#1d1d21"/>
<path class="aa" d="M1758 194.12L1760 194.12L1760 199.88L1758 199.88Z" fill="#1d1d21"/>
<rect x="1760" y="136" width="30" height="70" fill="#56708f"/>
<rect x="1762" y="138" width="28" height="30" fill="#9ac4fb"/>
<rect x="1762" y="170" width="28" height="36" fill="#9ac4fb"/>
<rect x="1780" y="170" width="2" height="36" fill="#6a88b2"/>
<path class="aa" d="M1784 170L1790 170L1790 206Z" fill="#6485b4" opacity=".5"/>
<path class="aa" d="M1762 178.2L1764 177.9L1766 176.21L1768 175.37L1770 177.06L1772 178.1L1774 177.93L1776 175.45L1778 175.91L1780 175.97L1782 174.88L1784 176.2L1786 177.21L1788 176.05L1790 176.38L1790 181.62L1788 181.95L1786 180.79L1784 181.8L1782 183.12L1780 182.03L1778 182.09L1776 182.55L1774 180.07L1772 179.9L1770 180.94L1768 182.63L1766 181.79L1764 180.1L1762 179.8Z" fill="#1d1d21"/>
<path class="aa" d="M1762 196.2L1764 195.95L1766 194.32L1768 193.51L1770 195.13L1772 196.14L1774 195.98L1776 193.59L1778 194.03L1780 194.09L1782 193.04L1784 194.31L1786 195.28L1788 194.17L1790 194.49L1790 199.51L1788 199.83L1786 198.72L1784 199.69L1782 200.96L1780 199.91L1778 199.97L1776 200.41L1774 198.02L1772 197.86L1770 198.87L1768 200.49L1766 199.68L1764 198.05L1762 197.8Z" fill="#1d1d21"/>
<svg x="1762" y="136" width="28" height="32" overflow="hidden"><text x="5" y="23.6" font-family="'Liberation Sans',sans-serif" font-size="20" letter-spacing=".68" fill="#1c2a3a" stroke="#1c2a3a" stroke-width=".3">vox - mix (Freeze tail)</text></svg>
<rect x="1806" y="136" width="22" height="70" fill="#56708f"/>
<rect x="1808" y="138" width="20" height="30" fill="#9ac4fb"/>
<rect x="1808" y="170" width="20" height="36" fill="#9ac4fb"/>
<rect x="1820" y="170" width="2" height="36" fill="#6a88b2"/>
<path class="aa" d="M1808 178.2L1810 178.01L1812 176.49L1814 175.73L1816 177.25L1818 178.1L1820 177.61L1822 175.49L1824 176.98L1826 175.99L1828 175.36L1828 182.64L1826 182.01L1824 181.02L1822 182.51L1820 180.39L1818 179.9L1816 180.75L1814 182.27L1812 181.51L1810 179.99L1808 179.8Z" fill="#1d1d21"/>
<path class="aa" d="M1808 196.2L1810 196.05L1812 194.59L1814 193.86L1816 195.32L1818 196.14L1820 195.66L1822 193.63L1824 195.06L1826 194.11L1828 193.5L1828 200.5L1826 199.89L1824 198.94L1822 200.37L1820 198.34L1818 197.86L1816 198.68L1814 200.14L1812 199.41L1810 197.95L1808 197.8Z" fill="#1d1d21"/>
<svg x="1808" y="136" width="20" height="32" overflow="hidden"><text x="5" y="23.6" font-family="'Liberation Sans',sans-serif" font-size="20" letter-spacing=".68" fill="#1c2a3a" stroke="#1c2a3a" stroke-width=".3">vox - mix (Freeze tail)</text></svg>
<rect x="1834" y="136" width="6" height="70" fill="#56708f"/>
<rect x="1836" y="138" width="4" height="30" fill="#9ac4fb"/>
<rect x="1836" y="170" width="4" height="36" fill="#9ac4fb"/>
<path class="aa" d="M1836 176L1838 176L1840 176L1840 182L1838 182L1836 182Z" fill="#1d1d21"/>
<path class="aa" d="M1836 194.12L1838 194.12L1840 194.12L1840 199.88L1838 199.88L1836 199.88Z" fill="#1d1d21"/>
<rect x="1840" y="136" width="30" height="70" fill="#56708f"/>
<rect x="1842" y="138" width="28" height="30" fill="#9ac4fb"/>
<rect x="1842" y="170" width="28" height="36" fill="#9ac4fb"/>
<rect x="1860" y="170" width="2" height="36" fill="#6a88b2"/>
<path class="aa" d="M1864 170L1870 170L1870 206Z" fill="#6485b4" opacity=".5"/>
<path class="aa" d="M1842 178.2L1844 177.92L1846 176.26L1848 175.44L1850 177.09L1852 178.1L1854 177.92L1856 176.57L1858 174.96L1860 175.18L1862 176.66L1864 176.11L1866 175.62L1868 177.12L1870 177.41L1870 180.59L1868 180.88L1866 182.38L1864 181.89L1862 181.34L1860 182.82L1858 183.04L1856 181.43L1854 180.08L1852 179.9L1850 180.91L1848 182.56L1846 181.74L1844 180.08L1842 179.8Z" fill="#1d1d21"/>
<path class="aa" d="M1842 196.2L1844 195.97L1846 194.37L1848 193.58L1850 195.17L1852 196.14L1854 195.96L1856 194.67L1858 193.12L1860 193.34L1862 194.76L1864 194.23L1866 193.75L1868 195.2L1870 195.47L1870 198.53L1868 198.8L1866 200.25L1864 199.77L1862 199.24L1860 200.66L1858 200.88L1856 199.33L1854 198.04L1852 197.86L1850 198.83L1848 200.42L1846 199.63L1844 198.03L1842 197.8Z" fill="#1d1d21"/>
<svg x="1842" y="136" width="28" height="32" overflow="hidden"><text x="5" y="23.6" font-family="'Liberation Sans',sans-serif" font-size="20" letter-spacing=".68" fill="#1c2a3a" stroke="#1c2a3a" stroke-width=".3">vox - mix (Freeze tail)</text></svg>
<rect x="1878" y="136" width="40" height="70" fill="#56708f"/>
<rect x="1880" y="138" width="38" height="30" fill="#9ac4fb"/>
<rect x="1880" y="170" width="38" height="36" fill="#9ac4fb"/>
<rect x="1898" y="170" width="2" height="36" fill="#6a88b2"/>
<path class="aa" d="M1910 170L1918 170L1918 206Z" fill="#6485b4" opacity=".5"/>
<path class="aa" d="M1880 178.2L1882 178.1L1884 176.71L1886 176.01L1888 177.4L1890 178.1L1892 178.2L1894 176.87L1896 174.11L1898 175.58L1900 177.14L1902 175.36L1904 175.17L1906 177.17L1908 176.71L1910 175.6L1912 176.84L1914 177.45L1916 176.53L1918 176.87L1918 181.13L1916 181.47L1914 180.55L1912 181.16L1910 182.4L1908 181.29L1906 180.83L1904 182.83L1902 182.64L1900 180.86L1898 182.42L1896 183.89L1894 181.13L1892 179.8L1890 179.9L1888 180.6L1886 181.99L1884 181.29L1882 179.9L1880 179.8Z" fill="#1d1d21"/>
<path class="aa" d="M1880 196.2L1882 196.13L1884 194.8L1886 194.13L1888 195.47L1890 196.14L1892 196.2L1894 194.95L1896 192.3L1898 193.72L1900 195.21L1902 193.5L1904 193.32L1906 195.25L1908 194.8L1910 193.73L1912 194.93L1914 195.51L1916 194.63L1918 194.95L1918 199.05L1916 199.37L1914 198.49L1912 199.07L1910 200.27L1908 199.2L1906 198.75L1904 200.68L1902 200.5L1900 198.79L1898 200.28L1896 201.7L1894 199.05L1892 197.8L1890 197.86L1888 198.53L1886 199.87L1884 199.2L1882 197.87L1880 197.8Z" fill="#1d1d21"/>
<svg x="1880" y="136" width="38" height="32" overflow="hidden"><text x="5" y="23.6" font-family="'Liberation Sans',sans-serif" font-size="20" letter-spacing=".68" fill="#1c2a3a" stroke="#1c2a3a" stroke-width=".3">vox - mix (Freeze tail)</text></svg>
<rect x="518" y="210" width="4" height="70" fill="#5d7da5"/>
<rect x="520" y="212" width="2" height="30" fill="#9ac4fb"/>
<rect x="520" y="244" width="2" height="36" fill="#9ac4fb"/>
<rect x="520" y="249" width="2" height="8" fill="#1b1d26"/>
<rect x="520" y="267" width="2" height="8" fill="#1b1d26"/>
<rect x="556" y="210" width="4" height="70" fill="#5d7da5"/>
<rect x="558" y="212" width="2" height="30" fill="#9ac4fb"/>
<rect x="558" y="244" width="2" height="36" fill="#9ac4fb"/>
<rect x="558" y="249" width="2" height="8" fill="#1b1d26"/>
<rect x="558" y="267" width="2" height="8" fill="#1b1d26"/>
<rect x="596" y="210" width="4" height="70" fill="#5d7da5"/>
<rect x="598" y="212" width="2" height="30" fill="#9ac4fb"/>
<rect x="598" y="244" width="2" height="36" fill="#9ac4fb"/>
<rect x="598" y="249" width="2" height="8" fill="#1b1d26"/>
<rect x="598" y="267" width="2" height="8" fill="#1b1d26"/>
<rect x="636" y="210" width="4" height="70" fill="#5d7da5"/>
<rect x="638" y="212" width="2" height="30" fill="#9ac4fb"/>
<rect x="638" y="244" width="2" height="36" fill="#9ac4fb"/>
<rect x="638" y="249" width="2" height="8" fill="#1b1d26"/>
<rect x="638" y="267" width="2" height="8" fill="#1b1d26"/>
<rect x="1480" y="210" width="6" height="70" fill="#5d7da5"/>
<rect x="1482" y="212" width="4" height="30" fill="#9ac4fb"/>
<rect x="1482" y="244" width="4" height="36" fill="#9ac4fb"/>
<rect x="1482" y="249" width="4" height="8" fill="#1b1d26"/>
<rect x="1482" y="267" width="4" height="8" fill="#1b1d26"/>
<rect x="1520" y="210" width="4" height="70" fill="#5d7da5"/>
<rect x="1522" y="212" width="2" height="30" fill="#9ac4fb"/>
<rect x="1522" y="244" width="2" height="36" fill="#9ac4fb"/>
<rect x="1522" y="249" width="2" height="8" fill="#1b1d26"/>
<rect x="1522" y="267" width="2" height="8" fill="#1b1d26"/>
<rect x="1560" y="210" width="4" height="70" fill="#5d7da5"/>
<rect x="1562" y="212" width="2" height="30" fill="#9ac4fb"/>
<rect x="1562" y="244" width="2" height="36" fill="#9ac4fb"/>
<rect x="1562" y="249" width="2" height="8" fill="#1b1d26"/>
<rect x="1562" y="267" width="2" height="8" fill="#1b1d26"/>
<rect x="1598" y="210" width="6" height="70" fill="#5d7da5"/>
<rect x="1600" y="212" width="4" height="30" fill="#9ac4fb"/>
<rect x="1600" y="244" width="4" height="36" fill="#9ac4fb"/>
<rect x="1600" y="249" width="4" height="8" fill="#1b1d26"/>
<rect x="1600" y="267" width="4" height="8" fill="#1b1d26"/>
<rect x="320" y="284" width="4" height="70" fill="#3a4f92"/>
<rect x="322" y="286" width="2" height="30" fill="#6081df"/>
<rect x="322" y="318" width="2" height="36" fill="#6081df"/>
<rect x="322" y="323" width="2" height="8" fill="#1b1d26"/>
<rect x="322" y="341" width="2" height="8" fill="#1b1d26"/>
<rect x="406" y="284" width="4" height="70" fill="#3a4f92"/>
<rect x="408" y="286" width="2" height="30" fill="#6081df"/>
<rect x="408" y="318" width="2" height="36" fill="#6081df"/>
<rect x="408" y="323" width="2" height="8" fill="#1b1d26"/>
<rect x="408" y="341" width="2" height="8" fill="#1b1d26"/>
<rect x="438" y="284" width="4" height="70" fill="#3a4f92"/>
<rect x="440" y="286" width="2" height="30" fill="#6081df"/>
<rect x="440" y="318" width="2" height="36" fill="#6081df"/>
<rect x="440" y="323" width="2" height="8" fill="#1b1d26"/>
<rect x="440" y="341" width="2" height="8" fill="#1b1d26"/>
<rect x="478" y="284" width="4" height="70" fill="#3a4f92"/>
<rect x="480" y="286" width="2" height="30" fill="#6081df"/>
<rect x="480" y="318" width="2" height="36" fill="#6081df"/>
<rect x="480" y="323" width="2" height="8" fill="#1b1d26"/>
<rect x="480" y="341" width="2" height="8" fill="#1b1d26"/>
<rect x="498" y="284" width="4" height="70" fill="#3a4f92"/>
<rect x="500" y="286" width="2" height="30" fill="#6081df"/>
<rect x="500" y="318" width="2" height="36" fill="#6081df"/>
<rect x="500" y="323" width="2" height="8" fill="#1b1d26"/>
<rect x="500" y="341" width="2" height="8" fill="#1b1d26"/>
<rect x="546" y="284" width="4" height="70" fill="#3a4f92"/>
<rect x="548" y="286" width="2" height="30" fill="#6081df"/>
<rect x="548" y="318" width="2" height="36" fill="#6081df"/>
<rect x="548" y="323" width="2" height="8" fill="#1b1d26"/>
<rect x="548" y="341" width="2" height="8" fill="#1b1d26"/>
<rect x="556" y="284" width="4" height="70" fill="#3a4f92"/>
<rect x="558" y="286" width="2" height="30" fill="#6081df"/>
<rect x="558" y="318" width="2" height="36" fill="#6081df"/>
<rect x="558" y="323" width="2" height="8" fill="#1b1d26"/>
<rect x="558" y="341" width="2" height="8" fill="#1b1d26"/>
<rect x="576" y="284" width="4" height="70" fill="#3a4f92"/>
<rect x="578" y="286" width="2" height="30" fill="#6081df"/>
<rect x="578" y="318" width="2" height="36" fill="#6081df"/>
<rect x="578" y="323" width="2" height="8" fill="#1b1d26"/>
<rect x="578" y="341" width="2" height="8" fill="#1b1d26"/>
<rect x="1422" y="284" width="4" height="70" fill="#3a4f92"/>
<rect x="1424" y="286" width="2" height="30" fill="#6081df"/>
<rect x="1424" y="318" width="2" height="36" fill="#6081df"/>
<rect x="1424" y="323" width="2" height="8" fill="#1b1d26"/>
<rect x="1424" y="341" width="2" height="8" fill="#1b1d26"/>
<rect x="1442" y="284" width="4" height="70" fill="#3a4f92"/>
<rect x="1444" y="286" width="2" height="30" fill="#6081df"/>
<rect x="1444" y="318" width="2" height="36" fill="#6081df"/>
<rect x="1444" y="323" width="2" height="8" fill="#1b1d26"/>
<rect x="1444" y="341" width="2" height="8" fill="#1b1d26"/>
<rect x="1500" y="284" width="6" height="70" fill="#3a4f92"/>
<rect x="1502" y="286" width="4" height="30" fill="#6081df"/>
<rect x="1502" y="318" width="4" height="36" fill="#6081df"/>
<rect x="1502" y="323" width="4" height="8" fill="#1b1d26"/>
<rect x="1502" y="341" width="4" height="8" fill="#1b1d26"/>
<rect x="1520" y="284" width="4" height="70" fill="#3a4f92"/>
<rect x="1522" y="286" width="2" height="30" fill="#6081df"/>
<rect x="1522" y="318" width="2" height="36" fill="#6081df"/>
<rect x="1522" y="323" width="2" height="8" fill="#1b1d26"/>
<rect x="1522" y="341" width="2" height="8" fill="#1b1d26"/>
<rect x="1580" y="284" width="4" height="70" fill="#3a4f92"/>
<rect x="1582" y="286" width="2" height="30" fill="#6081df"/>
<rect x="1582" y="318" width="2" height="36" fill="#6081df"/>
<rect x="1582" y="323" width="2" height="8" fill="#1b1d26"/>
<rect x="1582" y="341" width="2" height="8" fill="#1b1d26"/>
<rect x="1598" y="284" width="4" height="70" fill="#3a4f92"/>
<rect x="1600" y="286" width="2" height="30" fill="#6081df"/>
<rect x="1600" y="318" width="2" height="36" fill="#6081df"/>
<rect x="1600" y="323" width="2" height="8" fill="#1b1d26"/>
<rect x="1600" y="341" width="2" height="8" fill="#1b1d26"/>
<rect x="360" y="284" width="2" height="70" fill="#364a86"/>
<rect x="400" y="284" width="2" height="70" fill="#364a86"/>
<rect x="538" y="284" width="2" height="70" fill="#364a86"/>
<rect x="1270" y="284" width="2" height="70" fill="#364a86"/>
<rect x="1304" y="284" width="2" height="70" fill="#364a86"/>
<rect x="1344" y="284" width="2" height="70" fill="#364a86"/>
<rect x="1360" y="284" width="2" height="70" fill="#364a86"/>
<rect x="1382" y="284" width="2" height="70" fill="#364a86"/>
<rect x="1540" y="284" width="2" height="70" fill="#364a86"/>
<rect x="320" y="358" width="2" height="70" fill="#33457c"/>
<rect x="410" y="358" width="4" height="70" fill="#3a4f92"/>
<rect x="412" y="360" width="2" height="30" fill="#6081df"/>
<rect x="412" y="392" width="2" height="36" fill="#6081df"/>
<rect x="412" y="397" width="2" height="8" fill="#1b1d26"/>
<rect x="412" y="415" width="2" height="8" fill="#1b1d26"/>
<rect x="414" y="358" width="4" height="70" fill="#3d52a0"/>
<rect x="1282" y="358" width="8" height="70" fill="#3a4f92"/>
<rect x="1284" y="360" width="6" height="30" fill="#6081df"/>
<rect x="1284" y="392" width="6" height="36" fill="#6081df"/>
<path class="aa" d="M1284 394h2q4 3 4 8t-4 8h-2ZM1284 411h2q4 3 4 8t-4 8h-2Z" fill="#1b1d26"/>
<rect x="1442" y="358" width="4" height="70" fill="#2f427c"/>
<rect x="936" y="432" width="314" height="70" fill="#596294"/>
<rect x="938" y="434" width="312" height="30" fill="#99a8f8"/>
<rect x="938" y="466" width="312" height="36" fill="#99a8f8"/>
<rect x="954" y="466" width="2" height="36" fill="#6872a8"/>
<rect x="994" y="466" width="2" height="36" fill="#6872a8"/>
<rect x="1034" y="466" width="2" height="36" fill="#6872a8"/>
<rect x="1072" y="466" width="2" height="36" fill="#6872a8"/>
<rect x="1112" y="466" width="2" height="36" fill="#6872a8"/>
<rect x="1152" y="466" width="2" height="36" fill="#6872a8"/>
<rect x="1190" y="466" width="2" height="36" fill="#6872a8"/>
<rect x="1230" y="466" width="2" height="36" fill="#6872a8"/>
<path class="aa" d="M938 474.2L940 474.2L942 474.2L944 474.2L946 474.2L948 474.2L950 474.2L952 474.2L954 474.2L956 474.2L958 474.2L960 474.2L962 474.2L964 474.2L966 474.2L968 474.2L970 474.2L972 474.2L974 474.2L976 474.03L978 474.12L980 474.16L982 474.2L984 474.2L986 473.94L988 473.8L990 473.63L992 473.3L994 473.57L996 473.67L998 473.95L1000 474.13L1002 473.43L1004 472.77L1006 472.74L1008 472.71L1010 473.47L1012 473.69L1014 473.4L1016 473.39L1018 472.94L1020 472.23L1022 472.32L1024 472.15L1026 473L1028 473.76L1030 473.18L1032 472.45L1034 471.9L1036 471.36L1038 472.34L1040 472.55L1042 472.61L1044 473.21L1046 472.78L1048 471.87L1050 471.45L1052 470.45L1054 471.58L1056 472.97L1058 472.81L1060 472.55L1062 471.74L1064 470.66L1066 471.4L1068 471.03L1070 471.12L1072 472.6L1074 472.69L1076 472.11L1078 470.56L1080 469.16L1082 469.95L1084 470.91L1086 469.72L1088 469.78L1090 469.5L1092 469.32L1094 470.75L1096 469.68L1098 468.61L1100 469.7L1102 469.44L1104 469.78L1106 469.77L1108 468.05L1110 469.15L1112 470.08L1114 468.86L1116 469.08L1118 468.42L1120 468.4L1122 470.14L1124 468.76L1126 467.77L1128 468.84L1130 468.43L1132 469.18L1134 468.98L1136 466.99L1138 468.41L1140 469.2L1142 468.07L1144 468.43L1146 467.34L1148 467.6L1150 469.6L1152 468.01L1154 467.28L1156 468.23L1158 467.78L1160 468.99L1162 468.6L1164 466.62L1166 468.25L1168 468.84L1170 468.05L1172 468.51L1174 467.15L1176 467.66L1178 469.59L1180 467.94L1182 467.49L1184 468.11L1186 467.66L1188 469.16L1190 468.53L1192 466.66L1194 468.31L1196 468.63L1198 468.18L1200 468.62L1202 466.98L1204 467.74L1206 469.53L1208 467.9L1210 467.71L1212 467.96L1214 467.56L1216 469.31L1218 468.44L1220 466.74L1222 468.34L1224 468.41L1226 468.34L1228 468.69L1230 466.84L1232 467.84L1234 469.43L1236 467.88L1238 467.92L1240 467.8L1242 467.51L1244 469.44L1246 468.33L1248 466.85L1250 468.34L1250 481.66L1248 483.15L1246 481.67L1244 480.56L1242 482.49L1240 482.2L1238 482.08L1236 482.12L1234 480.57L1232 482.16L1230 483.16L1228 481.31L1226 481.66L1224 481.59L1222 481.66L1220 483.26L1218 481.56L1216 480.69L1214 482.44L1212 482.04L1210 482.29L1208 482.1L1206 480.47L1204 482.26L1202 483.02L1200 481.38L1198 481.82L1196 481.37L1194 481.69L1192 483.34L1190 481.47L1188 480.84L1186 482.34L1184 481.89L1182 482.51L1180 482.06L1178 480.41L1176 482.34L1174 482.85L1172 481.49L1170 481.95L1168 481.16L1166 481.75L1164 483.38L1162 481.4L1160 481.01L1158 482.22L1156 481.77L1154 482.72L1152 481.99L1150 480.4L1148 482.4L1146 482.66L1144 481.57L1142 481.93L1140 480.8L1138 481.59L1136 483.01L1134 481.02L1132 480.82L1130 481.57L1128 481.16L1126 482.23L1124 481.24L1122 479.86L1120 481.6L1118 481.58L1116 480.92L1114 481.14L1112 479.92L1110 480.85L1108 481.95L1106 480.23L1104 480.22L1102 480.56L1100 480.3L1098 481.39L1096 480.32L1094 479.25L1092 480.68L1090 480.5L1088 480.22L1086 480.28L1084 479.09L1082 480.05L1080 480.84L1078 479.44L1076 477.89L1074 477.31L1072 477.4L1070 478.88L1068 478.97L1066 478.6L1064 479.34L1062 478.26L1060 477.45L1058 477.19L1056 477.03L1054 478.42L1052 479.55L1050 478.55L1048 478.13L1046 477.22L1044 476.79L1042 477.39L1040 477.45L1038 477.66L1036 478.64L1034 478.1L1032 477.55L1030 476.82L1028 476.24L1026 477L1024 477.85L1022 477.68L1020 477.77L1018 477.06L1016 476.61L1014 476.6L1012 476.31L1010 476.53L1008 477.29L1006 477.26L1004 477.23L1002 476.57L1000 475.87L998 476.05L996 476.33L994 476.43L992 476.7L990 476.37L988 476.2L986 476.06L984 475.8L982 475.8L980 475.84L978 475.88L976 475.97L974 475.8L972 475.8L970 475.8L968 475.8L966 475.8L964 475.8L962 475.8L960 475.8L958 475.8L956 475.8L954 475.8L952 475.8L950 475.8L948 475.8L946 475.8L944 475.8L942 475.8L940 475.8L938 475.8Z" fill="#1d1d21"/>
<path class="aa" d="M938 492.2L940 492.2L942 492.2L944 492.2L946 492.2L948 492.2L950 492.2L952 492.2L954 492.2L956 492.2L958 492.2L960 492.2L962 492.2L964 492.2L966 492.2L968 492.2L970 492.2L972 492.15L974 492.09L976 492.16L978 492.2L980 492.2L982 492.2L984 491.84L986 491.83L988 491.45L990 491.46L992 491.68L994 491.8L996 492.14L998 491.93L1000 491.04L1002 490.83L1004 490.72L1006 491.1L1008 491.75L1010 491.58L1012 491.42L1014 491.34L1016 490.55L1018 490.35L1020 490.3L1022 490.5L1024 491.58L1026 491.64L1028 490.81L1030 490.32L1032 489.59L1034 489.85L1036 490.7L1038 490.53L1040 491.01L1042 491.22L1044 490.32L1046 489.82L1048 489.01L1050 488.81L1052 490.59L1054 491.04L1056 490.74L1058 490.38L1060 489.15L1062 489.03L1064 489.56L1066 488.88L1068 490.02L1070 490.91L1072 490.45L1074 489.95L1076 488L1078 487.36L1080 488.89L1082 488.49L1084 487.72L1086 488L1088 487.3L1090 488.23L1092 488.74L1094 486.96L1096 487.33L1098 487.9L1100 487.56L1102 488.25L1104 487L1106 486.41L1108 488.17L1110 487.6L1112 487.02L1114 487.16L1116 486.23L1118 487.57L1120 488.01L1122 486.04L1124 486.58L1126 486.92L1128 486.77L1130 487.69L1132 486.02L1134 485.53L1136 487.44L1138 486.72L1140 486.41L1142 486.32L1144 485.2L1146 487.03L1148 487.36L1150 485.41L1152 486.12L1154 486.21L1156 486.39L1158 487.49L1160 485.56L1162 485.34L1164 487.18L1166 486.46L1168 486.54L1170 486.21L1172 485.11L1174 487.13L1176 487.24L1178 485.51L1180 486.22L1182 485.98L1184 486.47L1186 487.56L1188 485.47L1190 485.47L1192 487.06L1194 486.38L1196 486.77L1198 486.12L1200 485.06L1202 487.2L1204 487.1L1206 485.65L1208 486.29L1210 485.76L1212 486.56L1214 487.59L1216 485.41L1218 485.61L1220 486.9L1222 486.32L1224 486.98L1226 486.02L1228 485.05L1230 487.25L1232 486.95L1234 485.82L1236 486.34L1238 485.56L1240 486.68L1242 487.58L1244 485.38L1246 485.76L1248 486.72L1250 486.29L1250 499.71L1248 499.28L1246 500.24L1244 500.62L1242 498.42L1240 499.32L1238 500.44L1236 499.66L1234 500.18L1232 499.05L1230 498.75L1228 500.95L1226 499.98L1224 499.02L1222 499.68L1220 499.1L1218 500.39L1216 500.59L1214 498.41L1212 499.44L1210 500.24L1208 499.71L1206 500.35L1204 498.9L1202 498.8L1200 500.94L1198 499.88L1196 499.23L1194 499.62L1192 498.94L1190 500.53L1188 500.53L1186 498.44L1184 499.53L1182 500.02L1180 499.78L1178 500.49L1176 498.76L1174 498.87L1172 500.89L1170 499.79L1168 499.46L1166 499.54L1164 498.82L1162 500.66L1160 500.44L1158 498.51L1156 499.61L1154 499.79L1152 499.88L1150 500.59L1148 498.64L1146 498.97L1144 500.8L1142 499.68L1140 499.59L1138 499.28L1136 498.56L1134 500.47L1132 499.98L1130 498.31L1128 499.23L1126 499.08L1124 499.42L1122 499.96L1120 497.99L1118 498.43L1116 499.77L1114 498.84L1112 498.98L1110 498.4L1108 497.83L1106 499.59L1104 499L1102 497.75L1100 498.44L1098 498.1L1096 498.67L1094 499.04L1092 497.26L1090 497.77L1088 498.7L1086 498L1084 498.28L1082 497.51L1080 497.11L1078 498.64L1076 498L1074 496.05L1072 495.55L1070 495.09L1068 495.98L1066 497.12L1064 496.44L1062 496.97L1060 496.85L1058 495.62L1056 495.26L1054 494.96L1052 495.41L1050 497.19L1048 496.99L1046 496.18L1044 495.68L1042 494.78L1040 494.99L1038 495.47L1036 495.3L1034 496.15L1032 496.41L1030 495.68L1028 495.19L1026 494.36L1024 494.42L1022 495.5L1020 495.7L1018 495.65L1016 495.45L1014 494.66L1012 494.58L1010 494.42L1008 494.25L1006 494.9L1004 495.28L1002 495.17L1000 494.96L998 494.07L996 493.86L994 494.2L992 494.32L990 494.54L988 494.55L986 494.17L984 494.16L982 493.8L980 493.8L978 493.8L976 493.84L974 493.91L972 493.85L970 493.8L968 493.8L966 493.8L964 493.8L962 493.8L960 493.8L958 493.8L956 493.8L954 493.8L952 493.8L950 493.8L948 493.8L946 493.8L944 493.8L942 493.8L940 493.8L938 493.8Z" fill="#1d1d21"/>
<rect x="320" y="506" width="6" height="34" fill="#6c6c6c"/>
<rect x="414" y="506" width="6" height="34" fill="#3c8c9c"/>
<rect x="416" y="508" width="4" height="30" fill="#6ee6fb"/>
<rect x="1284" y="506" width="6" height="34" fill="#3c8c9c"/>
<rect x="1286" y="508" width="4" height="30" fill="#6ee6fb"/>
<rect x="400" y="544" width="2" height="34" fill="#2f7b8b"/>
<rect x="1284" y="544" width="2" height="34" fill="#2f7b8b"/>
<rect x="320" y="582" width="4" height="34" fill="#6c6c6c"/>
<rect x="168" y="620" width="20" height="34" fill="#a63592"/>
<rect x="170" y="622" width="18" height="30" fill="#ec4fce"/>
<rect x="316" y="620" width="12" height="34" fill="#a63592"/>
<rect x="318" y="622" width="10" height="30" fill="#ec4fce"/>
<rect x="474" y="620" width="10" height="34" fill="#a63592"/>
<rect x="476" y="622" width="8" height="30" fill="#ec4fce"/>
<rect x="630" y="620" width="12" height="34" fill="#a63592"/>
<rect x="632" y="622" width="10" height="30" fill="#ec4fce"/>
<rect x="1280" y="620" width="12" height="34" fill="#a63592"/>
<rect x="1282" y="622" width="10" height="30" fill="#ec4fce"/>
<rect x="318" y="658" width="4" height="34" fill="#a63592"/>
<rect x="320" y="660" width="2" height="30" fill="#ec4fce"/>
<rect x="416" y="658" width="4" height="34" fill="#a63592"/>
<rect x="418" y="660" width="2" height="30" fill="#ec4fce"/>
<rect x="1282" y="658" width="4" height="34" fill="#a63592"/>
<rect x="1284" y="660" width="2" height="30" fill="#ec4fce"/>
<rect x="652" y="658" width="2" height="34" fill="#8a2d7a"/>
<rect x="1288" y="658" width="2" height="34" fill="#8a2d7a"/>
<rect x="1112" y="658" width="138" height="34" fill="#a63592"/>
<rect x="1114" y="660" width="8" height="30" fill="#ec4fce"/>
<path class="aa" d="M1114 660L1120 660L1114 690Z" fill="#c9419f" opacity=".6"/>
<rect x="1124" y="660" width="8" height="30" fill="#ec4fce"/>
<path class="aa" d="M1124 660L1130 660L1124 690Z" fill="#c9419f" opacity=".6"/>
<rect x="1134" y="660" width="8" height="30" fill="#ec4fce"/>
<path class="aa" d="M1134 660L1140 660L1134 690Z" fill="#c9419f" opacity=".6"/>
<rect x="1144" y="660" width="8" height="30" fill="#ec4fce"/>
<path class="aa" d="M1144 660L1150 660L1144 690Z" fill="#c9419f" opacity=".6"/>
<rect x="1154" y="660" width="8" height="30" fill="#ec4fce"/>
<path class="aa" d="M1154 660L1160 660L1154 690Z" fill="#c9419f" opacity=".6"/>
<rect x="1164" y="660" width="6" height="30" fill="#ec4fce"/>
<path class="aa" d="M1164 660L1170 660L1164 690Z" fill="#c9419f" opacity=".6"/>
<rect x="1172" y="660" width="8" height="30" fill="#ec4fce"/>
<path class="aa" d="M1172 660L1178 660L1172 690Z" fill="#c9419f" opacity=".6"/>
<rect x="1182" y="660" width="8" height="30" fill="#ec4fce"/>
<path class="aa" d="M1182 660L1188 660L1182 690Z" fill="#c9419f" opacity=".6"/>
<rect x="1192" y="660" width="4" height="30" fill="#ec4fce"/>
<path class="aa" d="M1192 660L1196 660L1192 690Z" fill="#c9419f" opacity=".6"/>
<rect x="1198" y="660" width="2" height="30" fill="#ec4fce"/>
<path class="aa" d="M1198 660L1200 660L1198 690Z" fill="#c9419f" opacity=".6"/>
<rect x="1202" y="660" width="4" height="30" fill="#ec4fce"/>
<path class="aa" d="M1202 660L1206 660L1202 690Z" fill="#c9419f" opacity=".6"/>
<rect x="1208" y="660" width="2" height="30" fill="#ec4fce"/>
<path class="aa" d="M1208 660L1210 660L1208 690Z" fill="#c9419f" opacity=".6"/>
<rect x="1212" y="660" width="4" height="30" fill="#ec4fce"/>
<path class="aa" d="M1212 660L1216 660L1212 690Z" fill="#c9419f" opacity=".6"/>
<rect x="1218" y="660" width="2" height="30" fill="#ec4fce"/>
<path class="aa" d="M1218 660L1220 660L1218 690Z" fill="#c9419f" opacity=".6"/>
<rect x="1222" y="660" width="4" height="30" fill="#ec4fce"/>
<path class="aa" d="M1222 660L1226 660L1222 690Z" fill="#c9419f" opacity=".6"/>
<rect x="1228" y="660" width="2" height="30" fill="#ec4fce"/>
<path class="aa" d="M1228 660L1230 660L1228 690Z" fill="#c9419f" opacity=".6"/>
<rect x="1232" y="660" width="2" height="30" fill="#ec4fce"/>
<path class="aa" d="M1232 660L1234 660L1232 690Z" fill="#c9419f" opacity=".6"/>
<rect x="1236" y="660" width="4" height="30" fill="#ec4fce"/>
<path class="aa" d="M1236 660L1240 660L1236 690Z" fill="#c9419f" opacity=".6"/>
<rect x="1242" y="660" width="2" height="30" fill="#ec4fce"/>
<path class="aa" d="M1242 660L1244 660L1242 690Z" fill="#c9419f" opacity=".6"/>
<rect x="1246" y="660" width="4" height="30" fill="#ec4fce"/>
<path class="aa" d="M1246 660L1250 660L1246 690Z" fill="#c9419f" opacity=".6"/>
<path d="M12 703h304" stroke="#ee50d0" stroke-width="6" fill="none"/>
<path d="M12 752h304" stroke="#ee50d0" stroke-width="8" fill="none"/>
<path d="M168 743h148" stroke="#ee50d0" stroke-width="6" fill="none"/>
<path d="M168 761h148" stroke="#ee50d0" stroke-width="6" fill="none"/>
<path d="M174 769h4M192 769h6M212 769h6M232 769h6M252 769h4M272 769h4M292 769h4M310 769h6" stroke="#ee50d0" stroke-width="6" fill="none"/>
<path d="M12 785h16M30 785h138M170 785h8M180 785h8M190 785h8M200 785h56M258 785h8M268 785h8M278 785h8M288 785h8M298 785h8M308 785h8" stroke="#ee50d0" stroke-width="6" fill="none"/>
<path d="M326 703h78M410 703h4M420 703h220" stroke="#ee50d0" stroke-width="6" fill="none"/>
<path d="M326 711h314" stroke="#ee50d0" stroke-width="6" fill="none"/>
<path d="M326 719h78M406 719h234" stroke="#ee50d0" stroke-width="6" fill="none"/>
<path d="M326 735h74M410 735h4M420 735h220" stroke="#ee50d0" stroke-width="6" fill="none"/>
<path d="M326 743h74M410 743h4M420 743h220" stroke="#ee50d0" stroke-width="6" fill="none"/>
<path d="M326 752h74M410 752h4M420 752h220" stroke="#ee50d0" stroke-width="8" fill="none"/>
<path d="M326 761h74M410 761h4M420 761h220" stroke="#ee50d0" stroke-width="6" fill="none"/>
<path d="M330 769h6M340 769h6M350 769h6M360 769h6M370 769h4M380 769h4M390 769h4M410 769h4M420 769h4M428 769h6M438 769h6M448 769h6M458 769h6M468 769h6M478 769h4M488 769h4M498 769h4M508 769h4M518 769h4M528 769h4M538 769h4M546 769h6M556 769h6M566 769h6M576 769h6M586 769h6M596 769h4M606 769h4M616 769h4M626 769h4M636 769h4" stroke="#ee50d0" stroke-width="6" fill="none"/>
<path d="M410 777h4M420 777h220" stroke="#ee50d0" stroke-width="6" fill="none"/>
<path d="M326 785h48M376 785h8M386 785h8M396 785h6M410 785h4M420 785h4M426 785h8M436 785h46M484 785h8M494 785h4M504 785h8M514 785h8M524 785h8M534 785h8M544 785h8M554 785h46M602 785h8M612 785h8M622 785h8M632 785h8" stroke="#ee50d0" stroke-width="6" fill="none"/>
<path d="M326 793h76M410 793h4M420 793h220" stroke="#ee50d0" stroke-width="6" fill="none"/>
<path d="M654 703h296" stroke="#ee50d0" stroke-width="6" fill="none"/>
<path d="M654 711h262" stroke="#ee50d0" stroke-width="6" fill="none"/>
<path d="M654 719h262" stroke="#ee50d0" stroke-width="6" fill="none"/>
<path d="M654 735h298" stroke="#ee50d0" stroke-width="6" fill="none"/>
<path d="M654 743h300" stroke="#ee50d0" stroke-width="6" fill="none"/>
<path d="M654 752h300" stroke="#ee50d0" stroke-width="8" fill="none"/>
<path d="M654 761h300" stroke="#ee50d0" stroke-width="6" fill="none"/>
<path d="M654 777h300" stroke="#ee50d0" stroke-width="6" fill="none"/>
<path d="M654 769h6M664 769h6M674 769h6M684 769h6M694 769h6M704 769h6M716 769h4M724 769h4M734 769h4M744 769h4M754 769h4M764 769h4M772 769h6M782 769h6M792 769h6M802 769h6M812 769h6M822 769h6M834 769h4M842 769h4M852 769h4M862 769h4M872 769h4M882 769h4M890 769h6M900 769h6M910 769h6M920 769h6M930 769h6M940 769h6M952 769h2" stroke="#ee50d0" stroke-width="6" fill="none"/>
<path d="M654 785h6M662 785h56M720 785h8M730 785h8M740 785h8M750 785h8M760 785h8M770 785h8M780 785h56M838 785h8M848 785h8M858 785h8M868 785h8M878 785h8M888 785h8M898 785h46M946 785h8" stroke="#ee50d0" stroke-width="6" fill="none"/>
<path d="M1038 727h6M1048 727h6M1060 727h4M1070 727h4M1080 727h4M1090 727h4M1100 727h4M1108 727h4M1118 727h4M1126 727h6M1136 727h6M1146 727h6M1156 727h6M1166 727h6M1178 727h4M1188 727h4M1198 727h4M1208 727h4M1218 727h4M1226 727h4M1234 727h6M1244 727h6" stroke="#ee50d0" stroke-width="6" fill="none"/>
<path d="M1112 743h138" stroke="#ee50d0" stroke-width="6" fill="none"/>
<path d="M1112 761h138" stroke="#ee50d0" stroke-width="6" fill="none"/>
<path d="M1286 703h934" stroke="#ee50d0" stroke-width="6" fill="none"/>
<path d="M1290 711h314M1608 711h612" stroke="#ee50d0" stroke-width="6" fill="none"/>
<path d="M1290 719h314M1608 719h270" stroke="#ee50d0" stroke-width="6" fill="none"/>
<path d="M1290 735h152M1446 735h158M1608 735h612" stroke="#ee50d0" stroke-width="6" fill="none"/>
<path d="M1290 743h314M1608 743h612" stroke="#ee50d0" stroke-width="6" fill="none"/>
<path d="M1290 752h314M1608 752h612" stroke="#ee50d0" stroke-width="8" fill="none"/>
<path d="M1290 761h152M1446 761h158M1608 761h612" stroke="#ee50d0" stroke-width="6" fill="none"/>
<path d="M1296 769h4M1306 769h4M1316 769h4M1326 769h4M1336 769h4M1346 769h4M1354 769h6M1362 769h6M1372 769h6M1382 769h6M1392 769h6M1404 769h4M1414 769h4M1424 769h4M1434 769h4M1444 769h4M1454 769h4M1464 769h4M1472 769h6M1480 769h6M1490 769h6M1500 769h6M1510 769h6M1522 769h4M1532 769h4M1542 769h4M1552 769h4M1562 769h4M1572 769h4M1582 769h4M1590 769h6M1600 769h6M1608 769h6M1618 769h6M1628 769h6M1640 769h4M1650 769h4M1660 769h4M1670 769h4M1680 769h4M1690 769h4M1700 769h4M1708 769h6M1718 769h6M1726 769h6M1736 769h6M1746 769h6M1758 769h4M1768 769h4M1778 769h4M1788 769h4M1798 769h4M1808 769h4M1818 769h4M1826 769h6M1836 769h6M1846 769h6M1854 769h6M1864 769h6M1876 769h4M1886 769h4M1896 769h4M1906 769h4M1916 769h4M1926 769h4M1942 769h6M1962 769h6M1982 769h4M2002 769h4M2022 769h4M2042 769h4M2060 769h6M2080 769h6M2100 769h4M2120 769h4M2140 769h4M2158 769h6M2178 769h6M2198 769h6M2218 769h2" stroke="#ee50d0" stroke-width="6" fill="none"/>
<path d="M1290 777h314M1608 777h612" stroke="#ee50d0" stroke-width="6" fill="none"/>
<path d="M1290 785h8M1300 785h8M1310 785h8M1320 785h8M1330 785h8M1340 785h8M1350 785h8M1360 785h46M1408 785h8M1418 785h8M1428 785h8M1438 785h166M1608 785h12M1622 785h156M1780 785h312M2094 785h126" stroke="#ee50d0" stroke-width="6" fill="none"/>
<path d="M1290 793h314" stroke="#ee50d0" stroke-width="6" fill="none"/>
<rect x="12" y="696" width="2" height="102" fill="#000" opacity=".25"/>
<rect x="50" y="696" width="2" height="102" fill="#000" opacity=".25"/>
<rect x="90" y="696" width="2" height="102" fill="#000" opacity=".25"/>
<rect x="130" y="696" width="2" height="102" fill="#000" opacity=".25"/>
<rect x="168" y="696" width="2" height="102" fill="#000" opacity=".25"/>
<rect x="208" y="696" width="2" height="102" fill="#000" opacity=".25"/>
<rect x="248" y="696" width="2" height="102" fill="#000" opacity=".25"/>
<rect x="286" y="696" width="2" height="102" fill="#000" opacity=".25"/>
<rect x="326" y="696" width="2" height="102" fill="#000" opacity=".25"/>
<rect x="366" y="696" width="2" height="102" fill="#000" opacity=".25"/>
<rect x="404" y="696" width="2" height="102" fill="#000" opacity=".25"/>
<rect x="444" y="696" width="2" height="102" fill="#000" opacity=".25"/>
<rect x="482" y="696" width="2" height="102" fill="#000" opacity=".25"/>
<rect x="522" y="696" width="2" height="102" fill="#000" opacity=".25"/>
<rect x="562" y="696" width="2" height="102" fill="#000" opacity=".25"/>
<rect x="600" y="696" width="2" height="102" fill="#000" opacity=".25"/>
<rect x="640" y="696" width="2" height="102" fill="#000" opacity=".25"/>
<rect x="680" y="696" width="2" height="102" fill="#000" opacity=".25"/>
<rect x="718" y="696" width="2" height="102" fill="#000" opacity=".25"/>
<rect x="758" y="696" width="2" height="102" fill="#000" opacity=".25"/>
<rect x="798" y="696" width="2" height="102" fill="#000" opacity=".25"/>
<rect x="836" y="696" width="2" height="102" fill="#000" opacity=".25"/>
<rect x="876" y="696" width="2" height="102" fill="#000" opacity=".25"/>
<rect x="916" y="696" width="2" height="102" fill="#000" opacity=".25"/>
<rect x="954" y="696" width="2" height="102" fill="#000" opacity=".25"/>
<rect x="994" y="696" width="2" height="102" fill="#000" opacity=".25"/>
<rect x="1034" y="696" width="2" height="102" fill="#000" opacity=".25"/>
<rect x="1072" y="696" width="2" height="102" fill="#000" opacity=".25"/>
<rect x="1112" y="696" width="2" height="102" fill="#000" opacity=".25"/>
<rect x="1152" y="696" width="2" height="102" fill="#000" opacity=".25"/>
<rect x="1190" y="696" width="2" height="102" fill="#000" opacity=".25"/>
<rect x="1230" y="696" width="2" height="102" fill="#000" opacity=".25"/>
<rect x="1270" y="696" width="2" height="102" fill="#000" opacity=".25"/>
<rect x="1308" y="696" width="2" height="102" fill="#000" opacity=".25"/>
<rect x="1348" y="696" width="2" height="102" fill="#000" opacity=".25"/>
<rect x="1388" y="696" width="2" height="102" fill="#000" opacity=".25"/>
<rect x="1426" y="696" width="2" height="102" fill="#000" opacity=".25"/>
<rect x="1466" y="696" width="2" height="102" fill="#000" opacity=".25"/>
<rect x="1506" y="696" width="2" height="102" fill="#000" opacity=".25"/>
<rect x="1544" y="696" width="2" height="102" fill="#000" opacity=".25"/>
<rect x="1584" y="696" width="2" height="102" fill="#000" opacity=".25"/>
<rect x="1624" y="696" width="2" height="102" fill="#000" opacity=".25"/>
<rect x="1662" y="696" width="2" height="102" fill="#000" opacity=".25"/>
<rect x="1702" y="696" width="2" height="102" fill="#000" opacity=".25"/>
<rect x="1742" y="696" width="2" height="102" fill="#000" opacity=".25"/>
<rect x="1780" y="696" width="2" height="102" fill="#000" opacity=".25"/>
<rect x="1820" y="696" width="2" height="102" fill="#000" opacity=".25"/>
<rect x="1860" y="696" width="2" height="102" fill="#000" opacity=".25"/>
<rect x="1898" y="696" width="2" height="102" fill="#000" opacity=".25"/>
<rect x="1938" y="696" width="2" height="102" fill="#000" opacity=".25"/>
<rect x="1978" y="696" width="2" height="102" fill="#000" opacity=".25"/>
<rect x="2016" y="696" width="2" height="102" fill="#000" opacity=".25"/>
<rect x="2056" y="696" width="2" height="102" fill="#000" opacity=".25"/>
<rect x="2096" y="696" width="2" height="102" fill="#000" opacity=".25"/>
<rect x="2134" y="696" width="2" height="102" fill="#000" opacity=".25"/>
<rect x="2174" y="696" width="2" height="102" fill="#000" opacity=".25"/>
<rect x="2214" y="696" width="2" height="102" fill="#000" opacity=".25"/>
<rect x="10" y="696" width="316" height="102" fill="#000" opacity=".1"/>
<rect x="640" y="696" width="314" height="102" fill="#000" opacity=".1"/>
<rect x="1270" y="696" width="314" height="102" fill="#000" opacity=".1"/>
<rect x="1898" y="696" width="316" height="102" fill="#000" opacity=".1"/>
<rect x="326" y="802" width="78" height="70" fill="#1e4469"/>
<rect x="328" y="804" width="76" height="30" fill="#377dc0"/>
<rect x="328" y="836" width="76" height="36" fill="#377dc0"/>
<rect x="366" y="836" width="2" height="36" fill="#255582"/>
<path d="M365 846h2M345 862h2M353 862h2M357 862h2M360 862h4M347 866h2M351 866h2M334 868h4M341 868h2M331 870h2M385 862h2M385 866h2M389 866h2M374 868h4M381 868h2M368 870h6M393 871h2M397 871h2M401 871h2" stroke="#1c3350" stroke-width="2" fill="none"/>
<rect x="420" y="802" width="62" height="70" fill="#1e4469"/>
<rect x="422" y="804" width="60" height="30" fill="#377dc0"/>
<rect x="422" y="836" width="60" height="36" fill="#377dc0"/>
<rect x="444" y="836" width="2" height="36" fill="#255582"/>
<path d="M444 846h2M424 862h2M432 862h2M436 862h2M439 862h4M426 866h2M430 866h2M464 862h2M464 866h2M468 866h2M453 868h4M460 868h2M447 870h6M472 871h2M476 871h2M480 871h2" stroke="#1c3350" stroke-width="2" fill="none"/>
<rect x="500" y="802" width="140" height="70" fill="#1e4469"/>
<rect x="502" y="804" width="138" height="30" fill="#377dc0"/>
<rect x="502" y="836" width="138" height="36" fill="#377dc0"/>
<rect x="522" y="836" width="2" height="36" fill="#255582"/>
<rect x="562" y="836" width="2" height="36" fill="#255582"/>
<rect x="600" y="836" width="2" height="36" fill="#255582"/>
<path d="M522 846h2M502 862h2M510 862h2M514 862h2M517 862h4M504 866h2M508 866h2M542 862h2M542 866h2M546 866h2M531 868h4M538 868h2M525 870h6M550 871h2M554 871h2M558 871h2M601 846h2M581 862h2M589 862h2M593 862h2M596 862h4M583 866h2M587 866h2M570 868h4M577 868h2M567 870h2M621 862h2M621 866h2M625 866h2M610 868h4M617 868h2M604 870h6M629 871h2M633 871h2M637 871h2" stroke="#1c3350" stroke-width="2" fill="none"/>
<path d="M563 804v6M563 866v6" stroke="#15151a" stroke-width="2" fill="none"/>
<rect x="1290" y="802" width="152" height="70" fill="#1e4469"/>
<rect x="1292" y="804" width="150" height="30" fill="#377dc0"/>
<rect x="1292" y="836" width="150" height="36" fill="#377dc0"/>
<rect x="1308" y="836" width="2" height="36" fill="#255582"/>
<rect x="1348" y="836" width="2" height="36" fill="#255582"/>
<rect x="1388" y="836" width="2" height="36" fill="#255582"/>
<rect x="1426" y="836" width="2" height="36" fill="#255582"/>
<path d="M1329 846h2M1309 862h2M1317 862h2M1321 862h2M1324 862h4M1311 866h2M1315 866h2M1298 868h4M1305 868h2M1295 870h2M1349 862h2M1349 866h2M1353 866h2M1338 868h4M1345 868h2M1332 870h6M1357 871h2M1361 871h2M1365 871h2M1408 846h2M1388 862h2M1396 862h2M1400 862h2M1403 862h4M1390 866h2M1394 866h2M1377 868h4M1384 868h2M1374 870h2M1428 862h2M1428 866h2M1432 866h2M1417 868h4M1424 868h2M1411 870h6M1436 871h2M1440 871h2" stroke="#1c3350" stroke-width="2" fill="none"/>
<path d="M1369 804v6M1369 866v6" stroke="#15151a" stroke-width="2" fill="none"/>
<rect x="1446" y="802" width="158" height="70" fill="#1e4469"/>
<rect x="1448" y="804" width="156" height="30" fill="#377dc0"/>
<rect x="1448" y="836" width="156" height="36" fill="#377dc0"/>
<rect x="1466" y="836" width="2" height="36" fill="#255582"/>
<rect x="1506" y="836" width="2" height="36" fill="#255582"/>
<rect x="1544" y="836" width="2" height="36" fill="#255582"/>
<rect x="1584" y="836" width="2" height="36" fill="#255582"/>
<path d="M1485 846h2M1465 862h2M1473 862h2M1477 862h2M1480 862h4M1467 866h2M1471 866h2M1454 868h4M1461 868h2M1451 870h2M1505 862h2M1505 866h2M1509 866h2M1494 868h4M1501 868h2M1488 870h6M1513 871h2M1517 871h2M1521 871h2M1564 846h2M1544 862h2M1552 862h2M1556 862h2M1559 862h4M1546 866h2M1550 866h2M1533 868h4M1540 868h2M1530 870h2M1584 862h2M1584 866h2M1588 866h2M1573 868h4M1580 868h2M1567 870h6M1592 871h2M1596 871h2M1600 871h2" stroke="#1c3350" stroke-width="2" fill="none"/>
<path d="M1527 804v6M1527 866v6" stroke="#15151a" stroke-width="2" fill="none"/>
<rect x="640" y="802" width="158" height="70" fill="#1e4469"/>
<rect x="642" y="804" width="156" height="30" fill="#377dc0"/>
<rect x="642" y="836" width="156" height="36" fill="#377dc0"/>
<rect x="680" y="836" width="2" height="36" fill="#255582"/>
<rect x="718" y="836" width="2" height="36" fill="#255582"/>
<rect x="758" y="836" width="2" height="36" fill="#255582"/>
<path d="M643 870h2M647 868h2M651 868h4M659 866h2M663 866h2M667 862h2M671 862h2M675 862h4M677 846h2M642 838h2M682 870h2M686 868h2M690 868h4M698 866h2M702 866h2M706 862h2M710 862h2M714 862h4M716 846h2M681 838h2M722 870h2M726 868h2M730 868h4M738 866h2M742 866h2M746 862h2M750 862h2M754 862h4M756 846h2M721 838h2M761 870h2M765 868h2M769 868h4M777 866h2M781 866h2M785 862h2M789 862h2M793 862h4M795 846h2M760 838h2" stroke="#1c3350" stroke-width="2" fill="none"/>
<path d="M681 804v6M681 866v6M719 804v6M719 866v6M759 804v6M759 866v6" stroke="#15151a" stroke-width="2" fill="none"/>
<rect x="802" y="802" width="150" height="70" fill="#1e4469"/>
<rect x="804" y="804" width="148" height="30" fill="#377dc0"/>
<rect x="804" y="836" width="148" height="36" fill="#377dc0"/>
<rect x="836" y="836" width="2" height="36" fill="#255582"/>
<rect x="876" y="836" width="2" height="36" fill="#255582"/>
<rect x="916" y="836" width="2" height="36" fill="#255582"/>
<path d="M805 868h2M809 868h4M817 866h2M821 866h2M825 862h2M829 862h2M833 862h4M835 846h2M840 870h2M844 868h2M848 868h4M856 866h2M860 866h2M864 862h2M868 862h2M872 862h4M874 846h2M839 838h2M880 870h2M884 868h2M888 868h4M896 866h2M900 866h2M904 862h2M908 862h2M912 862h4M914 846h2M879 838h2M919 870h2M923 868h2M927 868h4M935 866h2M939 866h2M943 862h2M947 862h2M918 838h2" stroke="#1c3350" stroke-width="2" fill="none"/>
<path d="M837 804v6M837 866v6M877 804v6M877 866v6M917 804v6M917 866v6" stroke="#15151a" stroke-width="2" fill="none"/>
<rect x="1606" y="802" width="38" height="70" fill="#1e4469"/>
<rect x="1608" y="804" width="36" height="30" fill="#377dc0"/>
<rect x="1608" y="836" width="36" height="36" fill="#377dc0"/>
<rect x="1624" y="836" width="2" height="36" fill="#255582"/>
<path d="M1626 862h2M1626 866h2M1630 866h2M1615 868h4M1622 868h2M1609 870h6M1634 871h2M1638 871h2M1642 871h2" stroke="#1c3350" stroke-width="2" fill="none"/>
<rect x="1644" y="802" width="38" height="70" fill="#1e4469"/>
<rect x="1646" y="804" width="36" height="30" fill="#377dc0"/>
<rect x="1646" y="836" width="36" height="36" fill="#377dc0"/>
<rect x="1662" y="836" width="2" height="36" fill="#255582"/>
<path d="M1664 862h2M1664 866h2M1668 866h2M1653 868h4M1660 868h2M1647 870h6M1672 871h2M1676 871h2M1680 871h2" stroke="#1c3350" stroke-width="2" fill="none"/>
<rect x="1682" y="802" width="40" height="70" fill="#1e4469"/>
<rect x="1684" y="804" width="38" height="30" fill="#377dc0"/>
<rect x="1684" y="836" width="38" height="36" fill="#377dc0"/>
<rect x="1702" y="836" width="2" height="36" fill="#255582"/>
<path d="M1702 862h2M1702 866h2M1706 866h2M1691 868h4M1698 868h2M1685 870h6M1710 871h2M1714 871h2M1718 871h2" stroke="#1c3350" stroke-width="2" fill="none"/>
<rect x="1722" y="802" width="40" height="70" fill="#1e4469"/>
<rect x="1724" y="804" width="38" height="30" fill="#377dc0"/>
<rect x="1724" y="836" width="38" height="36" fill="#377dc0"/>
<rect x="1742" y="836" width="2" height="36" fill="#255582"/>
<path d="M1742 862h2M1742 866h2M1746 866h2M1731 868h4M1738 868h2M1725 870h6M1750 871h2M1754 871h2M1758 871h2" stroke="#1c3350" stroke-width="2" fill="none"/>
<rect x="1762" y="802" width="38" height="70" fill="#1e4469"/>
<rect x="1764" y="804" width="36" height="30" fill="#377dc0"/>
<rect x="1764" y="836" width="36" height="36" fill="#377dc0"/>
<rect x="1780" y="836" width="2" height="36" fill="#255582"/>
<path d="M1782 862h2M1782 866h2M1786 866h2M1771 868h4M1778 868h2M1765 870h6M1790 871h2M1794 871h2M1798 871h2" stroke="#1c3350" stroke-width="2" fill="none"/>
<rect x="1800" y="802" width="40" height="70" fill="#1e4469"/>
<rect x="1802" y="804" width="38" height="30" fill="#377dc0"/>
<rect x="1802" y="836" width="38" height="36" fill="#377dc0"/>
<rect x="1820" y="836" width="2" height="36" fill="#255582"/>
<path d="M1820 862h2M1820 866h2M1824 866h2M1809 868h4M1816 868h2M1803 870h6M1828 871h2M1832 871h2M1836 871h2" stroke="#1c3350" stroke-width="2" fill="none"/>
<rect x="1840" y="802" width="78" height="70" fill="#1e4469"/>
<rect x="1842" y="804" width="76" height="30" fill="#377dc0"/>
<rect x="1842" y="836" width="76" height="36" fill="#377dc0"/>
<rect x="1860" y="836" width="2" height="36" fill="#255582"/>
<rect x="1898" y="836" width="2" height="36" fill="#255582"/>
<path d="M1879 846h2M1859 862h2M1867 862h2M1871 862h2M1874 862h4M1861 866h2M1865 866h2M1848 868h4M1855 868h2M1845 870h2M1899 862h2M1899 866h2M1903 866h2M1888 868h4M1895 868h2M1882 870h6M1907 871h2M1911 871h2M1915 871h2" stroke="#1c3350" stroke-width="2" fill="none"/>
<rect x="12" y="876" width="18" height="70" fill="#316761"/>
<rect x="14" y="878" width="16" height="30" fill="#5abdb1"/>
<rect x="14" y="910" width="16" height="36" fill="#5abdb1"/>
<path d="M15 921h2M18 919h2M22 919h2M26 919h2M15 930h2M18 928h2M22 928h2M26 928h2M15 939h2M18 937h2M22 937h2M26 937h2" stroke="#121214" stroke-width="2" fill="none"/>
<rect x="30" y="876" width="20" height="70" fill="#316761"/>
<rect x="32" y="878" width="18" height="30" fill="#5abdb1"/>
<rect x="32" y="910" width="18" height="36" fill="#5abdb1"/>
<path d="M33 921h2M36 919h2M40 919h2M44 919h2M33 930h2M36 928h2M40 928h2M44 928h2M33 939h2M36 937h2M40 937h2M44 937h2" stroke="#121214" stroke-width="2" fill="none"/>
<rect x="50" y="876" width="20" height="70" fill="#316761"/>
<rect x="52" y="878" width="18" height="30" fill="#5abdb1"/>
<rect x="52" y="910" width="18" height="36" fill="#5abdb1"/>
<path d="M53 921h2M56 919h2M60 919h6M53 930h2M56 928h2M60 928h6M53 939h2M56 937h2M60 937h6M67 914h2" stroke="#121214" stroke-width="2" fill="none"/>
<rect x="70" y="876" width="20" height="70" fill="#316761"/>
<rect x="72" y="878" width="18" height="30" fill="#5abdb1"/>
<rect x="72" y="910" width="18" height="36" fill="#5abdb1"/>
<path d="M73 921h2M76 919h2M80 919h2M84 919h2M73 930h2M76 928h2M80 928h2M84 928h2M73 939h2M76 937h2M80 937h2M84 937h2" stroke="#121214" stroke-width="2" fill="none"/>
<rect x="90" y="876" width="20" height="70" fill="#316761"/>
<rect x="92" y="878" width="18" height="30" fill="#5abdb1"/>
<rect x="92" y="910" width="18" height="36" fill="#5abdb1"/>
<path d="M93 921h2M96 919h2M100 919h2M104 919h2M93 930h2M96 928h2M100 928h2M104 928h2M93 939h2M96 937h2M100 937h2M104 937h2" stroke="#121214" stroke-width="2" fill="none"/>
<rect x="110" y="876" width="20" height="70" fill="#316761"/>
<rect x="112" y="878" width="18" height="30" fill="#5abdb1"/>
<rect x="112" y="910" width="18" height="36" fill="#5abdb1"/>
<path d="M113 921h2M116 919h2M120 919h6M113 930h2M116 928h2M120 928h6M113 939h2M116 937h2M120 937h6M127 914h2" stroke="#121214" stroke-width="2" fill="none"/>
<rect x="130" y="876" width="18" height="70" fill="#316761"/>
<rect x="132" y="878" width="16" height="30" fill="#5abdb1"/>
<rect x="132" y="910" width="16" height="36" fill="#5abdb1"/>
<path d="M133 921h2M136 919h2M140 919h2M144 919h2M133 930h2M136 928h2M140 928h2M144 928h2M133 939h2M136 937h2M140 937h2M144 937h2" stroke="#121214" stroke-width="2" fill="none"/>
<rect x="148" y="876" width="20" height="70" fill="#316761"/>
<rect x="150" y="878" width="18" height="30" fill="#5abdb1"/>
<rect x="150" y="910" width="18" height="36" fill="#5abdb1"/>
<path d="M151 921h2M154 919h2M158 919h2M162 919h2M151 930h2M154 928h2M158 928h2M162 928h2M151 939h2M154 937h2M158 937h2M162 937h2" stroke="#121214" stroke-width="2" fill="none"/>
<rect x="168" y="876" width="20" height="70" fill="#316761"/>
<rect x="170" y="878" width="18" height="30" fill="#5abdb1"/>
<rect x="170" y="910" width="18" height="36" fill="#5abdb1"/>
<path d="M171 921h2M174 919h2M178 919h6M171 930h2M174 928h2M178 928h6M171 939h2M174 937h2M178 937h6M185 914h2" stroke="#121214" stroke-width="2" fill="none"/>
<rect x="188" y="876" width="20" height="70" fill="#316761"/>
<rect x="190" y="878" width="18" height="30" fill="#5abdb1"/>
<rect x="190" y="910" width="18" height="36" fill="#5abdb1"/>
<path d="M191 921h2M194 919h2M198 919h2M202 919h2M191 930h2M194 928h2M198 928h2M202 928h2M191 939h2M194 937h2M198 937h2M202 937h2" stroke="#121214" stroke-width="2" fill="none"/>
<rect x="208" y="876" width="20" height="70" fill="#316761"/>
<rect x="210" y="878" width="18" height="30" fill="#5abdb1"/>
<rect x="210" y="910" width="18" height="36" fill="#5abdb1"/>
<path d="M211 921h2M214 919h2M218 919h2M222 919h2M211 930h2M214 928h2M218 928h2M222 928h2M211 939h2M214 937h2M218 937h2M222 937h2" stroke="#121214" stroke-width="2" fill="none"/>
<rect x="228" y="876" width="20" height="70" fill="#316761"/>
<rect x="230" y="878" width="18" height="30" fill="#5abdb1"/>
<rect x="230" y="910" width="18" height="36" fill="#5abdb1"/>
<path d="M231 921h2M234 919h2M238 919h6M231 930h2M234 928h2M238 928h6M231 939h2M234 937h2M238 937h6M245 914h2" stroke="#121214" stroke-width="2" fill="none"/>
<rect x="248" y="876" width="18" height="70" fill="#316761"/>
<rect x="250" y="878" width="16" height="30" fill="#5abdb1"/>
<rect x="250" y="910" width="16" height="36" fill="#5abdb1"/>
<path d="M251 921h2M254 919h2M258 919h2M262 919h2M251 930h2M254 928h2M258 928h2M262 928h2M251 939h2M254 937h2M258 937h2M262 937h2" stroke="#121214" stroke-width="2" fill="none"/>
<rect x="266" y="876" width="20" height="70" fill="#316761"/>
<rect x="268" y="878" width="18" height="30" fill="#5abdb1"/>
<rect x="268" y="910" width="18" height="36" fill="#5abdb1"/>
<path d="M269 921h2M272 919h2M276 919h2M280 919h2M269 930h2M272 928h2M276 928h2M280 928h2M269 939h2M272 937h2M276 937h2M280 937h2" stroke="#121214" stroke-width="2" fill="none"/>
<rect x="286" y="876" width="30" height="70" fill="#316761"/>
<rect x="288" y="878" width="28" height="30" fill="#5abdb1"/>
<rect x="288" y="910" width="28" height="36" fill="#5abdb1"/>
<path d="M289 921h2M292 919h2M296 919h6M289 930h2M292 928h2M296 928h6M289 939h2M292 937h2M296 937h6M303 914h2M309 921h2M312 919h2M309 930h2M312 928h2M309 939h2M312 937h2" stroke="#121214" stroke-width="2" fill="none"/>
<rect x="654" y="876" width="300" height="70" fill="#316761"/>
<rect x="656" y="878" width="298" height="30" fill="#5abdb1"/>
<rect x="656" y="910" width="298" height="36" fill="#5abdb1"/>
<rect x="680" y="910" width="2" height="36" fill="#3d8078"/>
<rect x="718" y="910" width="2" height="36" fill="#3d8078"/>
<rect x="758" y="910" width="2" height="36" fill="#3d8078"/>
<rect x="798" y="910" width="2" height="36" fill="#3d8078"/>
<rect x="836" y="910" width="2" height="36" fill="#3d8078"/>
<rect x="876" y="910" width="2" height="36" fill="#3d8078"/>
<rect x="916" y="910" width="2" height="36" fill="#3d8078"/>
<path d="M657 913h2M657 915h2M665 913h2M669 913h2M673 913h2M677 913h2M695 913h2M661 915h2M697 915h2M701 915h2M665 919h2M669 919h2M673 919h2M677 919h2M685 919h2M689 919h2M693 919h2M724 919h6M732 919h2M657 923h2M661 923h2M677 923h2M681 923h2M697 923h2M701 923h2M717 923h2M721 923h2M685 927h2M689 927h2M693 927h2M705 927h2M708 927h6M715 927h2M724 927h6M732 927h2M665 929h2M669 929h2M673 929h2M677 929h2M681 929h2M717 929h2M721 929h2M657 933h2M661 933h2M697 933h2M701 933h2M705 933h2M708 933h6M715 933h2M685 937h2M689 937h2M693 937h2M724 937h6M732 937h2M677 939h2M681 939h2M717 939h2M721 939h2M705 943h2M708 943h6M715 943h2M736 913h2M736 915h2M744 913h2M748 913h2M752 913h2M756 913h2M774 913h2M740 915h2M776 915h2M780 915h2M744 919h2M748 919h2M752 919h2M756 919h2M764 919h2M768 919h2M772 919h2M803 919h6M811 919h2M736 923h2M740 923h2M756 923h2M760 923h2M776 923h2M780 923h2M796 923h2M800 923h2M764 927h2M768 927h2M772 927h2M784 927h2M787 927h6M794 927h2M803 927h6M811 927h2M744 929h2M748 929h2M752 929h2M756 929h2M760 929h2M796 929h2M800 929h2M736 933h2M740 933h2M776 933h2M780 933h2M784 933h2M787 933h6M794 933h2M764 937h2M768 937h2M772 937h2M803 937h6M811 937h2M756 939h2M760 939h2M796 939h2M800 939h2M784 943h2M787 943h6M794 943h2M815 913h2M815 915h2M823 913h2M827 913h2M831 913h2M835 913h2M853 913h2M819 915h2M855 915h2M859 915h2M823 919h2M827 919h2M831 919h2M835 919h2M843 919h2M847 919h2M851 919h2M882 919h6M890 919h2M815 923h2M819 923h2M835 923h2M839 923h2M855 923h2M859 923h2M875 923h2M879 923h2M843 927h2M847 927h2M851 927h2M863 927h2M866 927h6M873 927h2M882 927h6M890 927h2M823 929h2M827 929h2M831 929h2M835 929h2M839 929h2M875 929h2M879 929h2M815 933h2M819 933h2M855 933h2M859 933h2M863 933h2M866 933h6M873 933h2M843 937h2M847 937h2M851 937h2M882 937h6M890 937h2M835 939h2M839 939h2M875 939h2M879 939h2M863 943h2M866 943h6M873 943h2M893 913h2M893 915h2M901 913h2M905 913h2M909 913h2M913 913h2M931 913h2M897 915h2M933 915h2M937 915h2M901 919h2M905 919h2M909 919h2M913 919h2M921 919h2M925 919h2M929 919h2M893 923h2M897 923h2M913 923h2M917 923h2M933 923h2M937 923h2M921 927h2M925 927h2M929 927h2M941 927h2M944 927h6M951 927h2M901 929h2M905 929h2M909 929h2M913 929h2M917 929h2M893 933h2M897 933h2M933 933h2M937 933h2M941 933h2M944 933h6M951 933h2M921 937h2M925 937h2M929 937h2M913 939h2M917 939h2M941 943h2M944 943h6M951 943h2" stroke="#121214" stroke-width="2" fill="none"/>
<path d="M681 878v6M681 940v6M719 878v6M719 940v6M759 878v6M759 940v6M799 878v6M799 940v6M837 878v6M837 940v6M877 878v6M877 940v6M917 878v6M917 940v6" stroke="#15151a" stroke-width="2" fill="none"/>
<rect x="954" y="876" width="20" height="70" fill="#316761"/>
<rect x="956" y="878" width="18" height="30" fill="#5abdb1"/>
<rect x="956" y="910" width="18" height="36" fill="#5abdb1"/>
<path d="M957 921h2M960 919h2M964 919h2M968 919h2M957 930h2M960 928h2M964 928h2M968 928h2M957 939h2M960 937h2M964 937h2M968 937h2" stroke="#121214" stroke-width="2" fill="none"/>
<rect x="974" y="876" width="20" height="70" fill="#316761"/>
<rect x="976" y="878" width="18" height="30" fill="#5abdb1"/>
<rect x="976" y="910" width="18" height="36" fill="#5abdb1"/>
<path d="M977 921h2M980 919h2M984 919h2M988 919h2M977 930h2M980 928h2M984 928h2M988 928h2M977 939h2M980 937h2M984 937h2M988 937h2" stroke="#121214" stroke-width="2" fill="none"/>
<rect x="994" y="876" width="20" height="70" fill="#316761"/>
<rect x="996" y="878" width="18" height="30" fill="#5abdb1"/>
<rect x="996" y="910" width="18" height="36" fill="#5abdb1"/>
<path d="M997 921h2M1000 919h2M1004 919h6M997 930h2M1000 928h2M1004 928h6M997 939h2M1000 937h2M1004 937h6M1011 914h2" stroke="#121214" stroke-width="2" fill="none"/>
<rect x="1014" y="876" width="20" height="70" fill="#316761"/>
<rect x="1016" y="878" width="18" height="30" fill="#5abdb1"/>
<rect x="1016" y="910" width="18" height="36" fill="#5abdb1"/>
<path d="M1017 921h2M1020 919h2M1024 919h2M1028 919h2M1017 930h2M1020 928h2M1024 928h2M1028 928h2M1017 939h2M1020 937h2M1024 937h2M1028 937h2" stroke="#121214" stroke-width="2" fill="none"/>
<rect x="1034" y="876" width="20" height="70" fill="#316761"/>
<rect x="1036" y="878" width="18" height="30" fill="#5abdb1"/>
<rect x="1036" y="910" width="18" height="36" fill="#5abdb1"/>
<path d="M1037 921h2M1040 919h2M1044 919h2M1048 919h2M1037 930h2M1040 928h2M1044 928h2M1048 928h2M1037 939h2M1040 937h2M1044 937h2M1048 937h2" stroke="#121214" stroke-width="2" fill="none"/>
<rect x="1054" y="876" width="18" height="70" fill="#316761"/>
<rect x="1056" y="878" width="16" height="30" fill="#5abdb1"/>
<rect x="1056" y="910" width="16" height="36" fill="#5abdb1"/>
<path d="M1057 921h2M1060 919h2M1064 919h6M1057 930h2M1060 928h2M1064 928h6M1057 939h2M1060 937h2M1064 937h6" stroke="#121214" stroke-width="2" fill="none"/>
<rect x="1072" y="876" width="176" height="70" fill="#316761"/>
<rect x="1074" y="878" width="174" height="30" fill="#5abdb1"/>
<rect x="1074" y="910" width="174" height="36" fill="#5abdb1"/>
<rect x="1112" y="910" width="2" height="36" fill="#3d8078"/>
<rect x="1152" y="910" width="2" height="36" fill="#3d8078"/>
<rect x="1190" y="910" width="2" height="36" fill="#3d8078"/>
<rect x="1230" y="910" width="2" height="36" fill="#3d8078"/>
<path d="M1089 913h2M1091 915h2M1095 915h2M1079 919h2M1083 919h2M1087 919h2M1118 919h6M1126 919h2M1075 923h2M1091 923h2M1095 923h2M1111 923h2M1115 923h2M1079 927h2M1083 927h2M1087 927h2M1099 927h2M1102 927h6M1109 927h2M1118 927h6M1126 927h2M1075 929h2M1111 929h2M1115 929h2M1091 933h2M1095 933h2M1099 933h2M1102 933h6M1109 933h2M1079 937h2M1083 937h2M1087 937h2M1118 937h6M1126 937h2M1075 939h2M1111 939h2M1115 939h2M1099 943h2M1102 943h6M1109 943h2M1129 913h2M1129 915h2M1137 913h2M1141 913h2M1145 913h2M1149 913h2M1167 913h2M1133 915h2M1169 915h2M1173 915h2M1137 919h2M1141 919h2M1145 919h2M1149 919h2M1157 919h2M1161 919h2M1165 919h2M1196 919h6M1204 919h2M1129 923h2M1133 923h2M1149 923h2M1153 923h2M1169 923h2M1173 923h2M1189 923h2M1193 923h2M1157 927h2M1161 927h2M1165 927h2M1177 927h2M1180 927h6M1187 927h2M1196 927h6M1204 927h2M1137 929h2M1141 929h2M1145 929h2M1149 929h2M1153 929h2M1189 929h2M1193 929h2M1129 933h2M1133 933h2M1169 933h2M1173 933h2M1177 933h2M1180 933h6M1187 933h2M1157 937h2M1161 937h2M1165 937h2M1196 937h6M1204 937h2M1149 939h2M1153 939h2M1189 939h2M1193 939h2M1177 943h2M1180 943h6M1187 943h2M1208 913h2M1208 915h2M1216 913h2M1220 913h2M1224 913h2M1228 913h2M1246 913h2M1212 915h2M1216 919h2M1220 919h2M1224 919h2M1228 919h2M1236 919h2M1240 919h2M1244 919h2M1208 923h2M1212 923h2M1228 923h2M1232 923h2M1236 927h2M1240 927h2M1244 927h2M1216 929h2M1220 929h2M1224 929h2M1228 929h2M1232 929h2M1208 933h2M1212 933h2M1236 937h2M1240 937h2M1244 937h2M1228 939h2M1232 939h2" stroke="#121214" stroke-width="2" fill="none"/>
<path d="M1113 878v6M1113 940v6M1191 878v6M1191 940v6" stroke="#15151a" stroke-width="2" fill="none"/>
<rect x="12" y="950" width="18" height="70" fill="#3a6a21"/>
<rect x="14" y="952" width="16" height="30" fill="#6bc13c"/>
<rect x="14" y="984" width="16" height="36" fill="#6bc13c"/>
<path d="M15 995h2M18 993h2M22 993h2M26 993h2M15 1004h2M18 1002h2M22 1002h2M26 1002h2M15 1013h2M18 1011h2M22 1011h2M26 1011h2" stroke="#121214" stroke-width="2" fill="none"/>
<rect x="30" y="950" width="20" height="70" fill="#3a6a21"/>
<rect x="32" y="952" width="18" height="30" fill="#6bc13c"/>
<rect x="32" y="984" width="18" height="36" fill="#6bc13c"/>
<path d="M33 995h2M36 993h2M40 993h2M44 993h2M33 1004h2M36 1002h2M40 1002h2M44 1002h2M33 1013h2M36 1011h2M40 1011h2M44 1011h2" stroke="#121214" stroke-width="2" fill="none"/>
<rect x="50" y="950" width="20" height="70" fill="#3a6a21"/>
<rect x="52" y="952" width="18" height="30" fill="#6bc13c"/>
<rect x="52" y="984" width="18" height="36" fill="#6bc13c"/>
<path d="M53 995h2M56 993h2M60 993h6M53 1004h2M56 1002h2M60 1002h6M53 1013h2M56 1011h2M60 1011h6M67 988h2" stroke="#121214" stroke-width="2" fill="none"/>
<rect x="70" y="950" width="20" height="70" fill="#3a6a21"/>
<rect x="72" y="952" width="18" height="30" fill="#6bc13c"/>
<rect x="72" y="984" width="18" height="36" fill="#6bc13c"/>
<path d="M73 995h2M76 993h2M80 993h2M84 993h2M73 1004h2M76 1002h2M80 1002h2M84 1002h2M73 1013h2M76 1011h2M80 1011h2M84 1011h2" stroke="#121214" stroke-width="2" fill="none"/>
<rect x="90" y="950" width="20" height="70" fill="#3a6a21"/>
<rect x="92" y="952" width="18" height="30" fill="#6bc13c"/>
<rect x="92" y="984" width="18" height="36" fill="#6bc13c"/>
<path d="M93 995h2M96 993h2M100 993h2M104 993h2M93 1004h2M96 1002h2M100 1002h2M104 1002h2M93 1013h2M96 1011h2M100 1011h2M104 1011h2" stroke="#121214" stroke-width="2" fill="none"/>
<rect x="110" y="950" width="20" height="70" fill="#3a6a21"/>
<rect x="112" y="952" width="18" height="30" fill="#6bc13c"/>
<rect x="112" y="984" width="18" height="36" fill="#6bc13c"/>
<path d="M113 995h2M116 993h2M120 993h6M113 1004h2M116 1002h2M120 1002h6M113 1013h2M116 1011h2M120 1011h6M127 988h2" stroke="#121214" stroke-width="2" fill="none"/>
<rect x="130" y="950" width="18" height="70" fill="#3a6a21"/>
<rect x="132" y="952" width="16" height="30" fill="#6bc13c"/>
<rect x="132" y="984" width="16" height="36" fill="#6bc13c"/>
<path d="M133 995h2M136 993h2M140 993h2M144 993h2M133 1004h2M136 1002h2M140 1002h2M144 1002h2M133 1013h2M136 1011h2M140 1011h2M144 1011h2" stroke="#121214" stroke-width="2" fill="none"/>
<rect x="148" y="950" width="20" height="70" fill="#3a6a21"/>
<rect x="150" y="952" width="18" height="30" fill="#6bc13c"/>
<rect x="150" y="984" width="18" height="36" fill="#6bc13c"/>
<path d="M151 995h2M154 993h2M158 993h2M162 993h2M151 1004h2M154 1002h2M158 1002h2M162 1002h2M151 1013h2M154 1011h2M158 1011h2M162 1011h2" stroke="#121214" stroke-width="2" fill="none"/>
<rect x="168" y="950" width="20" height="70" fill="#3a6a21"/>
<rect x="170" y="952" width="18" height="30" fill="#6bc13c"/>
<rect x="170" y="984" width="18" height="36" fill="#6bc13c"/>
<path d="M171 995h2M174 993h2M178 993h6M171 1004h2M174 1002h2M178 1002h6M171 1013h2M174 1011h2M178 1011h6M185 988h2" stroke="#121214" stroke-width="2" fill="none"/>
<rect x="188" y="950" width="20" height="70" fill="#3a6a21"/>
<rect x="190" y="952" width="18" height="30" fill="#6bc13c"/>
<rect x="190" y="984" width="18" height="36" fill="#6bc13c"/>
<path d="M191 995h2M194 993h2M198 993h2M202 993h2M191 1004h2M194 1002h2M198 1002h2M202 1002h2M191 1013h2M194 1011h2M198 1011h2M202 1011h2" stroke="#121214" stroke-width="2" fill="none"/>
<rect x="208" y="950" width="20" height="70" fill="#3a6a21"/>
<rect x="210" y="952" width="18" height="30" fill="#6bc13c"/>
<rect x="210" y="984" width="18" height="36" fill="#6bc13c"/>
<path d="M211 995h2M214 993h2M218 993h2M222 993h2M211 1004h2M214 1002h2M218 1002h2M222 1002h2M211 1013h2M214 1011h2M218 1011h2M222 1011h2" stroke="#121214" stroke-width="2" fill="none"/>
<rect x="228" y="950" width="20" height="70" fill="#3a6a21"/>
<rect x="230" y="952" width="18" height="30" fill="#6bc13c"/>
<rect x="230" y="984" width="18" height="36" fill="#6bc13c"/>
<path d="M231 995h2M234 993h2M238 993h6M231 1004h2M234 1002h2M238 1002h6M231 1013h2M234 1011h2M238 1011h6M245 988h2" stroke="#121214" stroke-width="2" fill="none"/>
<rect x="248" y="950" width="18" height="70" fill="#3a6a21"/>
<rect x="250" y="952" width="16" height="30" fill="#6bc13c"/>
<rect x="250" y="984" width="16" height="36" fill="#6bc13c"/>
<path d="M251 995h2M254 993h2M258 993h2M262 993h2M251 1004h2M254 1002h2M258 1002h2M262 1002h2M251 1013h2M254 1011h2M258 1011h2M262 1011h2" stroke="#121214" stroke-width="2" fill="none"/>
<rect x="266" y="950" width="20" height="70" fill="#3a6a21"/>
<rect x="268" y="952" width="18" height="30" fill="#6bc13c"/>
<rect x="268" y="984" width="18" height="36" fill="#6bc13c"/>
<path d="M269 995h2M272 993h2M276 993h2M280 993h2M269 1004h2M272 1002h2M276 1002h2M280 1002h2M269 1013h2M272 1011h2M276 1011h2M280 1011h2" stroke="#121214" stroke-width="2" fill="none"/>
<rect x="286" y="950" width="30" height="70" fill="#3a6a21"/>
<rect x="288" y="952" width="28" height="30" fill="#6bc13c"/>
<rect x="288" y="984" width="28" height="36" fill="#6bc13c"/>
<path d="M289 995h2M292 993h2M296 993h6M289 1004h2M292 1002h2M296 1002h6M289 1013h2M292 1011h2M296 1011h6M303 988h2M309 995h2M312 993h2M309 1004h2M312 1002h2M309 1013h2M312 1011h2" stroke="#121214" stroke-width="2" fill="none"/>
<rect x="1112" y="950" width="136" height="70" fill="#3a6a21"/>
<rect x="1114" y="952" width="134" height="30" fill="#6bc13c"/>
<rect x="1114" y="984" width="134" height="36" fill="#6bc13c"/>
<rect x="1152" y="984" width="2" height="36" fill="#488328"/>
<rect x="1190" y="984" width="2" height="36" fill="#488328"/>
<rect x="1230" y="984" width="2" height="36" fill="#488328"/>
<path d="M1118 993h6M1126 993h2M1115 997h2M1118 1001h6M1126 1001h2M1115 1003h2M1118 1011h6M1126 1011h2M1115 1013h2M1129 987h2M1129 989h2M1137 987h2M1141 987h2M1145 987h2M1149 987h2M1167 987h2M1133 989h2M1169 989h2M1173 989h2M1137 993h2M1141 993h2M1145 993h2M1149 993h2M1157 993h2M1161 993h2M1165 993h2M1196 993h6M1204 993h2M1129 997h2M1133 997h2M1149 997h2M1153 997h2M1169 997h2M1173 997h2M1189 997h2M1193 997h2M1157 1001h2M1161 1001h2M1165 1001h2M1177 1001h2M1180 1001h6M1187 1001h2M1196 1001h6M1204 1001h2M1137 1003h2M1141 1003h2M1145 1003h2M1149 1003h2M1153 1003h2M1189 1003h2M1193 1003h2M1129 1007h2M1133 1007h2M1169 1007h2M1173 1007h2M1177 1007h2M1180 1007h6M1187 1007h2M1157 1011h2M1161 1011h2M1165 1011h2M1196 1011h6M1204 1011h2M1149 1013h2M1153 1013h2M1189 1013h2M1193 1013h2M1177 1017h2M1180 1017h6M1187 1017h2M1208 987h2M1208 989h2M1216 987h2M1220 987h2M1224 987h2M1228 987h2M1246 987h2M1212 989h2M1216 993h2M1220 993h2M1224 993h2M1228 993h2M1236 993h2M1240 993h2M1244 993h2M1208 997h2M1212 997h2M1228 997h2M1232 997h2M1236 1001h2M1240 1001h2M1244 1001h2M1216 1003h2M1220 1003h2M1224 1003h2M1228 1003h2M1232 1003h2M1208 1007h2M1212 1007h2M1236 1011h2M1240 1011h2M1244 1011h2M1228 1013h2M1232 1013h2" stroke="#121214" stroke-width="2" fill="none"/>
<path d="M1191 952v6M1191 1014v6" stroke="#15151a" stroke-width="2" fill="none"/>
<rect x="168" y="1024" width="20" height="70" fill="#5f456c"/>
<rect x="170" y="1026" width="18" height="30" fill="#ae7ec5"/>
<rect x="170" y="1058" width="18" height="36" fill="#ae7ec5"/>
<path d="M171 1069h2M174 1067h2M178 1067h2M182 1067h2M171 1078h2M174 1076h2M178 1076h2M182 1076h2M171 1087h2M174 1085h2M178 1085h2M182 1085h2" stroke="#121214" stroke-width="2" fill="none"/>
<rect x="188" y="1024" width="20" height="70" fill="#5f456c"/>
<rect x="190" y="1026" width="18" height="30" fill="#ae7ec5"/>
<rect x="190" y="1058" width="18" height="36" fill="#ae7ec5"/>
<path d="M191 1069h2M194 1067h2M198 1067h2M202 1067h2M191 1078h2M194 1076h2M198 1076h2M202 1076h2M191 1087h2M194 1085h2M198 1085h2M202 1085h2" stroke="#121214" stroke-width="2" fill="none"/>
<rect x="208" y="1024" width="20" height="70" fill="#5f456c"/>
<rect x="210" y="1026" width="18" height="30" fill="#ae7ec5"/>
<rect x="210" y="1058" width="18" height="36" fill="#ae7ec5"/>
<path d="M211 1069h2M214 1067h2M218 1067h6M211 1078h2M214 1076h2M218 1076h6M211 1087h2M214 1085h2M218 1085h6M225 1062h2" stroke="#121214" stroke-width="2" fill="none"/>
<rect x="228" y="1024" width="20" height="70" fill="#5f456c"/>
<rect x="230" y="1026" width="18" height="30" fill="#ae7ec5"/>
<rect x="230" y="1058" width="18" height="36" fill="#ae7ec5"/>
<path d="M231 1069h2M234 1067h2M238 1067h2M242 1067h2M231 1078h2M234 1076h2M238 1076h2M242 1076h2M231 1087h2M234 1085h2M238 1085h2M242 1085h2" stroke="#121214" stroke-width="2" fill="none"/>
<rect x="248" y="1024" width="18" height="70" fill="#5f456c"/>
<rect x="250" y="1026" width="16" height="30" fill="#ae7ec5"/>
<rect x="250" y="1058" width="16" height="36" fill="#ae7ec5"/>
<path d="M251 1069h2M254 1067h2M258 1067h2M262 1067h2M251 1078h2M254 1076h2M258 1076h2M262 1076h2M251 1087h2M254 1085h2M258 1085h2M262 1085h2" stroke="#121214" stroke-width="2" fill="none"/>
<rect x="266" y="1024" width="20" height="70" fill="#5f456c"/>
<rect x="268" y="1026" width="18" height="30" fill="#ae7ec5"/>
<rect x="268" y="1058" width="18" height="36" fill="#ae7ec5"/>
<path d="M269 1069h2M272 1067h2M276 1067h6M269 1078h2M272 1076h2M276 1076h6M269 1087h2M272 1085h2M276 1085h6M283 1062h2" stroke="#121214" stroke-width="2" fill="none"/>
<rect x="286" y="1024" width="30" height="70" fill="#5f456c"/>
<rect x="288" y="1026" width="28" height="30" fill="#ae7ec5"/>
<rect x="288" y="1058" width="28" height="36" fill="#ae7ec5"/>
<path d="M289 1069h2M292 1067h2M296 1067h2M300 1067h2M289 1078h2M292 1076h2M296 1076h2M300 1076h2M289 1087h2M292 1085h2M296 1085h2M300 1085h2M309 1069h2M312 1067h2M309 1078h2M312 1076h2M309 1087h2M312 1085h2" stroke="#121214" stroke-width="2" fill="none"/>
<rect x="318" y="1024" width="86" height="70" fill="#5f456c"/>
<rect x="320" y="1026" width="84" height="30" fill="#ae7ec5"/>
<rect x="320" y="1058" width="84" height="36" fill="#ae7ec5"/>
<rect x="326" y="1058" width="2" height="36" fill="#765585"/>
<rect x="366" y="1058" width="2" height="36" fill="#765585"/>
<path d="M323 1061h2M325 1063h2M329 1063h2M321 1067h2M352 1067h6M360 1067h2M325 1071h2M329 1071h2M345 1071h2M349 1071h2M321 1075h2M333 1075h2M336 1075h6M343 1075h2M352 1075h6M360 1075h2M345 1077h2M349 1077h2M325 1081h2M329 1081h2M333 1081h2M336 1081h6M343 1081h2M321 1085h2M352 1085h6M360 1085h2M345 1087h2M349 1087h2M333 1091h2M336 1091h6M343 1091h2M364 1061h2M364 1063h2M372 1061h2M376 1061h2M380 1061h2M384 1061h2M402 1061h2M368 1063h2M372 1067h2M376 1067h2M380 1067h2M384 1067h2M392 1067h2M396 1067h2M400 1067h2M364 1071h2M368 1071h2M384 1071h2M388 1071h2M392 1075h2M396 1075h2M400 1075h2M372 1077h2M376 1077h2M380 1077h2M384 1077h2M388 1077h2M364 1081h2M368 1081h2M392 1085h2M396 1085h2M400 1085h2M384 1087h2M388 1087h2" stroke="#121214" stroke-width="2" fill="none"/>
<path d="M327 1026v6M327 1088v6" stroke="#15151a" stroke-width="2" fill="none"/>
<rect x="410" y="1024" width="4" height="70" fill="#5f456c"/>
<rect x="412" y="1026" width="2" height="30" fill="#ae7ec5"/>
<rect x="412" y="1058" width="2" height="36" fill="#ae7ec5"/>
<rect x="420" y="1024" width="218" height="70" fill="#5f456c"/>
<rect x="422" y="1026" width="216" height="30" fill="#ae7ec5"/>
<rect x="422" y="1058" width="216" height="36" fill="#ae7ec5"/>
<rect x="444" y="1058" width="2" height="36" fill="#765585"/>
<rect x="482" y="1058" width="2" height="36" fill="#765585"/>
<rect x="522" y="1058" width="2" height="36" fill="#765585"/>
<rect x="562" y="1058" width="2" height="36" fill="#765585"/>
<rect x="600" y="1058" width="2" height="36" fill="#765585"/>
<path d="M431 1067h6M439 1067h2M424 1071h2M428 1071h2M431 1075h6M439 1075h2M424 1077h2M428 1077h2M431 1085h6M439 1085h2M424 1087h2M428 1087h2M443 1061h2M443 1063h2M451 1061h2M455 1061h2M459 1061h2M463 1061h2M481 1061h2M447 1063h2M483 1063h2M487 1063h2M451 1067h2M455 1067h2M459 1067h2M463 1067h2M471 1067h2M475 1067h2M479 1067h2M510 1067h6M518 1067h2M443 1071h2M447 1071h2M463 1071h2M467 1071h2M483 1071h2M487 1071h2M503 1071h2M507 1071h2M471 1075h2M475 1075h2M479 1075h2M491 1075h2M494 1075h6M501 1075h2M510 1075h6M518 1075h2M451 1077h2M455 1077h2M459 1077h2M463 1077h2M467 1077h2M503 1077h2M507 1077h2M443 1081h2M447 1081h2M483 1081h2M487 1081h2M491 1081h2M494 1081h6M501 1081h2M471 1085h2M475 1085h2M479 1085h2M510 1085h6M518 1085h2M463 1087h2M467 1087h2M503 1087h2M507 1087h2M491 1091h2M494 1091h6M501 1091h2M521 1061h2M521 1063h2M529 1061h2M533 1061h2M537 1061h2M541 1061h2M559 1061h2M525 1063h2M561 1063h2M565 1063h2M529 1067h2M533 1067h2M537 1067h2M541 1067h2M549 1067h2M553 1067h2M557 1067h2M588 1067h6M596 1067h2M521 1071h2M525 1071h2M541 1071h2M545 1071h2M561 1071h2M565 1071h2M581 1071h2M585 1071h2M549 1075h2M553 1075h2M557 1075h2M569 1075h2M572 1075h6M579 1075h2M588 1075h6M596 1075h2M529 1077h2M533 1077h2M537 1077h2M541 1077h2M545 1077h2M581 1077h2M585 1077h2M521 1081h2M525 1081h2M561 1081h2M565 1081h2M569 1081h2M572 1081h6M579 1081h2M549 1085h2M553 1085h2M557 1085h2M588 1085h6M596 1085h2M541 1087h2M545 1087h2M581 1087h2M585 1087h2M569 1091h2M572 1091h6M579 1091h2M600 1061h2M600 1063h2M608 1061h2M612 1061h2M616 1061h2M620 1061h2M604 1063h2M608 1067h2M612 1067h2M616 1067h2M620 1067h2M628 1067h2M632 1067h2M636 1067h2M600 1071h2M604 1071h2M620 1071h2M624 1071h2M628 1075h2M632 1075h2M636 1075h2M608 1077h2M612 1077h2M616 1077h2M620 1077h2M624 1077h2M600 1081h2M604 1081h2M628 1085h2M632 1085h2M636 1085h2M620 1087h2M624 1087h2" stroke="#121214" stroke-width="2" fill="none"/>
<path d="M483 1026v6M483 1088v6M563 1026v6M563 1088v6" stroke="#15151a" stroke-width="2" fill="none"/>
<rect x="1112" y="1024" width="20" height="70" fill="#5f456c"/>
<rect x="1114" y="1026" width="18" height="30" fill="#ae7ec5"/>
<rect x="1114" y="1058" width="18" height="36" fill="#ae7ec5"/>
<path d="M1115 1069h2M1118 1067h2M1122 1067h2M1126 1067h2M1115 1078h2M1118 1076h2M1122 1076h2M1126 1076h2M1115 1087h2M1118 1085h2M1122 1085h2M1126 1085h2" stroke="#121214" stroke-width="2" fill="none"/>
<rect x="1132" y="1024" width="20" height="70" fill="#5f456c"/>
<rect x="1134" y="1026" width="18" height="30" fill="#ae7ec5"/>
<rect x="1134" y="1058" width="18" height="36" fill="#ae7ec5"/>
<path d="M1135 1069h2M1138 1067h2M1142 1067h2M1146 1067h2M1135 1078h2M1138 1076h2M1142 1076h2M1146 1076h2M1135 1087h2M1138 1085h2M1142 1085h2M1146 1085h2" stroke="#121214" stroke-width="2" fill="none"/>
<rect x="1152" y="1024" width="20" height="70" fill="#5f456c"/>
<rect x="1154" y="1026" width="18" height="30" fill="#ae7ec5"/>
<rect x="1154" y="1058" width="18" height="36" fill="#ae7ec5"/>
<path d="M1155 1069h2M1158 1067h2M1162 1067h6M1155 1078h2M1158 1076h2M1162 1076h6M1155 1087h2M1158 1085h2M1162 1085h6M1169 1062h2" stroke="#121214" stroke-width="2" fill="none"/>
<rect x="1172" y="1024" width="18" height="70" fill="#5f456c"/>
<rect x="1174" y="1026" width="16" height="30" fill="#ae7ec5"/>
<rect x="1174" y="1058" width="16" height="36" fill="#ae7ec5"/>
<path d="M1175 1069h2M1178 1067h2M1182 1067h2M1186 1067h2M1175 1078h2M1178 1076h2M1182 1076h2M1186 1076h2M1175 1087h2M1178 1085h2M1182 1085h2M1186 1085h2" stroke="#121214" stroke-width="2" fill="none"/>
<rect x="1190" y="1024" width="20" height="70" fill="#5f456c"/>
<rect x="1192" y="1026" width="18" height="30" fill="#ae7ec5"/>
<rect x="1192" y="1058" width="18" height="36" fill="#ae7ec5"/>
<path d="M1193 1069h2M1196 1067h2M1200 1067h2M1204 1067h2M1193 1078h2M1196 1076h2M1200 1076h2M1204 1076h2M1193 1087h2M1196 1085h2M1200 1085h2M1204 1085h2" stroke="#121214" stroke-width="2" fill="none"/>
<rect x="1210" y="1024" width="20" height="70" fill="#5f456c"/>
<rect x="1212" y="1026" width="18" height="30" fill="#ae7ec5"/>
<rect x="1212" y="1058" width="18" height="36" fill="#ae7ec5"/>
<path d="M1213 1069h2M1216 1067h2M1220 1067h6M1213 1078h2M1216 1076h2M1220 1076h6M1213 1087h2M1216 1085h2M1220 1085h6M1227 1062h2" stroke="#121214" stroke-width="2" fill="none"/>
<rect x="1230" y="1024" width="20" height="70" fill="#5f456c"/>
<rect x="1232" y="1026" width="18" height="30" fill="#ae7ec5"/>
<rect x="1232" y="1058" width="18" height="36" fill="#ae7ec5"/>
<path d="M1233 1069h2M1236 1067h2M1240 1067h2M1244 1067h2M1233 1078h2M1236 1076h2M1240 1076h2M1244 1076h2M1233 1087h2M1236 1085h2M1240 1085h2M1244 1085h2" stroke="#121214" stroke-width="2" fill="none"/>
<rect x="1272" y="1024" width="12" height="70" fill="#5f456c"/>
<rect x="1274" y="1026" width="10" height="30" fill="#ae7ec5"/>
<rect x="1274" y="1058" width="10" height="36" fill="#ae7ec5"/>
<path d="M1275 1069h2M1278 1067h2M1282 1067h2M1275 1078h2M1278 1076h2M1282 1076h2M1275 1087h2M1278 1085h2M1282 1085h2" stroke="#121214" stroke-width="2" fill="none"/>
<rect x="1290" y="1024" width="152" height="70" fill="#5f456c"/>
<rect x="1292" y="1026" width="150" height="30" fill="#ae7ec5"/>
<rect x="1292" y="1058" width="150" height="36" fill="#ae7ec5"/>
<rect x="1308" y="1058" width="2" height="36" fill="#765585"/>
<rect x="1348" y="1058" width="2" height="36" fill="#765585"/>
<rect x="1388" y="1058" width="2" height="36" fill="#765585"/>
<rect x="1426" y="1058" width="2" height="36" fill="#765585"/>
<path d="M1296 1067h6M1304 1067h2M1293 1071h2M1296 1075h6M1304 1075h2M1293 1077h2M1296 1085h6M1304 1085h2M1293 1087h2M1308 1061h2M1308 1063h2M1316 1061h2M1320 1061h2M1324 1061h2M1328 1061h2M1346 1061h2M1312 1063h2M1348 1063h2M1352 1063h2M1316 1067h2M1320 1067h2M1324 1067h2M1328 1067h2M1336 1067h2M1340 1067h2M1344 1067h2M1375 1067h6M1383 1067h2M1308 1071h2M1312 1071h2M1328 1071h2M1332 1071h2M1348 1071h2M1352 1071h2M1368 1071h2M1372 1071h2M1336 1075h2M1340 1075h2M1344 1075h2M1356 1075h2M1359 1075h6M1366 1075h2M1375 1075h6M1383 1075h2M1316 1077h2M1320 1077h2M1324 1077h2M1328 1077h2M1332 1077h2M1368 1077h2M1372 1077h2M1308 1081h2M1312 1081h2M1348 1081h2M1352 1081h2M1356 1081h2M1359 1081h6M1366 1081h2M1336 1085h2M1340 1085h2M1344 1085h2M1375 1085h6M1383 1085h2M1328 1087h2M1332 1087h2M1368 1087h2M1372 1087h2M1356 1091h2M1359 1091h6M1366 1091h2M1387 1061h2M1387 1063h2M1395 1061h2M1399 1061h2M1403 1061h2M1407 1061h2M1425 1061h2M1391 1063h2M1427 1063h2M1431 1063h2M1395 1067h2M1399 1067h2M1403 1067h2M1407 1067h2M1415 1067h2M1419 1067h2M1423 1067h2M1387 1071h2M1391 1071h2M1407 1071h2M1411 1071h2M1427 1071h2M1431 1071h2M1415 1075h2M1419 1075h2M1423 1075h2M1435 1075h2M1395 1077h2M1399 1077h2M1403 1077h2M1407 1077h2M1411 1077h2M1387 1081h2M1391 1081h2M1427 1081h2M1431 1081h2M1435 1081h2M1415 1085h2M1419 1085h2M1423 1085h2M1407 1087h2M1411 1087h2M1435 1091h2" stroke="#121214" stroke-width="2" fill="none"/>
<path d="M1369 1026v6M1369 1088v6" stroke="#15151a" stroke-width="2" fill="none"/>
<rect x="1446" y="1024" width="158" height="70" fill="#5f456c"/>
<rect x="1448" y="1026" width="156" height="30" fill="#ae7ec5"/>
<rect x="1448" y="1058" width="156" height="36" fill="#ae7ec5"/>
<rect x="1466" y="1058" width="2" height="36" fill="#765585"/>
<rect x="1506" y="1058" width="2" height="36" fill="#765585"/>
<rect x="1544" y="1058" width="2" height="36" fill="#765585"/>
<rect x="1584" y="1058" width="2" height="36" fill="#765585"/>
<path d="M1454 1067h6M1462 1067h2M1451 1071h2M1454 1075h6M1462 1075h2M1451 1077h2M1454 1085h6M1462 1085h2M1451 1087h2M1465 1061h2M1465 1063h2M1473 1061h2M1477 1061h2M1481 1061h2M1485 1061h2M1503 1061h2M1469 1063h2M1505 1063h2M1509 1063h2M1473 1067h2M1477 1067h2M1481 1067h2M1485 1067h2M1493 1067h2M1497 1067h2M1501 1067h2M1532 1067h6M1540 1067h2M1465 1071h2M1469 1071h2M1485 1071h2M1489 1071h2M1505 1071h2M1509 1071h2M1525 1071h2M1529 1071h2M1493 1075h2M1497 1075h2M1501 1075h2M1513 1075h2M1516 1075h6M1523 1075h2M1532 1075h6M1540 1075h2M1473 1077h2M1477 1077h2M1481 1077h2M1485 1077h2M1489 1077h2M1525 1077h2M1529 1077h2M1465 1081h2M1469 1081h2M1505 1081h2M1509 1081h2M1513 1081h2M1516 1081h6M1523 1081h2M1493 1085h2M1497 1085h2M1501 1085h2M1532 1085h6M1540 1085h2M1485 1087h2M1489 1087h2M1525 1087h2M1529 1087h2M1513 1091h2M1516 1091h6M1523 1091h2M1544 1061h2M1544 1063h2M1552 1061h2M1556 1061h2M1560 1061h2M1564 1061h2M1582 1061h2M1548 1063h2M1584 1063h2M1588 1063h2M1552 1067h2M1556 1067h2M1560 1067h2M1564 1067h2M1572 1067h2M1576 1067h2M1580 1067h2M1544 1071h2M1548 1071h2M1564 1071h2M1568 1071h2M1584 1071h2M1588 1071h2M1572 1075h2M1576 1075h2M1580 1075h2M1592 1075h2M1595 1075h6M1602 1075h2M1552 1077h2M1556 1077h2M1560 1077h2M1564 1077h2M1568 1077h2M1544 1081h2M1548 1081h2M1584 1081h2M1588 1081h2M1592 1081h2M1595 1081h6M1602 1081h2M1572 1085h2M1576 1085h2M1580 1085h2M1564 1087h2M1568 1087h2M1592 1091h2M1595 1091h6M1602 1091h2" stroke="#121214" stroke-width="2" fill="none"/>
<path d="M1527 1026v6M1527 1088v6" stroke="#15151a" stroke-width="2" fill="none"/>
<rect x="1606" y="1024" width="38" height="70" fill="#5f456c"/>
<rect x="1608" y="1026" width="36" height="30" fill="#ae7ec5"/>
<rect x="1608" y="1058" width="36" height="36" fill="#ae7ec5"/>
<rect x="1624" y="1058" width="2" height="36" fill="#765585"/>
<path d="M1625 1062h2M1627 1064h2M1631 1064h2M1635 1062h2M1638 1062h4M1615 1068h2M1618 1068h4M1635 1068h2M1638 1068h4M1611 1072h2M1627 1072h2M1631 1072h2M1615 1076h2M1618 1076h4M1611 1078h2M1635 1078h2M1638 1078h4M1627 1082h2M1631 1082h2" stroke="#121214" stroke-width="2" fill="none"/>
<rect x="1644" y="1024" width="38" height="70" fill="#5f456c"/>
<rect x="1646" y="1026" width="36" height="30" fill="#ae7ec5"/>
<rect x="1646" y="1058" width="36" height="36" fill="#ae7ec5"/>
<rect x="1662" y="1058" width="2" height="36" fill="#765585"/>
<path d="M1663 1062h2M1665 1064h2M1669 1064h2M1673 1062h2M1676 1062h4M1653 1068h2M1656 1068h4M1673 1068h2M1676 1068h4M1649 1072h2M1665 1072h2M1669 1072h2M1653 1076h2M1656 1076h4M1649 1078h2M1673 1078h2M1676 1078h4M1665 1082h2M1669 1082h2" stroke="#121214" stroke-width="2" fill="none"/>
<rect x="1682" y="1024" width="40" height="70" fill="#5f456c"/>
<rect x="1684" y="1026" width="38" height="30" fill="#ae7ec5"/>
<rect x="1684" y="1058" width="38" height="36" fill="#ae7ec5"/>
<rect x="1702" y="1058" width="2" height="36" fill="#765585"/>
<path d="M1701 1062h2M1703 1064h2M1707 1064h2M1711 1062h2M1714 1062h4M1691 1068h2M1694 1068h4M1711 1068h2M1714 1068h4M1687 1072h2M1703 1072h2M1707 1072h2M1691 1076h2M1694 1076h4M1687 1078h2M1711 1078h2M1714 1078h4M1703 1082h2M1707 1082h2" stroke="#121214" stroke-width="2" fill="none"/>
<rect x="1722" y="1024" width="40" height="70" fill="#5f456c"/>
<rect x="1724" y="1026" width="38" height="30" fill="#ae7ec5"/>
<rect x="1724" y="1058" width="38" height="36" fill="#ae7ec5"/>
<rect x="1742" y="1058" width="2" height="36" fill="#765585"/>
<path d="M1741 1062h2M1743 1064h2M1747 1064h2M1751 1062h2M1754 1062h4M1731 1068h2M1734 1068h4M1751 1068h2M1754 1068h4M1727 1072h2M1743 1072h2M1747 1072h2M1731 1076h2M1734 1076h4M1727 1078h2M1751 1078h2M1754 1078h4M1743 1082h2M1747 1082h2" stroke="#121214" stroke-width="2" fill="none"/>
<rect x="1762" y="1024" width="38" height="70" fill="#5f456c"/>
<rect x="1764" y="1026" width="36" height="30" fill="#ae7ec5"/>
<rect x="1764" y="1058" width="36" height="36" fill="#ae7ec5"/>
<rect x="1780" y="1058" width="2" height="36" fill="#765585"/>
<path d="M1781 1062h2M1783 1064h2M1787 1064h2M1791 1062h2M1794 1062h4M1771 1068h2M1774 1068h4M1791 1068h2M1794 1068h4M1767 1072h2M1783 1072h2M1787 1072h2M1771 1076h2M1774 1076h4M1767 1078h2M1791 1078h2M1794 1078h4M1783 1082h2M1787 1082h2" stroke="#121214" stroke-width="2" fill="none"/>
<rect x="1800" y="1024" width="40" height="70" fill="#5f456c"/>
<rect x="1802" y="1026" width="38" height="30" fill="#ae7ec5"/>
<rect x="1802" y="1058" width="38" height="36" fill="#ae7ec5"/>
<rect x="1820" y="1058" width="2" height="36" fill="#765585"/>
<path d="M1819 1062h2M1821 1064h2M1825 1064h2M1829 1062h2M1832 1062h4M1809 1068h2M1812 1068h4M1829 1068h2M1832 1068h4M1805 1072h2M1821 1072h2M1825 1072h2M1809 1076h2M1812 1076h4M1805 1078h2M1829 1078h2M1832 1078h4M1821 1082h2M1825 1082h2" stroke="#121214" stroke-width="2" fill="none"/>
<rect x="1840" y="1024" width="76" height="70" fill="#5f456c"/>
<rect x="1842" y="1026" width="74" height="30" fill="#ae7ec5"/>
<rect x="1842" y="1058" width="74" height="36" fill="#ae7ec5"/>
<rect x="1860" y="1058" width="2" height="36" fill="#765585"/>
<rect x="1898" y="1058" width="2" height="36" fill="#765585"/>
<path d="M1847 1067h6M1855 1067h2M1844 1071h2M1847 1075h6M1855 1075h2M1844 1077h2M1847 1085h6M1855 1085h2M1844 1087h2M1858 1061h2M1858 1063h2M1866 1061h2M1870 1061h2M1874 1061h2M1878 1061h2M1896 1061h2M1862 1063h2M1898 1063h2M1902 1063h2M1866 1067h2M1870 1067h2M1874 1067h2M1878 1067h2M1886 1067h2M1890 1067h2M1894 1067h2M1858 1071h2M1862 1071h2M1878 1071h2M1882 1071h2M1898 1071h2M1902 1071h2M1886 1075h2M1890 1075h2M1894 1075h2M1906 1075h2M1909 1075h6M1866 1077h2M1870 1077h2M1874 1077h2M1878 1077h2M1882 1077h2M1858 1081h2M1862 1081h2M1898 1081h2M1902 1081h2M1906 1081h2M1909 1081h6M1886 1085h2M1890 1085h2M1894 1085h2M1878 1087h2M1882 1087h2M1906 1091h2M1909 1091h6" stroke="#121214" stroke-width="2" fill="none"/>
<rect x="1918" y="1024" width="40" height="70" fill="#5f456c"/>
<rect x="1920" y="1026" width="38" height="30" fill="#ae7ec5"/>
<rect x="1920" y="1058" width="38" height="36" fill="#ae7ec5"/>
<rect x="1938" y="1058" width="2" height="36" fill="#765585"/>
<path d="M1937 1062h2M1939 1064h2M1943 1064h2M1947 1062h2M1950 1062h4M1927 1068h2M1930 1068h4M1947 1068h2M1950 1068h4M1923 1072h2M1939 1072h2M1943 1072h2M1927 1076h2M1930 1076h4M1923 1078h2M1947 1078h2M1950 1078h4M1939 1082h2M1943 1082h2" stroke="#121214" stroke-width="2" fill="none"/>
<rect x="1958" y="1024" width="40" height="70" fill="#5f456c"/>
<rect x="1960" y="1026" width="38" height="30" fill="#ae7ec5"/>
<rect x="1960" y="1058" width="38" height="36" fill="#ae7ec5"/>
<rect x="1978" y="1058" width="2" height="36" fill="#765585"/>
<path d="M1977 1062h2M1979 1064h2M1983 1064h2M1987 1062h2M1990 1062h4M1967 1068h2M1970 1068h4M1987 1068h2M1990 1068h4M1963 1072h2M1979 1072h2M1983 1072h2M1967 1076h2M1970 1076h4M1963 1078h2M1987 1078h2M1990 1078h4M1979 1082h2M1983 1082h2" stroke="#121214" stroke-width="2" fill="none"/>
<rect x="1998" y="1024" width="38" height="70" fill="#5f456c"/>
<rect x="2000" y="1026" width="36" height="30" fill="#ae7ec5"/>
<rect x="2000" y="1058" width="36" height="36" fill="#ae7ec5"/>
<rect x="2016" y="1058" width="2" height="36" fill="#765585"/>
<path d="M2017 1062h2M2019 1064h2M2023 1064h2M2027 1062h2M2030 1062h4M2007 1068h2M2010 1068h4M2027 1068h2M2030 1068h4M2003 1072h2M2019 1072h2M2023 1072h2M2007 1076h2M2010 1076h4M2003 1078h2M2027 1078h2M2030 1078h4M2019 1082h2M2023 1082h2" stroke="#121214" stroke-width="2" fill="none"/>
<rect x="2036" y="1024" width="40" height="70" fill="#5f456c"/>
<rect x="2038" y="1026" width="38" height="30" fill="#ae7ec5"/>
<rect x="2038" y="1058" width="38" height="36" fill="#ae7ec5"/>
<rect x="2056" y="1058" width="2" height="36" fill="#765585"/>
<path d="M2055 1062h2M2057 1064h2M2061 1064h2M2065 1062h2M2068 1062h4M2045 1068h2M2048 1068h4M2065 1068h2M2068 1068h4M2041 1072h2M2057 1072h2M2061 1072h2M2045 1076h2M2048 1076h4M2041 1078h2M2065 1078h2M2068 1078h4M2057 1082h2M2061 1082h2" stroke="#121214" stroke-width="2" fill="none"/>
<rect x="2076" y="1024" width="40" height="70" fill="#5f456c"/>
<rect x="2078" y="1026" width="38" height="30" fill="#ae7ec5"/>
<rect x="2078" y="1058" width="38" height="36" fill="#ae7ec5"/>
<rect x="2096" y="1058" width="2" height="36" fill="#765585"/>
<path d="M2095 1062h2M2097 1064h2M2101 1064h2M2105 1062h2M2108 1062h4M2085 1068h2M2088 1068h4M2105 1068h2M2108 1068h4M2081 1072h2M2097 1072h2M2101 1072h2M2085 1076h2M2088 1076h4M2081 1078h2M2105 1078h2M2108 1078h4M2097 1082h2M2101 1082h2" stroke="#121214" stroke-width="2" fill="none"/>
<rect x="2116" y="1024" width="38" height="70" fill="#5f456c"/>
<rect x="2118" y="1026" width="36" height="30" fill="#ae7ec5"/>
<rect x="2118" y="1058" width="36" height="36" fill="#ae7ec5"/>
<rect x="2134" y="1058" width="2" height="36" fill="#765585"/>
<path d="M2135 1062h2M2137 1064h2M2141 1064h2M2145 1062h2M2148 1062h4M2125 1068h2M2128 1068h4M2145 1068h2M2148 1068h4M2121 1072h2M2137 1072h2M2141 1072h2M2125 1076h2M2128 1076h4M2121 1078h2M2145 1078h2M2148 1078h4M2137 1082h2M2141 1082h2" stroke="#121214" stroke-width="2" fill="none"/>
<rect x="2154" y="1024" width="76" height="70" fill="#5f456c"/>
<rect x="2156" y="1026" width="74" height="30" fill="#ae7ec5"/>
<rect x="2156" y="1058" width="74" height="36" fill="#ae7ec5"/>
<rect x="2174" y="1058" width="2" height="36" fill="#765585"/>
<rect x="2214" y="1058" width="2" height="36" fill="#765585"/>
<path d="M2161 1067h6M2169 1067h2M2158 1071h2M2161 1075h6M2169 1075h2M2158 1077h2M2161 1085h6M2169 1085h2M2158 1087h2M2173 1061h2M2173 1063h2M2181 1061h2M2185 1061h2M2189 1061h2M2193 1061h2M2211 1061h2M2177 1063h2M2213 1063h2M2217 1063h2M2181 1067h2M2185 1067h2M2189 1067h2M2193 1067h2M2201 1067h2M2205 1067h2M2209 1067h2M2173 1071h2M2177 1071h2M2193 1071h2M2197 1071h2M2213 1071h2M2217 1071h2M2201 1075h2M2205 1075h2M2209 1075h2M2221 1075h2M2181 1077h2M2185 1077h2M2189 1077h2M2193 1077h2M2197 1077h2M2173 1081h2M2177 1081h2M2213 1081h2M2217 1081h2M2221 1081h2M2201 1085h2M2205 1085h2M2209 1085h2M2193 1087h2M2197 1087h2M2221 1091h2" stroke="#121214" stroke-width="2" fill="none"/>
<rect x="12" y="1098" width="18" height="70" fill="#3a5624"/>
<rect x="14" y="1100" width="16" height="30" fill="#6a9e43"/>
<rect x="14" y="1132" width="16" height="36" fill="#6a9e43"/>
<path d="M15 1143h2M18 1141h2M22 1141h2M26 1141h2M15 1152h2M18 1150h2M22 1150h2M26 1150h2M15 1161h2M18 1159h2M22 1159h2M26 1159h2" stroke="#121214" stroke-width="2" fill="none"/>
<rect x="30" y="1098" width="20" height="70" fill="#3a5624"/>
<rect x="32" y="1100" width="18" height="30" fill="#6a9e43"/>
<rect x="32" y="1132" width="18" height="36" fill="#6a9e43"/>
<path d="M33 1143h2M36 1141h2M40 1141h2M44 1141h2M33 1152h2M36 1150h2M40 1150h2M44 1150h2M33 1161h2M36 1159h2M40 1159h2M44 1159h2" stroke="#121214" stroke-width="2" fill="none"/>
<rect x="50" y="1098" width="20" height="70" fill="#3a5624"/>
<rect x="52" y="1100" width="18" height="30" fill="#6a9e43"/>
<rect x="52" y="1132" width="18" height="36" fill="#6a9e43"/>
<path d="M53 1143h2M56 1141h2M60 1141h6M53 1152h2M56 1150h2M60 1150h6M53 1161h2M56 1159h2M60 1159h6M67 1136h2" stroke="#121214" stroke-width="2" fill="none"/>
<rect x="70" y="1098" width="20" height="70" fill="#3a5624"/>
<rect x="72" y="1100" width="18" height="30" fill="#6a9e43"/>
<rect x="72" y="1132" width="18" height="36" fill="#6a9e43"/>
<path d="M73 1143h2M76 1141h2M80 1141h2M84 1141h2M73 1152h2M76 1150h2M80 1150h2M84 1150h2M73 1161h2M76 1159h2M80 1159h2M84 1159h2" stroke="#121214" stroke-width="2" fill="none"/>
<rect x="90" y="1098" width="20" height="70" fill="#3a5624"/>
<rect x="92" y="1100" width="18" height="30" fill="#6a9e43"/>
<rect x="92" y="1132" width="18" height="36" fill="#6a9e43"/>
<path d="M93 1143h2M96 1141h2M100 1141h2M104 1141h2M93 1152h2M96 1150h2M100 1150h2M104 1150h2M93 1161h2M96 1159h2M100 1159h2M104 1159h2" stroke="#121214" stroke-width="2" fill="none"/>
<rect x="110" y="1098" width="20" height="70" fill="#3a5624"/>
<rect x="112" y="1100" width="18" height="30" fill="#6a9e43"/>
<rect x="112" y="1132" width="18" height="36" fill="#6a9e43"/>
<path d="M113 1143h2M116 1141h2M120 1141h6M113 1152h2M116 1150h2M120 1150h6M113 1161h2M116 1159h2M120 1159h6M127 1136h2" stroke="#121214" stroke-width="2" fill="none"/>
<rect x="130" y="1098" width="18" height="70" fill="#3a5624"/>
<rect x="132" y="1100" width="16" height="30" fill="#6a9e43"/>
<rect x="132" y="1132" width="16" height="36" fill="#6a9e43"/>
<path d="M133 1143h2M136 1141h2M140 1141h2M144 1141h2M133 1152h2M136 1150h2M140 1150h2M144 1150h2M133 1161h2M136 1159h2M140 1159h2M144 1159h2" stroke="#121214" stroke-width="2" fill="none"/>
<rect x="148" y="1098" width="20" height="70" fill="#3a5624"/>
<rect x="150" y="1100" width="18" height="30" fill="#6a9e43"/>
<rect x="150" y="1132" width="18" height="36" fill="#6a9e43"/>
<path d="M151 1143h2M154 1141h2M158 1141h2M162 1141h2M151 1152h2M154 1150h2M158 1150h2M162 1150h2M151 1161h2M154 1159h2M158 1159h2M162 1159h2" stroke="#121214" stroke-width="2" fill="none"/>
<rect x="168" y="1098" width="20" height="70" fill="#3a5624"/>
<rect x="170" y="1100" width="18" height="30" fill="#6a9e43"/>
<rect x="170" y="1132" width="18" height="36" fill="#6a9e43"/>
<path d="M171 1143h2M174 1141h2M178 1141h6M171 1152h2M174 1150h2M178 1150h6M171 1161h2M174 1159h2M178 1159h6M185 1136h2" stroke="#121214" stroke-width="2" fill="none"/>
<rect x="188" y="1098" width="20" height="70" fill="#3a5624"/>
<rect x="190" y="1100" width="18" height="30" fill="#6a9e43"/>
<rect x="190" y="1132" width="18" height="36" fill="#6a9e43"/>
<path d="M191 1143h2M194 1141h2M198 1141h2M202 1141h2M191 1152h2M194 1150h2M198 1150h2M202 1150h2M191 1161h2M194 1159h2M198 1159h2M202 1159h2" stroke="#121214" stroke-width="2" fill="none"/>
<rect x="208" y="1098" width="20" height="70" fill="#3a5624"/>
<rect x="210" y="1100" width="18" height="30" fill="#6a9e43"/>
<rect x="210" y="1132" width="18" height="36" fill="#6a9e43"/>
<path d="M211 1143h2M214 1141h2M218 1141h2M222 1141h2M211 1152h2M214 1150h2M218 1150h2M222 1150h2M211 1161h2M214 1159h2M218 1159h2M222 1159h2" stroke="#121214" stroke-width="2" fill="none"/>
<rect x="228" y="1098" width="20" height="70" fill="#3a5624"/>
<rect x="230" y="1100" width="18" height="30" fill="#6a9e43"/>
<rect x="230" y="1132" width="18" height="36" fill="#6a9e43"/>
<path d="M231 1143h2M234 1141h2M238 1141h6M231 1152h2M234 1150h2M238 1150h6M231 1161h2M234 1159h2M238 1159h6M245 1136h2" stroke="#121214" stroke-width="2" fill="none"/>
<rect x="248" y="1098" width="18" height="70" fill="#3a5624"/>
<rect x="250" y="1100" width="16" height="30" fill="#6a9e43"/>
<rect x="250" y="1132" width="16" height="36" fill="#6a9e43"/>
<path d="M251 1143h2M254 1141h2M258 1141h2M262 1141h2M251 1152h2M254 1150h2M258 1150h2M262 1150h2M251 1161h2M254 1159h2M258 1159h2M262 1159h2" stroke="#121214" stroke-width="2" fill="none"/>
<rect x="266" y="1098" width="20" height="70" fill="#3a5624"/>
<rect x="268" y="1100" width="18" height="30" fill="#6a9e43"/>
<rect x="268" y="1132" width="18" height="36" fill="#6a9e43"/>
<path d="M269 1143h2M272 1141h2M276 1141h2M280 1141h2M269 1152h2M272 1150h2M276 1150h2M280 1150h2M269 1161h2M272 1159h2M276 1159h2M280 1159h2" stroke="#121214" stroke-width="2" fill="none"/>
<rect x="286" y="1098" width="20" height="70" fill="#3a5624"/>
<rect x="288" y="1100" width="18" height="30" fill="#6a9e43"/>
<rect x="288" y="1132" width="18" height="36" fill="#6a9e43"/>
<path d="M289 1143h2M292 1141h2M296 1141h6M289 1152h2M292 1150h2M296 1150h6M289 1161h2M292 1159h2M296 1159h6M303 1136h2" stroke="#121214" stroke-width="2" fill="none"/>
<rect x="306" y="1098" width="10" height="70" fill="#3a5624"/>
<rect x="308" y="1100" width="8" height="30" fill="#6a9e43"/>
<rect x="308" y="1132" width="8" height="36" fill="#6a9e43"/>
<path d="M309 1143h2M312 1141h2M309 1152h2M312 1150h2M309 1161h2M312 1159h2" stroke="#121214" stroke-width="2" fill="none"/>
<rect x="68" y="1098" width="2" height="70" fill="#313131"/>
<rect x="110" y="1098" width="2" height="70" fill="#313131"/>
<rect x="130" y="1098" width="2" height="70" fill="#313131"/>
<rect x="188" y="1098" width="2" height="70" fill="#313131"/>
<rect x="228" y="1098" width="2" height="70" fill="#313131"/>
<rect x="306" y="1098" width="2" height="70" fill="#313131"/>
<rect x="410" y="1098" width="4" height="70" fill="#3a5624"/>
<rect x="412" y="1100" width="2" height="30" fill="#6a9e43"/>
<rect x="412" y="1132" width="2" height="36" fill="#6a9e43"/>
<rect x="420" y="1098" width="62" height="70" fill="#3a5624"/>
<rect x="422" y="1100" width="60" height="30" fill="#6a9e43"/>
<rect x="422" y="1132" width="60" height="36" fill="#6a9e43"/>
<rect x="444" y="1132" width="2" height="36" fill="#486b2d"/>
<path d="M431 1141h6M439 1141h2M424 1145h2M428 1145h2M431 1149h6M439 1149h2M424 1151h2M428 1151h2M431 1159h6M439 1159h2M424 1161h2M428 1161h2M443 1135h2M443 1137h2M451 1135h2M455 1135h2M459 1135h2M463 1135h2M447 1137h2M451 1141h2M455 1141h2M459 1141h2M463 1141h2M471 1141h2M475 1141h2M479 1141h2M443 1145h2M447 1145h2M463 1145h2M467 1145h2M471 1149h2M475 1149h2M479 1149h2M451 1151h2M455 1151h2M459 1151h2M463 1151h2M467 1151h2M443 1155h2M447 1155h2M471 1159h2M475 1159h2M479 1159h2M463 1161h2M467 1161h2" stroke="#121214" stroke-width="2" fill="none"/>
<rect x="482" y="1098" width="16" height="32" fill="#6c6c6c"/>
<rect x="482" y="1130" width="16" height="38" fill="#2c2c2c"/>
<path d="M484 1141h2M488 1139h2M492 1139h2M484 1147h2M490 1147h2M486 1153h2M492 1151h2M486 1159h2" stroke="#555" stroke-width="2" fill="none"/>
<rect x="498" y="1098" width="64" height="70" fill="#3a5624"/>
<rect x="500" y="1100" width="62" height="30" fill="#6a9e43"/>
<rect x="500" y="1132" width="62" height="36" fill="#6a9e43"/>
<rect x="522" y="1132" width="2" height="36" fill="#486b2d"/>
<path d="M510 1141h6M518 1141h2M503 1145h2M507 1145h2M501 1149h2M510 1149h6M518 1149h2M503 1151h2M507 1151h2M501 1155h2M510 1159h6M518 1159h2M503 1161h2M507 1161h2M501 1165h2M521 1135h2M521 1137h2M529 1135h2M533 1135h2M537 1135h2M541 1135h2M559 1135h2M525 1137h2M529 1141h2M533 1141h2M537 1141h2M541 1141h2M549 1141h2M553 1141h2M557 1141h2M521 1145h2M525 1145h2M541 1145h2M545 1145h2M549 1149h2M553 1149h2M557 1149h2M529 1151h2M533 1151h2M537 1151h2M541 1151h2M545 1151h2M521 1155h2M525 1155h2M549 1159h2M553 1159h2M557 1159h2M541 1161h2M545 1161h2" stroke="#121214" stroke-width="2" fill="none"/>
<rect x="562" y="1098" width="76" height="70" fill="#3a5624"/>
<rect x="564" y="1100" width="74" height="30" fill="#6a9e43"/>
<rect x="564" y="1132" width="74" height="36" fill="#6a9e43"/>
<rect x="600" y="1132" width="2" height="36" fill="#486b2d"/>
<path d="M565 1137h2M588 1141h6M596 1141h2M565 1145h2M581 1145h2M585 1145h2M569 1149h2M572 1149h6M579 1149h2M588 1149h6M596 1149h2M581 1151h2M585 1151h2M565 1155h2M569 1155h2M572 1155h6M579 1155h2M588 1159h6M596 1159h2M581 1161h2M585 1161h2M569 1165h2M572 1165h6M579 1165h2M600 1135h2M600 1137h2M608 1135h2M612 1135h2M616 1135h2M620 1135h2M604 1137h2M608 1141h2M612 1141h2M616 1141h2M620 1141h2M628 1141h2M632 1141h2M636 1141h2M600 1145h2M604 1145h2M620 1145h2M624 1145h2M628 1149h2M632 1149h2M636 1149h2M608 1151h2M612 1151h2M616 1151h2M620 1151h2M624 1151h2M600 1155h2M604 1155h2M628 1159h2M632 1159h2M636 1159h2M620 1161h2M624 1161h2" stroke="#121214" stroke-width="2" fill="none"/>
<rect x="1290" y="1098" width="152" height="70" fill="#3a5624"/>
<rect x="1292" y="1100" width="150" height="30" fill="#6a9e43"/>
<rect x="1292" y="1132" width="150" height="36" fill="#6a9e43"/>
<rect x="1308" y="1132" width="2" height="36" fill="#486b2d"/>
<rect x="1348" y="1132" width="2" height="36" fill="#486b2d"/>
<rect x="1388" y="1132" width="2" height="36" fill="#486b2d"/>
<rect x="1426" y="1132" width="2" height="36" fill="#486b2d"/>
<path d="M1296 1141h6M1304 1141h2M1293 1145h2M1296 1149h6M1304 1149h2M1293 1151h2M1296 1159h6M1304 1159h2M1293 1161h2M1308 1135h2M1308 1137h2M1316 1135h2M1320 1135h2M1324 1135h2M1328 1135h2M1346 1135h2M1312 1137h2M1348 1137h2M1352 1137h2M1316 1141h2M1320 1141h2M1324 1141h2M1328 1141h2M1336 1141h2M1340 1141h2M1344 1141h2M1375 1141h6M1383 1141h2M1308 1145h2M1312 1145h2M1328 1145h2M1332 1145h2M1348 1145h2M1352 1145h2M1368 1145h2M1372 1145h2M1336 1149h2M1340 1149h2M1344 1149h2M1356 1149h2M1359 1149h6M1366 1149h2M1375 1149h6M1383 1149h2M1316 1151h2M1320 1151h2M1324 1151h2M1328 1151h2M1332 1151h2M1368 1151h2M1372 1151h2M1308 1155h2M1312 1155h2M1348 1155h2M1352 1155h2M1356 1155h2M1359 1155h6M1366 1155h2M1336 1159h2M1340 1159h2M1344 1159h2M1375 1159h6M1383 1159h2M1328 1161h2M1332 1161h2M1368 1161h2M1372 1161h2M1356 1165h2M1359 1165h6M1366 1165h2M1387 1135h2M1387 1137h2M1395 1135h2M1399 1135h2M1403 1135h2M1407 1135h2M1425 1135h2M1391 1137h2M1427 1137h2M1431 1137h2M1395 1141h2M1399 1141h2M1403 1141h2M1407 1141h2M1415 1141h2M1419 1141h2M1423 1141h2M1387 1145h2M1391 1145h2M1407 1145h2M1411 1145h2M1427 1145h2M1431 1145h2M1415 1149h2M1419 1149h2M1423 1149h2M1435 1149h2M1395 1151h2M1399 1151h2M1403 1151h2M1407 1151h2M1411 1151h2M1387 1155h2M1391 1155h2M1427 1155h2M1431 1155h2M1435 1155h2M1415 1159h2M1419 1159h2M1423 1159h2M1407 1161h2M1411 1161h2M1435 1165h2" stroke="#121214" stroke-width="2" fill="none"/>
<path d="M1369 1100v6M1369 1162v6" stroke="#15151a" stroke-width="2" fill="none"/>
<rect x="1446" y="1098" width="158" height="70" fill="#3a5624"/>
<rect x="1448" y="1100" width="156" height="30" fill="#6a9e43"/>
<rect x="1448" y="1132" width="156" height="36" fill="#6a9e43"/>
<rect x="1466" y="1132" width="2" height="36" fill="#486b2d"/>
<rect x="1506" y="1132" width="2" height="36" fill="#486b2d"/>
<rect x="1544" y="1132" width="2" height="36" fill="#486b2d"/>
<rect x="1584" y="1132" width="2" height="36" fill="#486b2d"/>
<path d="M1454 1141h6M1462 1141h2M1451 1145h2M1454 1149h6M1462 1149h2M1451 1151h2M1454 1159h6M1462 1159h2M1451 1161h2M1465 1135h2M1465 1137h2M1473 1135h2M1477 1135h2M1481 1135h2M1485 1135h2M1503 1135h2M1469 1137h2M1505 1137h2M1509 1137h2M1473 1141h2M1477 1141h2M1481 1141h2M1485 1141h2M1493 1141h2M1497 1141h2M1501 1141h2M1532 1141h6M1540 1141h2M1465 1145h2M1469 1145h2M1485 1145h2M1489 1145h2M1505 1145h2M1509 1145h2M1525 1145h2M1529 1145h2M1493 1149h2M1497 1149h2M1501 1149h2M1513 1149h2M1516 1149h6M1523 1149h2M1532 1149h6M1540 1149h2M1473 1151h2M1477 1151h2M1481 1151h2M1485 1151h2M1489 1151h2M1525 1151h2M1529 1151h2M1465 1155h2M1469 1155h2M1505 1155h2M1509 1155h2M1513 1155h2M1516 1155h6M1523 1155h2M1493 1159h2M1497 1159h2M1501 1159h2M1532 1159h6M1540 1159h2M1485 1161h2M1489 1161h2M1525 1161h2M1529 1161h2M1513 1165h2M1516 1165h6M1523 1165h2M1544 1135h2M1544 1137h2M1552 1135h2M1556 1135h2M1560 1135h2M1564 1135h2M1582 1135h2M1548 1137h2M1584 1137h2M1588 1137h2M1552 1141h2M1556 1141h2M1560 1141h2M1564 1141h2M1572 1141h2M1576 1141h2M1580 1141h2M1544 1145h2M1548 1145h2M1564 1145h2M1568 1145h2M1584 1145h2M1588 1145h2M1572 1149h2M1576 1149h2M1580 1149h2M1592 1149h2M1595 1149h6M1602 1149h2M1552 1151h2M1556 1151h2M1560 1151h2M1564 1151h2M1568 1151h2M1544 1155h2M1548 1155h2M1584 1155h2M1588 1155h2M1592 1155h2M1595 1155h6M1602 1155h2M1572 1159h2M1576 1159h2M1580 1159h2M1564 1161h2M1568 1161h2M1592 1165h2M1595 1165h6M1602 1165h2" stroke="#121214" stroke-width="2" fill="none"/>
<path d="M1527 1100v6M1527 1162v6" stroke="#15151a" stroke-width="2" fill="none"/>
<rect x="168" y="1172" width="118" height="70" fill="#8b8436"/>
<rect x="170" y="1174" width="116" height="30" fill="#fdf163"/>
<rect x="170" y="1206" width="116" height="36" fill="#fdf163"/>
<rect x="208" y="1206" width="2" height="36" fill="#aca343"/>
<rect x="248" y="1206" width="2" height="36" fill="#aca343"/>
<path d="M177 1225h11M197 1225h11M170 1228h6M189 1228h6M170 1232h6M178 1232h10M189 1232h6M198 1232h10M178 1237h10M197 1237h11M170 1240h6M189 1240h6M216 1225h11M236 1225h11M209 1228h6M228 1228h6M209 1232h6M217 1232h10M228 1232h6M237 1232h10M217 1237h10M236 1237h11M209 1240h6M228 1240h6M256 1225h11M249 1228h6M268 1228h6M249 1232h6M257 1232h10M268 1232h6M257 1237h10M249 1240h6M268 1240h6" stroke="#8d8533" stroke-width="2" fill="none"/>
<path d="M189 1174v6M189 1236v6M209 1174v6M209 1236v6M229 1174v6M229 1236v6M249 1174v6M249 1236v6M267 1174v6M267 1236v6" stroke="#15151a" stroke-width="2" fill="none"/>
<rect x="286" y="1172" width="30" height="70" fill="#8b8436"/>
<rect x="288" y="1174" width="28" height="30" fill="#fdf163"/>
<rect x="288" y="1206" width="28" height="36" fill="#fdf163"/>
<path d="M295 1225h9M308 1223h8M288 1228h6M288 1232h6M296 1232h10M296 1237h10M308 1237h6M288 1240h6" stroke="#8d8533" stroke-width="2" fill="none"/>
<rect x="954" y="1172" width="118" height="70" fill="#8b8436"/>
<rect x="956" y="1174" width="116" height="30" fill="#fdf163"/>
<rect x="956" y="1206" width="116" height="36" fill="#fdf163"/>
<rect x="994" y="1206" width="2" height="36" fill="#aca343"/>
<rect x="1034" y="1206" width="2" height="36" fill="#aca343"/>
<path d="M963 1225h11M983 1225h11M956 1228h6M975 1228h6M956 1232h6M964 1232h10M975 1232h6M984 1232h10M964 1237h10M983 1237h11M956 1240h6M975 1240h6M1002 1225h11M1022 1225h11M995 1228h6M1014 1228h6M995 1232h6M1003 1232h10M1014 1232h6M1023 1232h10M1003 1237h10M1022 1237h11M995 1240h6M1014 1240h6M1042 1225h11M1035 1228h6M1054 1228h6M1035 1232h6M1043 1232h10M1054 1232h6M1043 1237h10M1035 1240h6M1054 1240h6" stroke="#8d8533" stroke-width="2" fill="none"/>
<path d="M975 1174v6M975 1236v6M995 1174v6M995 1236v6M1015 1174v6M1015 1236v6M1035 1174v6M1035 1236v6M1055 1174v6M1055 1236v6" stroke="#15151a" stroke-width="2" fill="none"/>
<rect x="1072" y="1172" width="178" height="70" fill="#8b8436"/>
<rect x="1074" y="1174" width="176" height="30" fill="#fdf163"/>
<rect x="1074" y="1206" width="176" height="36" fill="#fdf163"/>
<rect x="1112" y="1206" width="2" height="36" fill="#aca343"/>
<rect x="1152" y="1206" width="2" height="36" fill="#aca343"/>
<rect x="1190" y="1206" width="2" height="36" fill="#aca343"/>
<rect x="1230" y="1206" width="2" height="36" fill="#aca343"/>
<path d="M1081 1225h9M1094 1223h8M1103 1220h8M1074 1228h6M1096 1228h8M1074 1232h6M1082 1232h10M1105 1232h6M1082 1237h10M1094 1237h6M1074 1240h6M1102 1241h9M1120 1225h9M1133 1223h8M1142 1220h8M1113 1228h6M1135 1228h8M1113 1232h6M1121 1232h10M1144 1232h6M1121 1237h10M1133 1237h6M1113 1240h6M1141 1241h9M1160 1225h9M1173 1223h8M1182 1220h8M1153 1228h6M1175 1228h8M1153 1232h6M1161 1232h10M1184 1232h6M1161 1237h10M1173 1237h6M1153 1240h6M1181 1241h9M1199 1225h9M1212 1223h8M1221 1220h8M1192 1228h6M1214 1228h8M1192 1232h6M1200 1232h10M1223 1232h6M1200 1237h10M1212 1237h6M1192 1240h6M1220 1241h9M1238 1225h9M1231 1228h6M1231 1232h6M1239 1232h10M1239 1237h10M1231 1240h6" stroke="#8d8533" stroke-width="2" fill="none"/>
<path d="M1113 1174v6M1113 1236v6M1191 1174v6M1191 1236v6" stroke="#15151a" stroke-width="2" fill="none"/>
<rect x="1604" y="1172" width="40" height="70" fill="#8b8436"/>
<rect x="1606" y="1174" width="38" height="30" fill="#fdf163"/>
<rect x="1606" y="1206" width="38" height="36" fill="#fdf163"/>
<rect x="1624" y="1206" width="2" height="36" fill="#aca343"/>
<path d="M1613 1225h9M1626 1223h8M1635 1220h8M1606 1228h6M1628 1228h8M1606 1232h6M1614 1232h10M1637 1232h6M1614 1237h10M1626 1237h6M1606 1240h6M1634 1241h9" stroke="#8d8533" stroke-width="2" fill="none"/>
<rect x="1644" y="1172" width="38" height="70" fill="#8b8436"/>
<rect x="1646" y="1174" width="36" height="30" fill="#fdf163"/>
<rect x="1646" y="1206" width="36" height="36" fill="#fdf163"/>
<rect x="1662" y="1206" width="2" height="36" fill="#aca343"/>
<path d="M1653 1225h9M1666 1223h8M1646 1228h6M1668 1228h8M1646 1232h6M1654 1232h10M1654 1237h10M1666 1237h6M1646 1240h6" stroke="#8d8533" stroke-width="2" fill="none"/>
<rect x="1682" y="1172" width="40" height="70" fill="#8b8436"/>
<rect x="1684" y="1174" width="38" height="30" fill="#fdf163"/>
<rect x="1684" y="1206" width="38" height="36" fill="#fdf163"/>
<rect x="1702" y="1206" width="2" height="36" fill="#aca343"/>
<path d="M1691 1225h9M1704 1223h8M1713 1220h8M1684 1228h6M1706 1228h8M1684 1232h6M1692 1232h10M1715 1232h6M1692 1237h10M1704 1237h6M1684 1240h6M1712 1241h9" stroke="#8d8533" stroke-width="2" fill="none"/>
<rect x="1722" y="1172" width="40" height="70" fill="#8b8436"/>
<rect x="1724" y="1174" width="38" height="30" fill="#fdf163"/>
<rect x="1724" y="1206" width="38" height="36" fill="#fdf163"/>
<rect x="1742" y="1206" width="2" height="36" fill="#aca343"/>
<path d="M1731 1225h9M1744 1223h8M1753 1220h8M1724 1228h6M1746 1228h8M1724 1232h6M1732 1232h10M1755 1232h6M1732 1237h10M1744 1237h6M1724 1240h6M1752 1241h9" stroke="#8d8533" stroke-width="2" fill="none"/>
<rect x="1762" y="1172" width="38" height="70" fill="#8b8436"/>
<rect x="1764" y="1174" width="36" height="30" fill="#fdf163"/>
<rect x="1764" y="1206" width="36" height="36" fill="#fdf163"/>
<rect x="1780" y="1206" width="2" height="36" fill="#aca343"/>
<path d="M1771 1225h9M1784 1223h8M1764 1228h6M1786 1228h8M1764 1232h6M1772 1232h10M1772 1237h10M1784 1237h6M1764 1240h6" stroke="#8d8533" stroke-width="2" fill="none"/>
<rect x="1800" y="1172" width="40" height="70" fill="#8b8436"/>
<rect x="1802" y="1174" width="38" height="30" fill="#fdf163"/>
<rect x="1802" y="1206" width="38" height="36" fill="#fdf163"/>
<rect x="1820" y="1206" width="2" height="36" fill="#aca343"/>
<path d="M1809 1225h9M1822 1223h8M1831 1220h8M1802 1228h6M1824 1228h8M1802 1232h6M1810 1232h10M1833 1232h6M1810 1237h10M1822 1237h6M1802 1240h6M1830 1241h9" stroke="#8d8533" stroke-width="2" fill="none"/>
<rect x="1840" y="1172" width="78" height="70" fill="#8b8436"/>
<rect x="1842" y="1174" width="76" height="30" fill="#fdf163"/>
<rect x="1842" y="1206" width="76" height="36" fill="#fdf163"/>
<rect x="1860" y="1206" width="2" height="36" fill="#aca343"/>
<rect x="1898" y="1206" width="2" height="36" fill="#aca343"/>
<path d="M1849 1225h9M1862 1223h8M1871 1220h8M1842 1228h6M1864 1228h8M1842 1232h6M1850 1232h10M1873 1232h6M1850 1237h10M1862 1237h6M1842 1240h6M1870 1241h9M1888 1225h9M1901 1223h8M1881 1228h6M1903 1228h8M1881 1232h6M1889 1232h10M1889 1237h10M1901 1237h6M1881 1240h6" stroke="#8d8533" stroke-width="2" fill="none"/>
<rect x="640" y="1246" width="394" height="70" fill="#675d8f"/>
<rect x="642" y="1248" width="392" height="30" fill="#ab9ae1"/>
<rect x="642" y="1280" width="392" height="36" fill="#ab9ae1"/>
<rect x="680" y="1280" width="2" height="36" fill="#746899"/>
<rect x="718" y="1280" width="2" height="36" fill="#746899"/>
<rect x="758" y="1280" width="2" height="36" fill="#746899"/>
<rect x="798" y="1280" width="2" height="36" fill="#746899"/>
<rect x="836" y="1280" width="2" height="36" fill="#746899"/>
<rect x="876" y="1280" width="2" height="36" fill="#746899"/>
<rect x="916" y="1280" width="2" height="36" fill="#746899"/>
<rect x="954" y="1280" width="2" height="36" fill="#746899"/>
<rect x="994" y="1280" width="2" height="36" fill="#746899"/>
<path class="aa" d="M940 1280Q970 1316 1010 1316L1034 1316L1034 1280Z" fill="#8f80c2" opacity=".85"/>
<path class="aa" d="M642 1288.1L644 1288.1L646 1287.85L648 1287.82L650 1287.2L652 1287.51L654 1287.15L656 1285.95L658 1286.49L660 1286.12L662 1286.66L664 1287.14L666 1285.85L668 1286.2L670 1286.02L672 1286.24L674 1287.21L676 1286.08L678 1286.13L680 1286.19L682 1286.07L684 1287.34L686 1286.57L688 1286.27L690 1286.53L692 1286.1L694 1287.4L696 1287.12L698 1286.47L700 1286.84L702 1286.2L704 1287.25L706 1287.51L708 1286.59L710 1286.95L712 1286.21L714 1286.81L716 1287.54L718 1286.52L720 1286.74L722 1286.06L724 1286.1L726 1287.17L728 1286.25L730 1286.25L732 1285.77L734 1285.28L736 1286.5L738 1285.9L740 1285.67L742 1285.47L744 1284.58L746 1285.75L748 1285.61L750 1285.2L752 1285.31L754 1284.23L756 1285.15L758 1285.55L760 1285.04L762 1285.43L764 1284.38L766 1284.88L768 1285.78L770 1285.29L772 1285.83L774 1285.02L776 1285L778 1286.23L780 1285.87L782 1286.42L784 1285.97L786 1285.43L788 1286.75L790 1286.6L792 1287.01L794 1286.97L796 1286L798 1287.13L800 1287.24L802 1287.41L804 1287.75L806 1286.51L808 1287.22L810 1287.6L812 1287.5L814 1287.8L816 1286.85L818 1286.98L820 1287.59L822 1287.27L824 1287.8L826 1286.98L828 1286.52L830 1287.27L832 1286.85L834 1287.6L836 1286.99L838 1286.04L840 1286.8L842 1286.43L844 1287.05L846 1287L848 1285.74L850 1286.38L852 1286.19L854 1286.58L856 1287.1L858 1285.78L860 1286.15L862 1286.2L864 1286.33L866 1287.29L868 1286.16L870 1286.15L872 1286.45L874 1286.29L876 1287.49L878 1286.74L880 1286.31L882 1286.76L884 1286.36L886 1287.54L888 1287.29L890 1286.47L892 1286.95L894 1286.4L896 1287.32L898 1287.59L900 1286.5L902 1286.87L904 1286.28L906 1286.76L908 1287.5L910 1286.34L912 1286.48L914 1285.99L916 1285.95L918 1287.03L920 1286.04L922 1285.89L924 1285.6L926 1285.1L928 1286.33L930 1285.72L932 1285.31L934 1285.28L936 1284.72L938 1286.02L940 1286.17L942 1285.91L944 1286.3L946 1285.92L948 1286.73L950 1287.23L952 1287.11L954 1287.51L956 1287.42L958 1287.82L960 1288.1L962 1288.1L964 1288.1L966 1288.1L968 1288.1L970 1288.1L972 1288.1L974 1288.1L976 1288.1L978 1288.1L980 1288.1L982 1288.1L984 1288.1L986 1288.1L988 1288.1L990 1288.1L992 1288.1L994 1288.1L996 1288.1L998 1288.1L1000 1288.1L1002 1288.1L1004 1288.1L1006 1288.1L1008 1288.1L1010 1288.1L1012 1288.1L1014 1288.1L1016 1288.1L1018 1288.1L1020 1288.1L1022 1288.1L1024 1288.1L1026 1288.1L1028 1288.1L1030 1288.1L1032 1288.1L1034 1288.1L1034 1289.9L1032 1289.9L1030 1289.9L1028 1289.9L1026 1289.9L1024 1289.9L1022 1289.9L1020 1289.9L1018 1289.9L1016 1289.9L1014 1289.9L1012 1289.9L1010 1289.9L1008 1289.9L1006 1289.9L1004 1289.9L1002 1289.9L1000 1289.9L998 1289.9L996 1289.9L994 1289.9L992 1289.9L990 1289.9L988 1289.9L986 1289.9L984 1289.9L982 1289.9L980 1289.9L978 1289.9L976 1289.9L974 1289.9L972 1289.9L970 1289.9L968 1289.9L966 1289.9L964 1289.9L962 1289.9L960 1289.9L958 1290.18L956 1290.58L954 1290.49L952 1290.89L950 1290.77L948 1291.27L946 1292.08L944 1291.7L942 1292.09L940 1291.83L938 1291.98L936 1293.28L934 1292.72L932 1292.69L930 1292.28L928 1291.67L926 1292.9L924 1292.4L922 1292.11L920 1291.96L918 1290.97L916 1292.05L914 1292.01L912 1291.52L910 1291.66L908 1290.5L906 1291.24L904 1291.72L902 1291.13L900 1291.5L898 1290.41L896 1290.68L894 1291.6L892 1291.05L890 1291.53L888 1290.71L886 1290.46L884 1291.64L882 1291.24L880 1291.69L878 1291.26L876 1290.51L874 1291.71L872 1291.55L870 1291.85L868 1291.84L866 1290.71L864 1291.67L862 1291.8L860 1291.85L858 1292.22L856 1290.9L854 1291.42L852 1291.81L850 1291.62L848 1292.26L846 1291L844 1290.95L842 1291.57L840 1291.2L838 1291.96L836 1291.01L834 1290.4L832 1291.15L830 1290.73L828 1291.48L826 1291.02L824 1290.2L822 1290.73L820 1290.41L818 1291.02L816 1291.15L814 1290.2L812 1290.5L810 1290.4L808 1290.78L806 1291.49L804 1290.25L802 1290.59L800 1290.76L798 1290.87L796 1292L794 1291.03L792 1290.99L790 1291.4L788 1291.25L786 1292.57L784 1292.03L782 1291.58L780 1292.13L778 1291.77L776 1293L774 1292.98L772 1292.17L770 1292.71L768 1292.22L766 1293.12L764 1293.62L762 1292.57L760 1292.96L758 1292.45L756 1292.85L754 1293.77L752 1292.69L750 1292.8L748 1292.39L746 1292.25L744 1293.42L742 1292.53L740 1292.33L738 1292.1L736 1291.5L734 1292.72L732 1292.23L730 1291.75L728 1291.75L726 1290.83L724 1291.9L722 1291.94L720 1291.26L718 1291.48L716 1290.46L714 1291.19L712 1291.79L710 1291.05L708 1291.41L706 1290.49L704 1290.75L702 1291.8L700 1291.16L698 1291.53L696 1290.88L694 1290.6L692 1291.9L690 1291.47L688 1291.73L686 1291.43L684 1290.66L682 1291.93L680 1291.81L678 1291.87L676 1291.92L674 1290.79L672 1291.76L670 1291.98L668 1291.8L666 1292.15L664 1290.86L662 1291.34L660 1291.88L658 1291.51L656 1292.05L654 1290.85L652 1290.49L650 1290.8L648 1290.18L646 1290.15L644 1289.9L642 1289.9Z" fill="#1d1d21"/>
<path class="aa" d="M642 1305.84L644 1305.55L646 1305.17L648 1305.67L650 1304.37L652 1304.16L654 1304.44L656 1304.12L658 1305.21L660 1304.45L662 1303.84L664 1304.3L666 1303.84L668 1304.93L670 1304.76L672 1303.85L674 1304.38L676 1303.89L678 1304.77L680 1305.21L682 1304.14L684 1304.58L686 1304.17L688 1304.66L690 1305.6L692 1304.56L694 1304.76L696 1304.5L698 1304.5L700 1305.74L702 1304.9L704 1304.77L706 1304.68L708 1304.2L710 1305.48L712 1305L714 1304.53L716 1304.59L718 1303.74L720 1304.83L722 1304.82L724 1304.07L726 1304.25L728 1303.23L730 1303.93L732 1304.43L734 1303.55L736 1303.8L738 1302.84L740 1303.04L742 1303.98L744 1303.19L746 1303.43L748 1302.72L750 1302.42L752 1303.67L754 1303.14L756 1303.31L758 1303L760 1302.28L762 1303.59L764 1303.48L766 1303.53L768 1303.64L770 1302.64L772 1303.77L774 1304.11L776 1304.01L778 1304.48L780 1303.39L782 1304.1L784 1304.84L786 1304.61L788 1305.29L790 1304.3L792 1304.42L794 1305.43L796 1305.11L798 1305.8L800 1305.1L802 1304.6L804 1305.67L806 1305.37L808 1305.8L810 1305.6L812 1304.58L814 1305.51L816 1305.32L818 1305.67L820 1305.76L822 1304.41L824 1305.03L826 1305.05L828 1305.12L830 1305.64L832 1304.23L834 1304.43L836 1304.71L838 1304.54L840 1305.38L842 1304.21L844 1303.94L846 1304.45L848 1304.13L850 1305.13L852 1304.43L854 1303.74L856 1304.39L858 1304.01L860 1304.98L862 1304.88L864 1303.86L866 1304.51L868 1304.18L870 1304.92L872 1305.4L874 1304.22L876 1304.68L878 1304.47L880 1304.83L882 1305.78L884 1304.64L886 1304.76L888 1304.7L890 1304.62L892 1305.8L894 1304.92L896 1304.63L898 1304.71L900 1304.21L902 1305.42L904 1304.94L906 1304.25L908 1304.44L910 1303.66L912 1304.66L914 1304.69L916 1303.74L918 1303.97L920 1303.1L922 1303.72L924 1304.29L926 1303.27L928 1303.49L930 1302.85L932 1303.25L934 1304.37L936 1303.86L938 1304.2L940 1304.09L942 1304.16L944 1305.17L946 1305.1L948 1305.33L950 1305.5L952 1305.51L954 1306.1L956 1306.1L958 1306.1L960 1306.1L962 1306.1L964 1306.1L966 1306.1L968 1306.1L970 1306.1L972 1306.1L974 1306.1L976 1306.1L978 1306.1L980 1306.1L982 1306.1L984 1306.1L986 1306.1L988 1306.1L990 1306.1L992 1306.1L994 1306.1L996 1306.1L998 1306.1L1000 1306.1L1002 1306.1L1004 1306.1L1006 1306.1L1008 1306.1L1010 1306.1L1012 1306.1L1014 1306.1L1016 1306.1L1018 1306.1L1020 1306.1L1022 1306.1L1024 1306.1L1026 1306.1L1028 1306.1L1030 1306.1L1032 1306.1L1034 1306.1L1034 1307.9L1032 1307.9L1030 1307.9L1028 1307.9L1026 1307.9L1024 1307.9L1022 1307.9L1020 1307.9L1018 1307.9L1016 1307.9L1014 1307.9L1012 1307.9L1010 1307.9L1008 1307.9L1006 1307.9L1004 1307.9L1002 1307.9L1000 1307.9L998 1307.9L996 1307.9L994 1307.9L992 1307.9L990 1307.9L988 1307.9L986 1307.9L984 1307.9L982 1307.9L980 1307.9L978 1307.9L976 1307.9L974 1307.9L972 1307.9L970 1307.9L968 1307.9L966 1307.9L964 1307.9L962 1307.9L960 1307.9L958 1307.9L956 1307.9L954 1307.9L952 1308.49L950 1308.5L948 1308.67L946 1308.9L944 1308.83L942 1309.84L940 1309.91L938 1309.8L936 1310.14L934 1309.63L932 1310.75L930 1311.15L928 1310.51L926 1310.73L924 1309.71L922 1310.28L920 1310.9L918 1310.03L916 1310.26L914 1309.31L912 1309.34L910 1310.34L908 1309.56L906 1309.75L904 1309.06L902 1308.58L900 1309.79L898 1309.29L896 1309.37L894 1309.08L892 1308.2L890 1309.38L888 1309.3L886 1309.24L884 1309.36L882 1308.22L880 1309.17L878 1309.53L876 1309.32L874 1309.78L872 1308.6L870 1309.08L868 1309.82L866 1309.49L864 1310.14L862 1309.12L860 1309.02L858 1309.99L856 1309.61L854 1310.26L852 1309.57L850 1308.87L848 1309.87L846 1309.55L844 1310.06L842 1309.79L840 1308.62L838 1309.46L836 1309.29L834 1309.57L832 1309.77L830 1308.36L828 1308.88L826 1308.95L824 1308.97L822 1309.59L820 1308.24L818 1308.33L816 1308.68L814 1308.49L812 1309.42L810 1308.4L808 1308.2L806 1308.63L804 1308.33L802 1309.4L800 1308.9L798 1308.2L796 1308.89L794 1308.57L792 1309.58L790 1309.7L788 1308.71L786 1309.39L784 1309.16L782 1309.9L780 1310.61L778 1309.52L776 1309.99L774 1309.89L772 1310.23L770 1311.36L768 1310.36L766 1310.47L764 1310.52L762 1310.41L760 1311.72L758 1311L756 1310.69L754 1310.86L752 1310.33L750 1311.58L748 1311.28L746 1310.57L744 1310.81L742 1310.02L740 1310.96L738 1311.16L736 1310.2L734 1310.45L732 1309.57L730 1310.07L728 1310.77L726 1309.75L724 1309.93L722 1309.18L720 1309.17L718 1310.26L716 1309.41L714 1309.47L712 1309L710 1308.52L708 1309.8L706 1309.32L704 1309.23L702 1309.1L700 1308.26L698 1309.5L696 1309.5L694 1309.24L692 1309.44L690 1308.4L688 1309.34L686 1309.83L684 1309.42L682 1309.86L680 1308.79L678 1309.23L676 1310.11L674 1309.62L672 1310.15L670 1309.24L668 1309.07L666 1310.16L664 1309.7L662 1310.16L660 1309.55L658 1308.79L656 1309.88L654 1309.56L652 1309.84L650 1309.63L648 1308.33L646 1308.83L644 1308.45L642 1308.16Z" fill="#1d1d21"/>
<rect x="1604" y="1246" width="392" height="70" fill="#675d8f"/>
<rect x="1606" y="1248" width="390" height="30" fill="#ab9ae1"/>
<rect x="1606" y="1280" width="390" height="36" fill="#ab9ae1"/>
<rect x="1624" y="1280" width="2" height="36" fill="#746899"/>
<rect x="1662" y="1280" width="2" height="36" fill="#746899"/>
<rect x="1702" y="1280" width="2" height="36" fill="#746899"/>
<rect x="1742" y="1280" width="2" height="36" fill="#746899"/>
<rect x="1780" y="1280" width="2" height="36" fill="#746899"/>
<rect x="1820" y="1280" width="2" height="36" fill="#746899"/>
<rect x="1860" y="1280" width="2" height="36" fill="#746899"/>
<rect x="1898" y="1280" width="2" height="36" fill="#746899"/>
<rect x="1938" y="1280" width="2" height="36" fill="#746899"/>
<rect x="1978" y="1280" width="2" height="36" fill="#746899"/>
<path class="aa" d="M1898 1280Q1928 1316 1968 1316L1996 1316L1996 1280Z" fill="#8f80c2" opacity=".85"/>
<path class="aa" d="M1606 1288.1L1608 1288.1L1610 1287.77L1612 1287.56L1614 1286.74L1616 1287.16L1618 1287.08L1620 1286.12L1622 1286.46L1624 1285.73L1626 1286.31L1628 1287.02L1630 1285.97L1632 1286.17L1634 1285.52L1636 1285.58L1638 1286.66L1640 1285.75L1642 1285.76L1644 1285.33L1646 1284.9L1648 1286.17L1650 1285.61L1652 1285.42L1654 1285.31L1656 1284.51L1658 1285.76L1660 1285.71L1662 1285.35L1664 1285.56L1666 1284.58L1668 1285.59L1670 1286.09L1672 1285.63L1674 1286.09L1676 1285.14L1678 1285.71L1680 1286.68L1682 1286.22L1684 1286.79L1686 1286.03L1688 1286.05L1690 1287.31L1692 1286.94L1694 1287.46L1696 1287.01L1698 1286.46L1700 1287.76L1702 1287.57L1704 1287.8L1706 1287.8L1708 1286.77L1710 1287.8L1712 1287.8L1714 1287.8L1716 1287.8L1718 1286.89L1720 1287.52L1722 1287.8L1724 1287.63L1726 1287.8L1728 1286.81L1730 1286.88L1732 1287.44L1734 1287.05L1736 1287.72L1738 1286.63L1740 1286.13L1742 1286.87L1744 1286.42L1746 1287.12L1748 1286.5L1750 1285.53L1752 1286.31L1754 1285.96L1756 1286.57L1758 1286.52L1760 1285.28L1762 1285.94L1764 1285.79L1766 1286.2L1768 1286.72L1770 1285.42L1772 1285.82L1774 1285.92L1776 1286.04L1778 1287.01L1780 1285.88L1782 1285.88L1784 1286.2L1786 1286.04L1788 1287.22L1790 1286.45L1792 1286L1794 1286.45L1796 1286.04L1798 1287.19L1800 1286.9L1802 1286.04L1804 1286.51L1806 1285.95L1808 1286.82L1810 1287.07L1812 1285.94L1814 1286.29L1816 1285.72L1818 1286.17L1820 1286.91L1822 1285.73L1824 1285.87L1826 1285.42L1828 1285.41L1830 1286.51L1832 1285.54L1834 1285.43L1836 1285.21L1838 1284.78L1840 1286.07L1842 1285.52L1844 1285.17L1846 1285.24L1848 1284.52L1850 1285.77L1852 1285.79L1854 1285.25L1856 1285.57L1858 1284.73L1860 1285.72L1862 1286.33L1864 1285.71L1866 1286.18L1868 1285.39L1870 1285.93L1872 1287.02L1874 1286.43L1876 1286.9L1878 1286.31L1880 1286.28L1882 1287.64L1884 1287.2L1886 1287.53L1888 1287.21L1890 1286.62L1892 1287.8L1894 1287.85L1896 1287.94L1898 1288.01L1900 1287.32L1902 1288.1L1904 1288.1L1906 1288.1L1908 1288.1L1910 1287.95L1912 1288.1L1914 1288.1L1916 1288.1L1918 1288.1L1920 1288.1L1922 1288.1L1924 1288.1L1926 1288.1L1928 1288.1L1930 1288.1L1932 1288.1L1934 1288.1L1936 1288.1L1938 1288.1L1940 1288.1L1942 1288.1L1944 1288.1L1946 1288.1L1948 1288.1L1950 1288.1L1952 1288.1L1954 1288.1L1956 1288.1L1958 1288.1L1960 1288.1L1962 1288.1L1964 1288.1L1966 1288.1L1968 1288.1L1970 1288.1L1972 1288.1L1974 1288.1L1976 1288.1L1978 1288.1L1980 1288.1L1982 1288.1L1984 1288.1L1986 1288.1L1988 1288.1L1990 1288.1L1992 1288.1L1994 1288.1L1996 1288.1L1996 1289.9L1994 1289.9L1992 1289.9L1990 1289.9L1988 1289.9L1986 1289.9L1984 1289.9L1982 1289.9L1980 1289.9L1978 1289.9L1976 1289.9L1974 1289.9L1972 1289.9L1970 1289.9L1968 1289.9L1966 1289.9L1964 1289.9L1962 1289.9L1960 1289.9L1958 1289.9L1956 1289.9L1954 1289.9L1952 1289.9L1950 1289.9L1948 1289.9L1946 1289.9L1944 1289.9L1942 1289.9L1940 1289.9L1938 1289.9L1936 1289.9L1934 1289.9L1932 1289.9L1930 1289.9L1928 1289.9L1926 1289.9L1924 1289.9L1922 1289.9L1920 1289.9L1918 1289.9L1916 1289.9L1914 1289.9L1912 1289.9L1910 1290.05L1908 1289.9L1906 1289.9L1904 1289.9L1902 1289.9L1900 1290.68L1898 1289.99L1896 1290.06L1894 1290.15L1892 1290.2L1890 1291.38L1888 1290.79L1886 1290.47L1884 1290.8L1882 1290.36L1880 1291.72L1878 1291.69L1876 1291.1L1874 1291.57L1872 1290.98L1870 1292.07L1868 1292.61L1866 1291.82L1864 1292.29L1862 1291.67L1860 1292.28L1858 1293.27L1856 1292.43L1854 1292.75L1852 1292.21L1850 1292.23L1848 1293.48L1846 1292.76L1844 1292.83L1842 1292.48L1840 1291.93L1838 1293.22L1836 1292.79L1834 1292.57L1832 1292.46L1830 1291.49L1828 1292.59L1826 1292.58L1824 1292.13L1822 1292.27L1820 1291.09L1818 1291.83L1816 1292.28L1814 1291.71L1812 1292.06L1810 1290.93L1808 1291.18L1806 1292.05L1804 1291.49L1802 1291.96L1800 1291.1L1798 1290.81L1796 1291.96L1794 1291.55L1792 1292L1790 1291.55L1788 1290.78L1786 1291.96L1784 1291.8L1782 1292.12L1780 1292.12L1778 1290.99L1776 1291.96L1774 1292.08L1772 1292.18L1770 1292.58L1768 1291.28L1766 1291.8L1764 1292.21L1762 1292.06L1760 1292.72L1758 1291.48L1756 1291.43L1754 1292.04L1752 1291.69L1750 1292.47L1748 1291.5L1746 1290.88L1744 1291.58L1742 1291.13L1740 1291.87L1738 1291.37L1736 1290.28L1734 1290.95L1732 1290.56L1730 1291.12L1728 1291.19L1726 1290.2L1724 1290.37L1722 1290.2L1720 1290.48L1718 1291.11L1716 1290.2L1714 1290.2L1712 1290.2L1710 1290.2L1708 1291.23L1706 1290.2L1704 1290.2L1702 1290.43L1700 1290.24L1698 1291.54L1696 1290.99L1694 1290.54L1692 1291.06L1690 1290.69L1688 1291.95L1686 1291.97L1684 1291.21L1682 1291.78L1680 1291.32L1678 1292.29L1676 1292.86L1674 1291.91L1672 1292.37L1670 1291.91L1668 1292.41L1666 1293.42L1664 1292.44L1662 1292.65L1660 1292.29L1658 1292.24L1656 1293.49L1654 1292.69L1652 1292.58L1650 1292.39L1648 1291.83L1646 1293.1L1644 1292.67L1642 1292.24L1640 1292.25L1638 1291.34L1636 1292.42L1634 1292.48L1632 1291.83L1630 1292.03L1628 1290.98L1626 1291.69L1624 1292.27L1622 1291.54L1620 1291.88L1618 1290.92L1616 1290.84L1614 1291.26L1612 1290.44L1610 1290.23L1608 1289.9L1606 1289.9Z" fill="#1d1d21"/>
<path class="aa" d="M1606 1305.7L1608 1305.16L1610 1304.74L1612 1305.45L1614 1304.45L1616 1304.29L1618 1304.19L1620 1303.7L1622 1304.97L1624 1304.47L1626 1303.96L1628 1304.04L1630 1303.21L1632 1304.31L1634 1304.32L1636 1303.56L1638 1303.78L1640 1302.83L1642 1303.57L1644 1304.13L1646 1303.29L1648 1303.6L1650 1302.73L1652 1303.01L1654 1304.04L1656 1303.31L1658 1303.62L1660 1303.02L1662 1302.82L1664 1304.16L1666 1303.71L1668 1303.93L1670 1303.71L1672 1303.07L1674 1304.46L1676 1304.4L1678 1304.47L1680 1304.63L1682 1303.68L1684 1304.84L1686 1305.19L1688 1305.07L1690 1305.53L1692 1304.43L1694 1305.12L1696 1305.8L1698 1305.54L1700 1305.8L1702 1305.1L1704 1305.17L1706 1305.8L1708 1305.71L1710 1305.8L1712 1305.51L1714 1304.94L1716 1305.8L1718 1305.55L1720 1305.8L1722 1305.6L1724 1304.5L1726 1305.39L1728 1305.14L1730 1305.4L1732 1305.43L1734 1304.03L1736 1304.63L1738 1304.64L1740 1304.66L1742 1305.15L1744 1303.73L1746 1303.93L1748 1304.23L1750 1304.05L1752 1304.89L1754 1303.74L1756 1303.49L1758 1304.04L1760 1303.74L1762 1304.75L1764 1304.07L1766 1303.39L1768 1304.08L1770 1303.73L1772 1304.7L1774 1304.6L1776 1303.58L1778 1304.25L1780 1303.94L1782 1304.66L1784 1305.12L1786 1303.92L1788 1304.37L1790 1304.17L1792 1304.5L1794 1305.4L1796 1304.23L1798 1304.32L1800 1304.26L1802 1304.15L1804 1305.31L1806 1304.37L1808 1304.05L1810 1304.14L1812 1303.64L1814 1304.83L1816 1304.33L1818 1303.64L1820 1303.85L1822 1303.11L1824 1304.12L1826 1304.18L1828 1303.25L1830 1303.54L1832 1302.75L1834 1303.43L1836 1304.07L1838 1303.1L1840 1303.39L1842 1302.74L1844 1302.99L1846 1304.11L1848 1303.31L1850 1303.53L1852 1303.15L1854 1302.94L1856 1304.36L1858 1303.9L1860 1303.96L1862 1303.91L1864 1303.31L1866 1304.73L1868 1304.72L1870 1304.58L1872 1304.83L1874 1303.95L1876 1305.09L1878 1305.54L1880 1305.19L1882 1305.64L1884 1304.63L1886 1305.27L1888 1305.84L1890 1305.73L1892 1305.98L1894 1305.54L1896 1305.65L1898 1306.1L1900 1306.1L1902 1306.1L1904 1306.1L1906 1306.02L1908 1306.1L1910 1306.1L1912 1306.1L1914 1306.1L1916 1306.1L1918 1306.1L1920 1306.1L1922 1306.1L1924 1306.1L1926 1306.1L1928 1306.1L1930 1306.1L1932 1306.1L1934 1306.1L1936 1306.1L1938 1306.1L1940 1306.1L1942 1306.1L1944 1306.1L1946 1306.1L1948 1306.1L1950 1306.1L1952 1306.1L1954 1306.1L1956 1306.1L1958 1306.1L1960 1306.1L1962 1306.1L1964 1306.1L1966 1306.1L1968 1306.1L1970 1306.1L1972 1306.1L1974 1306.1L1976 1306.1L1978 1306.1L1980 1306.1L1982 1306.1L1984 1306.1L1986 1306.1L1988 1306.1L1990 1306.1L1992 1306.1L1994 1306.1L1996 1306.1L1996 1307.9L1994 1307.9L1992 1307.9L1990 1307.9L1988 1307.9L1986 1307.9L1984 1307.9L1982 1307.9L1980 1307.9L1978 1307.9L1976 1307.9L1974 1307.9L1972 1307.9L1970 1307.9L1968 1307.9L1966 1307.9L1964 1307.9L1962 1307.9L1960 1307.9L1958 1307.9L1956 1307.9L1954 1307.9L1952 1307.9L1950 1307.9L1948 1307.9L1946 1307.9L1944 1307.9L1942 1307.9L1940 1307.9L1938 1307.9L1936 1307.9L1934 1307.9L1932 1307.9L1930 1307.9L1928 1307.9L1926 1307.9L1924 1307.9L1922 1307.9L1920 1307.9L1918 1307.9L1916 1307.9L1914 1307.9L1912 1307.9L1910 1307.9L1908 1307.9L1906 1307.98L1904 1307.9L1902 1307.9L1900 1307.9L1898 1307.9L1896 1308.35L1894 1308.46L1892 1308.02L1890 1308.27L1888 1308.16L1886 1308.73L1884 1309.37L1882 1308.36L1880 1308.81L1878 1308.46L1876 1308.91L1874 1310.05L1872 1309.17L1870 1309.42L1868 1309.28L1866 1309.27L1864 1310.69L1862 1310.09L1860 1310.04L1858 1310.1L1856 1309.64L1854 1311.06L1852 1310.85L1850 1310.47L1848 1310.69L1846 1309.89L1844 1311.01L1842 1311.26L1840 1310.61L1838 1310.9L1836 1309.93L1834 1310.57L1832 1311.25L1830 1310.46L1828 1310.75L1826 1309.82L1824 1309.88L1822 1310.89L1820 1310.15L1818 1310.36L1816 1309.67L1814 1309.17L1812 1310.36L1810 1309.86L1808 1309.95L1806 1309.63L1804 1308.69L1802 1309.85L1800 1309.74L1798 1309.68L1796 1309.77L1794 1308.6L1792 1309.5L1790 1309.83L1788 1309.63L1786 1310.08L1784 1308.88L1782 1309.34L1780 1310.06L1778 1309.75L1776 1310.42L1774 1309.4L1772 1309.3L1770 1310.27L1768 1309.92L1766 1310.61L1764 1309.93L1762 1309.25L1760 1310.26L1758 1309.96L1756 1310.51L1754 1310.26L1752 1309.11L1750 1309.95L1748 1309.77L1746 1310.07L1744 1310.27L1742 1308.85L1740 1309.34L1738 1309.36L1736 1309.37L1734 1309.97L1732 1308.57L1730 1308.6L1728 1308.86L1726 1308.61L1724 1309.5L1722 1308.4L1720 1308.2L1718 1308.45L1716 1308.2L1714 1309.06L1712 1308.49L1710 1308.2L1708 1308.29L1706 1308.2L1704 1308.83L1702 1308.9L1700 1308.2L1698 1308.46L1696 1308.2L1694 1308.88L1692 1309.57L1690 1308.47L1688 1308.93L1686 1308.81L1684 1309.16L1682 1310.32L1680 1309.37L1678 1309.53L1676 1309.6L1674 1309.54L1672 1310.93L1670 1310.29L1668 1310.07L1666 1310.29L1664 1309.84L1662 1311.18L1660 1310.98L1658 1310.38L1656 1310.69L1654 1309.96L1652 1310.99L1650 1311.27L1648 1310.4L1646 1310.71L1644 1309.87L1642 1310.43L1640 1311.17L1638 1310.22L1636 1310.44L1634 1309.68L1632 1309.69L1630 1310.79L1628 1309.96L1626 1310.04L1624 1309.53L1622 1309.03L1620 1310.3L1618 1309.81L1616 1309.71L1614 1309.55L1612 1308.55L1610 1309.26L1608 1308.84L1606 1308.3Z" fill="#1d1d21"/>
<rect x="12" y="1320" width="18" height="70" fill="#5c8a44"/>
<rect x="14" y="1322" width="16" height="30" fill="#a9fb7c"/>
<rect x="14" y="1354" width="16" height="36" fill="#a9fb7c"/>
<path d="M14 1380h6M21 1378h9M14 1384h6M21 1384h9M14 1388h5M21 1387h9" stroke="#5f9a45" stroke-width="2" fill="none"/>
<rect x="30" y="1320" width="20" height="70" fill="#5c8a44"/>
<rect x="32" y="1322" width="18" height="30" fill="#a9fb7c"/>
<rect x="32" y="1354" width="18" height="36" fill="#a9fb7c"/>
<path d="M32 1380h6M39 1378h9M32 1384h6M39 1384h9M32 1388h5M39 1387h9" stroke="#5f9a45" stroke-width="2" fill="none"/>
<rect x="50" y="1320" width="20" height="70" fill="#5c8a44"/>
<rect x="52" y="1322" width="18" height="30" fill="#a9fb7c"/>
<rect x="52" y="1354" width="18" height="36" fill="#a9fb7c"/>
<path d="M52 1380h6M59 1378h9M52 1384h6M59 1384h9M52 1388h5M59 1387h9" stroke="#5f9a45" stroke-width="2" fill="none"/>
<rect x="70" y="1320" width="20" height="70" fill="#5c8a44"/>
<rect x="72" y="1322" width="18" height="30" fill="#a9fb7c"/>
<rect x="72" y="1354" width="18" height="36" fill="#a9fb7c"/>
<path d="M72 1380h6M79 1378h9M72 1384h6M79 1384h9M72 1388h5M79 1387h9" stroke="#5f9a45" stroke-width="2" fill="none"/>
<rect x="90" y="1320" width="20" height="70" fill="#5c8a44"/>
<rect x="92" y="1322" width="18" height="30" fill="#a9fb7c"/>
<rect x="92" y="1354" width="18" height="36" fill="#a9fb7c"/>
<path d="M92 1380h6M99 1378h9M92 1384h6M99 1384h9M92 1388h5M99 1387h9" stroke="#5f9a45" stroke-width="2" fill="none"/>
<rect x="110" y="1320" width="20" height="70" fill="#5c8a44"/>
<rect x="112" y="1322" width="18" height="30" fill="#a9fb7c"/>
<rect x="112" y="1354" width="18" height="36" fill="#a9fb7c"/>
<path d="M112 1380h6M119 1378h9M112 1384h6M119 1384h9M112 1388h5M119 1387h9" stroke="#5f9a45" stroke-width="2" fill="none"/>
<rect x="130" y="1320" width="18" height="70" fill="#5c8a44"/>
<rect x="132" y="1322" width="16" height="30" fill="#a9fb7c"/>
<rect x="132" y="1354" width="16" height="36" fill="#a9fb7c"/>
<path d="M132 1380h6M139 1378h9M132 1384h6M139 1384h9M132 1388h5M139 1387h9" stroke="#5f9a45" stroke-width="2" fill="none"/>
<rect x="148" y="1320" width="20" height="70" fill="#5c8a44"/>
<rect x="150" y="1322" width="18" height="30" fill="#a9fb7c"/>
<rect x="150" y="1354" width="18" height="36" fill="#a9fb7c"/>
<path d="M150 1380h6M157 1378h9M150 1384h6M157 1384h9M150 1388h5M157 1387h9" stroke="#5f9a45" stroke-width="2" fill="none"/>
<rect x="168" y="1320" width="20" height="70" fill="#5c8a44"/>
<rect x="170" y="1322" width="18" height="30" fill="#a9fb7c"/>
<rect x="170" y="1354" width="18" height="36" fill="#a9fb7c"/>
<path d="M170 1380h6M177 1378h9M170 1384h6M177 1384h9M170 1388h5M177 1387h9" stroke="#5f9a45" stroke-width="2" fill="none"/>
<rect x="188" y="1320" width="20" height="70" fill="#5c8a44"/>
<rect x="190" y="1322" width="18" height="30" fill="#a9fb7c"/>
<rect x="190" y="1354" width="18" height="36" fill="#a9fb7c"/>
<path d="M190 1380h6M197 1378h9M190 1384h6M197 1384h9M190 1388h5M197 1387h9" stroke="#5f9a45" stroke-width="2" fill="none"/>
<rect x="208" y="1320" width="20" height="70" fill="#5c8a44"/>
<rect x="210" y="1322" width="18" height="30" fill="#a9fb7c"/>
<rect x="210" y="1354" width="18" height="36" fill="#a9fb7c"/>
<path d="M210 1380h6M217 1378h9M210 1384h6M217 1384h9M210 1388h5M217 1387h9" stroke="#5f9a45" stroke-width="2" fill="none"/>
<rect x="228" y="1320" width="20" height="70" fill="#5c8a44"/>
<rect x="230" y="1322" width="18" height="30" fill="#a9fb7c"/>
<rect x="230" y="1354" width="18" height="36" fill="#a9fb7c"/>
<path d="M230 1380h6M237 1378h9M230 1384h6M237 1384h9M230 1388h5M237 1387h9" stroke="#5f9a45" stroke-width="2" fill="none"/>
<rect x="248" y="1320" width="18" height="70" fill="#5c8a44"/>
<rect x="250" y="1322" width="16" height="30" fill="#a9fb7c"/>
<rect x="250" y="1354" width="16" height="36" fill="#a9fb7c"/>
<path d="M250 1380h6M257 1378h9M250 1384h6M257 1384h9M250 1388h5M257 1387h9" stroke="#5f9a45" stroke-width="2" fill="none"/>
<rect x="266" y="1320" width="20" height="70" fill="#5c8a44"/>
<rect x="268" y="1322" width="18" height="30" fill="#a9fb7c"/>
<rect x="268" y="1354" width="18" height="36" fill="#a9fb7c"/>
<path d="M268 1380h6M275 1378h9M268 1384h6M275 1384h9M268 1388h5M275 1387h9" stroke="#5f9a45" stroke-width="2" fill="none"/>
<rect x="286" y="1320" width="30" height="70" fill="#5c8a44"/>
<rect x="288" y="1322" width="28" height="30" fill="#a9fb7c"/>
<rect x="288" y="1354" width="28" height="36" fill="#a9fb7c"/>
<path d="M288 1380h6M295 1378h9M288 1384h6M295 1384h9M288 1388h5M295 1387h9M308 1380h6M308 1384h6M308 1388h5" stroke="#5f9a45" stroke-width="2" fill="none"/>
<rect x="954" y="1320" width="118" height="70" fill="#5c8a44"/>
<rect x="956" y="1322" width="116" height="30" fill="#a9fb7c"/>
<rect x="956" y="1354" width="116" height="36" fill="#a9fb7c"/>
<rect x="994" y="1354" width="2" height="36" fill="#72aa54"/>
<rect x="1034" y="1354" width="2" height="36" fill="#72aa54"/>
<path d="M963 1373h11M983 1373h11M956 1376h6M975 1376h6M956 1380h6M964 1380h10M975 1380h6M984 1380h10M964 1385h10M983 1385h11M956 1388h6M975 1388h6M1002 1373h11M1022 1373h11M995 1376h6M1014 1376h6M995 1380h6M1003 1380h10M1014 1380h6M1023 1380h10M1003 1385h10M1022 1385h11M995 1388h6M1014 1388h6M1042 1373h11M1035 1376h6M1054 1376h6M1035 1380h6M1043 1380h10M1054 1380h6M1043 1385h10M1035 1388h6M1054 1388h6" stroke="#5f9a45" stroke-width="2" fill="none"/>
<path d="M975 1322v6M975 1384v6M995 1322v6M995 1384v6M1015 1322v6M1015 1384v6M1035 1322v6M1035 1384v6M1055 1322v6M1055 1384v6" stroke="#15151a" stroke-width="2" fill="none"/>
<rect x="1072" y="1320" width="178" height="70" fill="#5c8a44"/>
<rect x="1074" y="1322" width="176" height="30" fill="#a9fb7c"/>
<rect x="1074" y="1354" width="176" height="36" fill="#a9fb7c"/>
<rect x="1112" y="1354" width="2" height="36" fill="#72aa54"/>
<rect x="1152" y="1354" width="2" height="36" fill="#72aa54"/>
<rect x="1190" y="1354" width="2" height="36" fill="#72aa54"/>
<rect x="1230" y="1354" width="2" height="36" fill="#72aa54"/>
<path d="M1081 1373h9M1094 1371h8M1103 1368h8M1074 1376h6M1096 1376h8M1074 1380h6M1082 1380h10M1105 1380h6M1082 1385h10M1094 1385h6M1074 1388h6M1102 1389h9M1120 1373h9M1133 1371h8M1142 1368h8M1113 1376h6M1135 1376h8M1113 1380h6M1121 1380h10M1144 1380h6M1121 1385h10M1133 1385h6M1113 1388h6M1141 1389h9M1160 1373h9M1173 1371h8M1182 1368h8M1153 1376h6M1175 1376h8M1153 1380h6M1161 1380h10M1184 1380h6M1161 1385h10M1173 1385h6M1153 1388h6M1181 1389h9M1199 1373h9M1212 1371h8M1221 1368h8M1192 1376h6M1214 1376h8M1192 1380h6M1200 1380h10M1223 1380h6M1200 1385h10M1212 1385h6M1192 1388h6M1220 1389h9M1238 1373h9M1231 1376h6M1231 1380h6M1239 1380h10M1239 1385h10M1231 1388h6" stroke="#5f9a45" stroke-width="2" fill="none"/>
<path d="M1113 1322v6M1113 1384v6M1191 1322v6M1191 1384v6" stroke="#15151a" stroke-width="2" fill="none"/>
<rect x="1290" y="1320" width="152" height="70" fill="#5c8a44"/>
<rect x="1292" y="1322" width="150" height="30" fill="#a9fb7c"/>
<rect x="1292" y="1354" width="150" height="36" fill="#a9fb7c"/>
<rect x="1308" y="1354" width="2" height="36" fill="#72aa54"/>
<rect x="1348" y="1354" width="2" height="36" fill="#72aa54"/>
<rect x="1388" y="1354" width="2" height="36" fill="#72aa54"/>
<rect x="1426" y="1354" width="2" height="36" fill="#72aa54"/>
<path d="M1296 1373h6M1304 1373h2M1293 1377h2M1296 1379h6M1304 1379h2M1293 1379h2M1296 1385h6M1304 1385h2M1293 1385h2M1308 1371h2M1308 1371h2M1316 1371h2M1320 1371h2M1324 1371h2M1328 1371h2M1346 1371h2M1312 1371h2M1348 1371h2M1352 1371h2M1316 1373h2M1320 1373h2M1324 1373h2M1328 1373h2M1336 1373h2M1340 1373h2M1344 1373h2M1375 1373h6M1383 1373h2M1308 1377h2M1312 1377h2M1328 1377h2M1332 1377h2M1348 1377h2M1352 1377h2M1368 1377h2M1372 1377h2M1336 1379h2M1340 1379h2M1344 1379h2M1356 1379h2M1359 1379h6M1366 1379h2M1375 1379h6M1383 1379h2M1316 1379h2M1320 1379h2M1324 1379h2M1328 1379h2M1332 1379h2M1368 1379h2M1372 1379h2M1308 1383h2M1312 1383h2M1348 1383h2M1352 1383h2M1356 1383h2M1359 1383h6M1366 1383h2M1336 1385h2M1340 1385h2M1344 1385h2M1375 1385h6M1383 1385h2M1328 1385h2M1332 1385h2M1368 1385h2M1372 1385h2M1356 1389h2M1359 1389h6M1366 1389h2M1387 1371h2M1387 1371h2M1395 1371h2M1399 1371h2M1403 1371h2M1407 1371h2M1425 1371h2M1391 1371h2M1427 1371h2M1431 1371h2M1395 1373h2M1399 1373h2M1403 1373h2M1407 1373h2M1415 1373h2M1419 1373h2M1423 1373h2M1387 1377h2M1391 1377h2M1407 1377h2M1411 1377h2M1427 1377h2M1431 1377h2M1415 1379h2M1419 1379h2M1423 1379h2M1435 1379h2M1395 1379h2M1399 1379h2M1403 1379h2M1407 1379h2M1411 1379h2M1387 1383h2M1391 1383h2M1427 1383h2M1431 1383h2M1435 1383h2M1415 1385h2M1419 1385h2M1423 1385h2M1407 1385h2M1411 1385h2M1435 1389h2" stroke="#55913f" stroke-width="2" fill="none"/>
<path d="M1369 1322v6M1369 1384v6" stroke="#15151a" stroke-width="2" fill="none"/>
<rect x="1446" y="1320" width="158" height="70" fill="#5c8a44"/>
<rect x="1448" y="1322" width="156" height="30" fill="#a9fb7c"/>
<rect x="1448" y="1354" width="156" height="36" fill="#a9fb7c"/>
<rect x="1466" y="1354" width="2" height="36" fill="#72aa54"/>
<rect x="1506" y="1354" width="2" height="36" fill="#72aa54"/>
<rect x="1544" y="1354" width="2" height="36" fill="#72aa54"/>
<rect x="1584" y="1354" width="2" height="36" fill="#72aa54"/>
<path d="M1454 1373h6M1462 1373h2M1451 1377h2M1454 1379h6M1462 1379h2M1451 1379h2M1454 1385h6M1462 1385h2M1451 1385h2M1465 1371h2M1465 1371h2M1473 1371h2M1477 1371h2M1481 1371h2M1485 1371h2M1503 1371h2M1469 1371h2M1505 1371h2M1509 1371h2M1473 1373h2M1477 1373h2M1481 1373h2M1485 1373h2M1493 1373h2M1497 1373h2M1501 1373h2M1532 1373h6M1540 1373h2M1465 1377h2M1469 1377h2M1485 1377h2M1489 1377h2M1505 1377h2M1509 1377h2M1525 1377h2M1529 1377h2M1493 1379h2M1497 1379h2M1501 1379h2M1513 1379h2M1516 1379h6M1523 1379h2M1532 1379h6M1540 1379h2M1473 1379h2M1477 1379h2M1481 1379h2M1485 1379h2M1489 1379h2M1525 1379h2M1529 1379h2M1465 1383h2M1469 1383h2M1505 1383h2M1509 1383h2M1513 1383h2M1516 1383h6M1523 1383h2M1493 1385h2M1497 1385h2M1501 1385h2M1532 1385h6M1540 1385h2M1485 1385h2M1489 1385h2M1525 1385h2M1529 1385h2M1513 1389h2M1516 1389h6M1523 1389h2M1544 1371h2M1544 1371h2M1552 1371h2M1556 1371h2M1560 1371h2M1564 1371h2M1582 1371h2M1548 1371h2M1584 1371h2M1588 1371h2M1552 1373h2M1556 1373h2M1560 1373h2M1564 1373h2M1572 1373h2M1576 1373h2M1580 1373h2M1544 1377h2M1548 1377h2M1564 1377h2M1568 1377h2M1584 1377h2M1588 1377h2M1572 1379h2M1576 1379h2M1580 1379h2M1592 1379h2M1595 1379h6M1602 1379h2M1552 1379h2M1556 1379h2M1560 1379h2M1564 1379h2M1568 1379h2M1544 1383h2M1548 1383h2M1584 1383h2M1588 1383h2M1592 1383h2M1595 1383h6M1602 1383h2M1572 1385h2M1576 1385h2M1580 1385h2M1564 1385h2M1568 1385h2M1592 1389h2M1595 1389h6M1602 1389h2" stroke="#55913f" stroke-width="2" fill="none"/>
<path d="M1527 1322v6M1527 1384v6" stroke="#15151a" stroke-width="2" fill="none"/>
<rect x="1606" y="1320" width="38" height="70" fill="#5c8a44"/>
<rect x="1608" y="1322" width="36" height="30" fill="#a9fb7c"/>
<rect x="1608" y="1354" width="36" height="36" fill="#a9fb7c"/>
<rect x="1624" y="1354" width="2" height="36" fill="#72aa54"/>
<path d="M1625 1371h2M1627 1373h2M1631 1373h2M1635 1371h2M1638 1371h4M1615 1375h2M1618 1375h4M1635 1375h2M1638 1375h4M1611 1377h2M1627 1377h2M1631 1377h2M1615 1379h2M1618 1379h4M1611 1381h2M1635 1381h2M1638 1381h4M1627 1383h2M1631 1383h2" stroke="#55913f" stroke-width="2" fill="none"/>
<rect x="1644" y="1320" width="38" height="70" fill="#5c8a44"/>
<rect x="1646" y="1322" width="36" height="30" fill="#a9fb7c"/>
<rect x="1646" y="1354" width="36" height="36" fill="#a9fb7c"/>
<rect x="1662" y="1354" width="2" height="36" fill="#72aa54"/>
<path d="M1663 1371h2M1665 1373h2M1669 1373h2M1673 1371h2M1676 1371h4M1653 1375h2M1656 1375h4M1673 1375h2M1676 1375h4M1649 1377h2M1665 1377h2M1669 1377h2M1653 1379h2M1656 1379h4M1649 1381h2M1673 1381h2M1676 1381h4M1665 1383h2M1669 1383h2" stroke="#55913f" stroke-width="2" fill="none"/>
<rect x="1682" y="1320" width="40" height="70" fill="#5c8a44"/>
<rect x="1684" y="1322" width="38" height="30" fill="#a9fb7c"/>
<rect x="1684" y="1354" width="38" height="36" fill="#a9fb7c"/>
<rect x="1702" y="1354" width="2" height="36" fill="#72aa54"/>
<path d="M1701 1371h2M1703 1373h2M1707 1373h2M1711 1371h2M1714 1371h4M1691 1375h2M1694 1375h4M1711 1375h2M1714 1375h4M1687 1377h2M1703 1377h2M1707 1377h2M1691 1379h2M1694 1379h4M1687 1381h2M1711 1381h2M1714 1381h4M1703 1383h2M1707 1383h2" stroke="#55913f" stroke-width="2" fill="none"/>
<rect x="1722" y="1320" width="40" height="70" fill="#5c8a44"/>
<rect x="1724" y="1322" width="38" height="30" fill="#a9fb7c"/>
<rect x="1724" y="1354" width="38" height="36" fill="#a9fb7c"/>
<rect x="1742" y="1354" width="2" height="36" fill="#72aa54"/>
<path d="M1741 1371h2M1743 1373h2M1747 1373h2M1751 1371h2M1754 1371h4M1731 1375h2M1734 1375h4M1751 1375h2M1754 1375h4M1727 1377h2M1743 1377h2M1747 1377h2M1731 1379h2M1734 1379h4M1727 1381h2M1751 1381h2M1754 1381h4M1743 1383h2M1747 1383h2" stroke="#55913f" stroke-width="2" fill="none"/>
<rect x="1762" y="1320" width="38" height="70" fill="#5c8a44"/>
<rect x="1764" y="1322" width="36" height="30" fill="#a9fb7c"/>
<rect x="1764" y="1354" width="36" height="36" fill="#a9fb7c"/>
<rect x="1780" y="1354" width="2" height="36" fill="#72aa54"/>
<path d="M1781 1371h2M1783 1373h2M1787 1373h2M1791 1371h2M1794 1371h4M1771 1375h2M1774 1375h4M1791 1375h2M1794 1375h4M1767 1377h2M1783 1377h2M1787 1377h2M1771 1379h2M1774 1379h4M1767 1381h2M1791 1381h2M1794 1381h4M1783 1383h2M1787 1383h2" stroke="#55913f" stroke-width="2" fill="none"/>
<rect x="1800" y="1320" width="40" height="70" fill="#5c8a44"/>
<rect x="1802" y="1322" width="38" height="30" fill="#a9fb7c"/>
<rect x="1802" y="1354" width="38" height="36" fill="#a9fb7c"/>
<rect x="1820" y="1354" width="2" height="36" fill="#72aa54"/>
<path d="M1819 1371h2M1821 1373h2M1825 1373h2M1829 1371h2M1832 1371h4M1809 1375h2M1812 1375h4M1829 1375h2M1832 1375h4M1805 1377h2M1821 1377h2M1825 1377h2M1809 1379h2M1812 1379h4M1805 1381h2M1829 1381h2M1832 1381h4M1821 1383h2M1825 1383h2" stroke="#55913f" stroke-width="2" fill="none"/>
<rect x="1840" y="1320" width="76" height="70" fill="#5c8a44"/>
<rect x="1842" y="1322" width="74" height="30" fill="#a9fb7c"/>
<rect x="1842" y="1354" width="74" height="36" fill="#a9fb7c"/>
<rect x="1860" y="1354" width="2" height="36" fill="#72aa54"/>
<rect x="1898" y="1354" width="2" height="36" fill="#72aa54"/>
<path d="M1847 1373h6M1855 1373h2M1844 1377h2M1847 1379h6M1855 1379h2M1844 1379h2M1847 1385h6M1855 1385h2M1844 1385h2M1858 1371h2M1858 1371h2M1866 1371h2M1870 1371h2M1874 1371h2M1878 1371h2M1896 1371h2M1862 1371h2M1898 1371h2M1902 1371h2M1866 1373h2M1870 1373h2M1874 1373h2M1878 1373h2M1886 1373h2M1890 1373h2M1894 1373h2M1858 1377h2M1862 1377h2M1878 1377h2M1882 1377h2M1898 1377h2M1902 1377h2M1886 1379h2M1890 1379h2M1894 1379h2M1906 1379h2M1909 1379h6M1866 1379h2M1870 1379h2M1874 1379h2M1878 1379h2M1882 1379h2M1858 1383h2M1862 1383h2M1898 1383h2M1902 1383h2M1906 1383h2M1909 1383h6M1886 1385h2M1890 1385h2M1894 1385h2M1878 1385h2M1882 1385h2M1906 1389h2M1909 1389h6" stroke="#55913f" stroke-width="2" fill="none"/>
<rect x="1918" y="1320" width="40" height="70" fill="#5c8a44"/>
<rect x="1920" y="1322" width="38" height="30" fill="#a9fb7c"/>
<rect x="1920" y="1354" width="38" height="36" fill="#a9fb7c"/>
<rect x="1938" y="1354" width="2" height="36" fill="#72aa54"/>
<path d="M1927 1373h9M1940 1371h8M1949 1368h8M1920 1376h6M1942 1376h8M1920 1380h6M1928 1380h10M1951 1380h6M1928 1385h10M1940 1385h6M1920 1388h6M1948 1389h9" stroke="#5f9a45" stroke-width="2" fill="none"/>
<rect x="1958" y="1320" width="40" height="70" fill="#5c8a44"/>
<rect x="1960" y="1322" width="38" height="30" fill="#a9fb7c"/>
<rect x="1960" y="1354" width="38" height="36" fill="#a9fb7c"/>
<rect x="1978" y="1354" width="2" height="36" fill="#72aa54"/>
<path d="M1967 1373h9M1980 1371h8M1989 1368h8M1960 1376h6M1982 1376h8M1960 1380h6M1968 1380h10M1991 1380h6M1968 1385h10M1980 1385h6M1960 1388h6M1988 1389h9" stroke="#5f9a45" stroke-width="2" fill="none"/>
<rect x="1998" y="1320" width="38" height="70" fill="#5c8a44"/>
<rect x="2000" y="1322" width="36" height="30" fill="#a9fb7c"/>
<rect x="2000" y="1354" width="36" height="36" fill="#a9fb7c"/>
<rect x="2016" y="1354" width="2" height="36" fill="#72aa54"/>
<path d="M2007 1373h9M2020 1371h8M2000 1376h6M2022 1376h8M2000 1380h6M2008 1380h10M2008 1385h10M2020 1385h6M2000 1388h6" stroke="#5f9a45" stroke-width="2" fill="none"/>
<rect x="2036" y="1320" width="40" height="70" fill="#5c8a44"/>
<rect x="2038" y="1322" width="38" height="30" fill="#a9fb7c"/>
<rect x="2038" y="1354" width="38" height="36" fill="#a9fb7c"/>
<rect x="2056" y="1354" width="2" height="36" fill="#72aa54"/>
<path d="M2045 1373h9M2058 1371h8M2067 1368h8M2038 1376h6M2060 1376h8M2038 1380h6M2046 1380h10M2069 1380h6M2046 1385h10M2058 1385h6M2038 1388h6M2066 1389h9" stroke="#5f9a45" stroke-width="2" fill="none"/>
<rect x="2076" y="1320" width="40" height="70" fill="#5c8a44"/>
<rect x="2078" y="1322" width="38" height="30" fill="#a9fb7c"/>
<rect x="2078" y="1354" width="38" height="36" fill="#a9fb7c"/>
<rect x="2096" y="1354" width="2" height="36" fill="#72aa54"/>
<path d="M2085 1373h9M2098 1371h8M2107 1368h8M2078 1376h6M2100 1376h8M2078 1380h6M2086 1380h10M2109 1380h6M2086 1385h10M2098 1385h6M2078 1388h6M2106 1389h9" stroke="#5f9a45" stroke-width="2" fill="none"/>
<rect x="2116" y="1320" width="38" height="70" fill="#5c8a44"/>
<rect x="2118" y="1322" width="36" height="30" fill="#a9fb7c"/>
<rect x="2118" y="1354" width="36" height="36" fill="#a9fb7c"/>
<rect x="2134" y="1354" width="2" height="36" fill="#72aa54"/>
<path d="M2125 1373h9M2138 1371h8M2118 1376h6M2140 1376h8M2118 1380h6M2126 1380h10M2126 1385h10M2138 1385h6M2118 1388h6" stroke="#5f9a45" stroke-width="2" fill="none"/>
<rect x="2154" y="1320" width="66" height="70" fill="#5c8a44"/>
<rect x="2156" y="1322" width="64" height="30" fill="#a9fb7c"/>
<rect x="2156" y="1354" width="64" height="36" fill="#a9fb7c"/>
<rect x="2174" y="1354" width="2" height="36" fill="#72aa54"/>
<rect x="2214" y="1354" width="2" height="36" fill="#72aa54"/>
<path d="M2163 1373h9M2176 1371h8M2185 1368h8M2156 1376h6M2178 1376h8M2156 1380h6M2164 1380h10M2187 1380h6M2164 1385h10M2176 1385h6M2156 1388h6M2184 1389h9M2202 1373h9M2195 1376h6M2195 1380h6M2203 1380h10M2203 1385h10M2195 1388h6" stroke="#5f9a45" stroke-width="2" fill="none"/>
<rect x="640" y="86" width="316" height="22" fill="#333"/>
<path d="M641 87H955V107H641Z" fill="none" stroke="#9b9b9b" stroke-width="2"/>
<path class="aa" d="M641 87L659 97L641 107" fill="none" stroke="#9b9b9b" stroke-width="2" stroke-linejoin="miter"/>
<path class="aa" d="M955 87L937 97L955 107" fill="none" stroke="#9b9b9b" stroke-width="2" stroke-linejoin="miter"/>
<path class="aa" d="M10 111L25 121L10 131Z" fill="#5b5b5b" stroke="#8c8c8c" stroke-width="1.6"/>
<rect x="28" y="110" width="14" height="22" fill="#363636"/>
<text x="30.5" y="128" font-family="'Liberation Sans',sans-serif" font-size="20" font-weight="bold" fill="#c9c9c9">1</text>
<rect x="10" y="1390" width="2450" height="10" fill="#222"/>
<rect x="10" y="1434" width="2450" height="4" fill="#242424"/>
<rect x="2232" y="110" width="2" height="1328" fill="#939393"/>
<path class="aa" d="M2233 110.5L2251 121L2233 132Z" fill="#5b5b5b" stroke="#8e8e8e" stroke-width="1.6"/>
<path class="aa" d="M2232 1439V1448H2240Z" fill="#b7ddeb"/>
<rect x="2252" y="132" width="4" height="1306" fill="#252525"/>
<rect x="2452" y="132" width="4" height="1306" fill="#252525"/>
<rect x="2256" y="136" width="196" height="70" fill="#9ac4fb"/>
<circle cx="2275" cy="153" r="11.6" fill="none" stroke="#1c2b3c" stroke-width="2"/>
<path class="aa" d="M2268.5 149.5h13l-6.5 10.5Z" fill="#1c2b3c"/>
<text x="2302.5" y="159.6" font-family="'Liberation Sans',sans-serif" font-size="20" textLength="50.3" lengthAdjust="spacing" fill="#1c2b3c" stroke="#1c2b3c" stroke-width=".8" stroke-linejoin="round">vocal</text>
<rect x="2256" y="210" width="196" height="70" fill="#9ac4fb"/>
<circle cx="2275" cy="227" r="11.6" fill="none" stroke="#1c2b3c" stroke-width="2"/>
<path class="aa" d="M2268.5 223.5h13l-6.5 10.5Z" fill="#1c2b3c"/>
<text x="2302.5" y="233.6" font-family="'Liberation Sans',sans-serif" font-size="20" textLength="50.9" lengthAdjust="spacing" fill="#1c2b3c" stroke="#1c2b3c" stroke-width=".8" stroke-linejoin="round">voice</text>
<rect x="2256" y="284" width="196" height="70" fill="#6081df"/>
<circle cx="2275" cy="301" r="11.6" fill="none" stroke="#141d3a" stroke-width="2"/>
<path class="aa" d="M2268.5 297.5h13l-6.5 10.5Z" fill="#141d3a"/>
<text x="2302.5" y="307.6" font-family="'Liberation Sans',sans-serif" font-size="20" textLength="57.4" lengthAdjust="spacing" fill="#141d3a" stroke="#141d3a" stroke-width=".8" stroke-linejoin="round">fx fun</text>
<rect x="2256" y="358" width="196" height="70" fill="#6081df"/>
<circle cx="2275" cy="375" r="11.6" fill="none" stroke="#141d3a" stroke-width="2"/>
<path class="aa" d="M2268.5 371.5h13l-6.5 10.5Z" fill="#141d3a"/>
<text x="2302.5" y="381.6" font-family="'Liberation Sans',sans-serif" font-size="20" textLength="55.5" lengthAdjust="spacing" fill="#141d3a" stroke="#141d3a" stroke-width=".8" stroke-linejoin="round">metal</text>
<rect x="2256" y="432" width="196" height="70" fill="#99a8f8"/>
<circle cx="2275" cy="449" r="11.6" fill="none" stroke="#20253f" stroke-width="2"/>
<path class="aa" d="M2268.5 445.5h13l-6.5 10.5Z" fill="#20253f"/>
<text x="2302.5" y="455.6" font-family="'Liberation Sans',sans-serif" font-size="20" textLength="102.4" lengthAdjust="spacing" fill="#20253f" stroke="#20253f" stroke-width=".8" stroke-linejoin="round">downlifter</text>
<rect x="2256" y="506" width="196" height="34" fill="#6ee6fb"/>
<circle cx="2275" cy="523" r="11.6" fill="none" stroke="#17363c" stroke-width="2"/>
<path class="aa" d="M2271.5 516v14l10.5 -7Z" fill="#17363c"/>
<text x="2302.5" y="529.6" font-family="'Liberation Sans',sans-serif" font-size="20" textLength="32.7" lengthAdjust="spacing" fill="#17363c" stroke="#17363c" stroke-width=".8" stroke-linejoin="round">vox</text>
<rect x="2256" y="544" width="196" height="34" fill="#6ee6fb"/>
<circle cx="2275" cy="561" r="11.6" fill="none" stroke="#17363c" stroke-width="2"/>
<path class="aa" d="M2271.5 554v14l10.5 -7Z" fill="#17363c"/>
<text x="2302.5" y="567.6" font-family="'Liberation Sans',sans-serif" font-size="20" textLength="48.8" lengthAdjust="spacing" fill="#17363c" stroke="#17363c" stroke-width=".8" stroke-linejoin="round">vox 2</text>
<rect x="2256" y="582" width="196" height="34" fill="#6ee6fb"/>
<circle cx="2275" cy="599" r="11.6" fill="none" stroke="#17363c" stroke-width="2"/>
<path class="aa" d="M2271.5 592v14l10.5 -7Z" fill="#17363c"/>
<text x="2302.5" y="605.6" font-family="'Liberation Sans',sans-serif" font-size="20" textLength="53.6" lengthAdjust="spacing" fill="#17363c" stroke="#17363c" stroke-width=".8" stroke-linejoin="round">heart</text>
<rect x="2256" y="620" width="196" height="34" fill="#ec4fce"/>
<circle cx="2275" cy="637" r="11.6" fill="none" stroke="#3b1235" stroke-width="2"/>
<path class="aa" d="M2271.5 630v14l10.5 -7Z" fill="#3b1235"/>
<text x="2302.5" y="643.6" font-family="'Liberation Sans',sans-serif" font-size="20" textLength="53.4" lengthAdjust="spacing" fill="#3b1235" stroke="#3b1235" stroke-width=".8" stroke-linejoin="round">crash</text>
<rect x="2256" y="658" width="196" height="34" fill="#ec4fce"/>
<circle cx="2275" cy="675" r="11.6" fill="none" stroke="#3b1235" stroke-width="2"/>
<path class="aa" d="M2271.5 668v14l10.5 -7Z" fill="#3b1235"/>
<text x="2302.5" y="681.6" font-family="'Liberation Sans',sans-serif" font-size="20" textLength="77.7" lengthAdjust="spacing" fill="#3b1235" stroke="#3b1235" stroke-width=".8" stroke-linejoin="round">build up</text>
<rect x="2256" y="696" width="196" height="102" fill="#ec4fce"/>
<circle cx="2275" cy="713" r="11.6" fill="none" stroke="#3b1235" stroke-width="2"/>
<path d="M2269 708.5h12M2269 713h12M2269 717.5h12" stroke="#3b1235" stroke-width="2" fill="none"/>
<text x="2300.5" y="719.6" font-family="'Liberation Sans',sans-serif" font-size="20" textLength="100.8" lengthAdjust="spacing" fill="#3b1235" stroke="#3b1235" stroke-width=".8" stroke-linejoin="round">drums grp</text>
<rect x="2256" y="802" width="196" height="70" fill="#377dc0"/>
<circle cx="2275" cy="819" r="11.6" fill="none" stroke="#0d2238" stroke-width="2"/>
<path class="aa" d="M2268.5 815.5h13l-6.5 10.5Z" fill="#0d2238"/>
<text x="2302.5" y="825.6" font-family="'Liberation Sans',sans-serif" font-size="20" textLength="43.4" lengthAdjust="spacing" fill="#0d2238" stroke="#0d2238" stroke-width=".8" stroke-linejoin="round">bass</text>
<rect x="2256" y="876" width="196" height="70" fill="#5abdb1"/>
<circle cx="2275" cy="893" r="11.6" fill="none" stroke="#12302c" stroke-width="2"/>
<path class="aa" d="M2268.5 889.5h13l-6.5 10.5Z" fill="#12302c"/>
<text x="2302.5" y="899.6" font-family="'Liberation Sans',sans-serif" font-size="20" textLength="87.1" lengthAdjust="spacing" fill="#12302c" stroke="#12302c" stroke-width=".8" stroke-linejoin="round">pizzicato</text>
<rect x="2256" y="950" width="196" height="70" fill="#6bc13c"/>
<circle cx="2275" cy="967" r="11.6" fill="none" stroke="#19300c" stroke-width="2"/>
<path class="aa" d="M2268.5 963.5h13l-6.5 10.5Z" fill="#19300c"/>
<text x="2302.5" y="973.6" font-family="'Liberation Sans',sans-serif" font-size="20" textLength="44.8" lengthAdjust="spacing" fill="#19300c" stroke="#19300c" stroke-width=".8" stroke-linejoin="round">bells</text>
<rect x="2256" y="1024" width="196" height="70" fill="#ae7ec5"/>
<circle cx="2275" cy="1041" r="11.6" fill="none" stroke="#2b1d33" stroke-width="2"/>
<path class="aa" d="M2268.5 1037.5h13l-6.5 10.5Z" fill="#2b1d33"/>
<text x="2302.5" y="1047.6" font-family="'Liberation Sans',sans-serif" font-size="20" textLength="107.8" lengthAdjust="spacing" fill="#2b1d33" stroke="#2b1d33" stroke-width=".8" stroke-linejoin="round">pound lead</text>
<rect x="2256" y="1098" width="196" height="70" fill="#6a9e43"/>
<circle cx="2275" cy="1115" r="11.6" fill="none" stroke="#19270e" stroke-width="2"/>
<path class="aa" d="M2268.5 1111.5h13l-6.5 10.5Z" fill="#19270e"/>
<text x="2302.5" y="1121.6" font-family="'Liberation Sans',sans-serif" font-size="20" textLength="86.9" lengthAdjust="spacing" fill="#19270e" stroke="#19270e" stroke-width=".8" stroke-linejoin="round">chiptune</text>
<rect x="2256" y="1172" width="196" height="70" fill="#fdf163"/>
<circle cx="2275" cy="1189" r="11.6" fill="none" stroke="#3b3915" stroke-width="2"/>
<path class="aa" d="M2268.5 1185.5h13l-6.5 10.5Z" fill="#3b3915"/>
<text x="2302.5" y="1195.6" font-family="'Liberation Sans',sans-serif" font-size="20" textLength="74.3" lengthAdjust="spacing" fill="#3b3915" stroke="#3b3915" stroke-width=".8" stroke-linejoin="round">key pad</text>
<rect x="2256" y="1246" width="196" height="70" fill="#ab9ae1"/>
<circle cx="2275" cy="1263" r="11.6" fill="none" stroke="#2a2540" stroke-width="2"/>
<path class="aa" d="M2268.5 1259.5h13l-6.5 10.5Z" fill="#2a2540"/>
<text x="2302.5" y="1269.6" font-family="'Liberation Sans',sans-serif" font-size="20" textLength="69" lengthAdjust="spacing" fill="#2a2540" stroke="#2a2540" stroke-width=".8" stroke-linejoin="round">chordo</text>
<rect x="2256" y="1320" width="196" height="70" fill="#a9fb7c"/>
<circle cx="2275" cy="1337" r="11.6" fill="none" stroke="#273c1b" stroke-width="2"/>
<path class="aa" d="M2268.5 1333.5h13l-6.5 10.5Z" fill="#273c1b"/>
<text x="2302.5" y="1343.6" font-family="'Liberation Sans',sans-serif" font-size="20" textLength="68.5" lengthAdjust="spacing" fill="#273c1b" stroke="#273c1b" stroke-width=".8" stroke-linejoin="round">strings</text>
<rect x="2256" y="1400" width="196" height="34" fill="#b9dfea"/>
<circle cx="2275" cy="1417" r="11.6" fill="none" stroke="#2f3d42" stroke-width="2"/>
<path class="aa" d="M2271.5 1410v14l10.5 -7Z" fill="#2f3d42"/>
<text x="2307" y="1423.6" font-family="'Liberation Sans',sans-serif" font-size="20" textLength="45.6" lengthAdjust="spacing" fill="#2f3d42" stroke="#2f3d42" stroke-width=".8" stroke-linejoin="round">Main</text>
<text x="2248" y="1428" text-anchor="end" font-family="'Liberation Sans',sans-serif" font-size="33" font-weight="bold" letter-spacing="3" fill="#fff" fill-opacity=".26">2/1</text>
<path d="M13 86V75H16" fill="none" stroke="#7e7e7e" stroke-width="2"/>
<text x="22.2" y="82.4" font-family="'Liberation Sans',sans-serif" font-size="20" letter-spacing=".5" fill="#a0a0a0" stroke="#a0a0a0" stroke-width=".3">33</text>
<rect x="90" y="84" width="2" height="2" fill="#808080"/>
<path d="M169 86V75H172" fill="none" stroke="#7e7e7e" stroke-width="2"/>
<text x="178.2" y="82.4" font-family="'Liberation Sans',sans-serif" font-size="20" letter-spacing=".5" fill="#a0a0a0" stroke="#a0a0a0" stroke-width=".3">41</text>
<rect x="248" y="84" width="2" height="2" fill="#808080"/>
<path d="M327 86V75H330" fill="none" stroke="#7e7e7e" stroke-width="2"/>
<text x="336.2" y="82.4" font-family="'Liberation Sans',sans-serif" font-size="20" letter-spacing=".5" fill="#a0a0a0" stroke="#a0a0a0" stroke-width=".3">49</text>
<rect x="404" y="84" width="2" height="2" fill="#808080"/>
<path d="M483 86V75H486" fill="none" stroke="#7e7e7e" stroke-width="2"/>
<text x="492.2" y="82.4" font-family="'Liberation Sans',sans-serif" font-size="20" letter-spacing=".5" fill="#a0a0a0" stroke="#a0a0a0" stroke-width=".3">57</text>
<rect x="562" y="84" width="2" height="2" fill="#808080"/>
<path d="M641 86V75H644" fill="none" stroke="#7e7e7e" stroke-width="2"/>
<text x="650.2" y="82.4" font-family="'Liberation Sans',sans-serif" font-size="20" letter-spacing=".5" fill="#a0a0a0" stroke="#a0a0a0" stroke-width=".3">65</text>
<rect x="718" y="84" width="2" height="2" fill="#808080"/>
<path d="M799 86V75H802" fill="none" stroke="#7e7e7e" stroke-width="2"/>
<text x="808.2" y="82.4" font-family="'Liberation Sans',sans-serif" font-size="20" letter-spacing=".5" fill="#a0a0a0" stroke="#a0a0a0" stroke-width=".3">73</text>
<rect x="876" y="84" width="2" height="2" fill="#808080"/>
<path d="M955 86V75H958" fill="none" stroke="#7e7e7e" stroke-width="2"/>
<text x="964.2" y="82.4" font-family="'Liberation Sans',sans-serif" font-size="20" letter-spacing=".5" fill="#a0a0a0" stroke="#a0a0a0" stroke-width=".3">81</text>
<rect x="1034" y="84" width="2" height="2" fill="#808080"/>
<path d="M1113 86V75H1116" fill="none" stroke="#7e7e7e" stroke-width="2"/>
<text x="1122.2" y="82.4" font-family="'Liberation Sans',sans-serif" font-size="20" letter-spacing=".5" fill="#a0a0a0" stroke="#a0a0a0" stroke-width=".3">89</text>
<rect x="1190" y="84" width="2" height="2" fill="#808080"/>
<path d="M1271 86V75H1274" fill="none" stroke="#7e7e7e" stroke-width="2"/>
<text x="1280.2" y="82.4" font-family="'Liberation Sans',sans-serif" font-size="20" letter-spacing=".5" fill="#a0a0a0" stroke="#a0a0a0" stroke-width=".3">97</text>
<rect x="1348" y="84" width="2" height="2" fill="#808080"/>
<path d="M1427 86V75H1430" fill="none" stroke="#7e7e7e" stroke-width="2"/>
<text x="1436.2" y="82.4" font-family="'Liberation Sans',sans-serif" font-size="20" letter-spacing=".5" fill="#a0a0a0" stroke="#a0a0a0" stroke-width=".3">105</text>
<rect x="1506" y="84" width="2" height="2" fill="#808080"/>
<path d="M1585 86V75H1588" fill="none" stroke="#7e7e7e" stroke-width="2"/>
<text x="1594.2" y="82.4" font-family="'Liberation Sans',sans-serif" font-size="20" letter-spacing=".5" fill="#a0a0a0" stroke="#a0a0a0" stroke-width=".3">113</text>
<rect x="1662" y="84" width="2" height="2" fill="#808080"/>
<path d="M1743 86V75H1746" fill="none" stroke="#7e7e7e" stroke-width="2"/>
<text x="1752.2" y="82.4" font-family="'Liberation Sans',sans-serif" font-size="20" letter-spacing=".5" fill="#a0a0a0" stroke="#a0a0a0" stroke-width=".3">121</text>
<rect x="1820" y="84" width="2" height="2" fill="#808080"/>
<path d="M1899 86V75H1902" fill="none" stroke="#7e7e7e" stroke-width="2"/>
<text x="1908.2" y="82.4" font-family="'Liberation Sans',sans-serif" font-size="20" letter-spacing=".5" fill="#a0a0a0" stroke="#a0a0a0" stroke-width=".3">129</text>
<rect x="1978" y="84" width="2" height="2" fill="#808080"/>
<path d="M2057 86V75H2060" fill="none" stroke="#7e7e7e" stroke-width="2"/>
<text x="2066.2" y="82.4" font-family="'Liberation Sans',sans-serif" font-size="20" letter-spacing=".5" fill="#a0a0a0" stroke="#a0a0a0" stroke-width=".3">137</text>
<rect x="2134" y="84" width="2" height="2" fill="#808080"/>
<rect x="2214" y="74" width="2" height="12" fill="#7e7e7e"/>
<path d="M51 1438V1453H54" fill="none" stroke="#8a8a8a" stroke-width="2"/>
<text x="56.5" y="1459.5" font-family="'Liberation Sans',sans-serif" font-size="20" letter-spacing=".7" fill="#a0a0a0" stroke="#a0a0a0" stroke-width=".35">1:00</text>
<rect x="106" y="1438" width="2" height="4" fill="#8a8a8a"/>
<rect x="162" y="1438" width="2" height="4" fill="#8a8a8a"/>
<path d="M219 1438V1453H222" fill="none" stroke="#8a8a8a" stroke-width="2"/>
<text x="224.5" y="1459.5" font-family="'Liberation Sans',sans-serif" font-size="20" letter-spacing=".7" fill="#a0a0a0" stroke="#a0a0a0" stroke-width=".35">1:15</text>
<rect x="274" y="1438" width="2" height="4" fill="#8a8a8a"/>
<rect x="328" y="1438" width="2" height="4" fill="#8a8a8a"/>
<path d="M385 1438V1453H388" fill="none" stroke="#8a8a8a" stroke-width="2"/>
<text x="390.5" y="1459.5" font-family="'Liberation Sans',sans-serif" font-size="20" letter-spacing=".7" fill="#a0a0a0" stroke="#a0a0a0" stroke-width=".35">1:30</text>
<rect x="440" y="1438" width="2" height="4" fill="#8a8a8a"/>
<rect x="496" y="1438" width="2" height="4" fill="#8a8a8a"/>
<path d="M553 1438V1453H556" fill="none" stroke="#8a8a8a" stroke-width="2"/>
<text x="558.5" y="1459.5" font-family="'Liberation Sans',sans-serif" font-size="20" letter-spacing=".7" fill="#a0a0a0" stroke="#a0a0a0" stroke-width=".35">1:45</text>
<rect x="608" y="1438" width="2" height="4" fill="#8a8a8a"/>
<rect x="664" y="1438" width="2" height="4" fill="#8a8a8a"/>
<path d="M719 1438V1453H722" fill="none" stroke="#8a8a8a" stroke-width="2"/>
<text x="724.5" y="1459.5" font-family="'Liberation Sans',sans-serif" font-size="20" letter-spacing=".7" fill="#a0a0a0" stroke="#a0a0a0" stroke-width=".35">2:00</text>
<rect x="774" y="1438" width="2" height="4" fill="#8a8a8a"/>
<rect x="830" y="1438" width="2" height="4" fill="#8a8a8a"/>
<path d="M887 1438V1453H890" fill="none" stroke="#8a8a8a" stroke-width="2"/>
<text x="892.5" y="1459.5" font-family="'Liberation Sans',sans-serif" font-size="20" letter-spacing=".7" fill="#a0a0a0" stroke="#a0a0a0" stroke-width=".35">2:15</text>
<rect x="942" y="1438" width="2" height="4" fill="#8a8a8a"/>
<rect x="998" y="1438" width="2" height="4" fill="#8a8a8a"/>
<path d="M1053 1438V1453H1056" fill="none" stroke="#8a8a8a" stroke-width="2"/>
<text x="1058.5" y="1459.5" font-family="'Liberation Sans',sans-serif" font-size="20" letter-spacing=".7" fill="#a0a0a0" stroke="#a0a0a0" stroke-width=".35">2:30</text>
<rect x="1108" y="1438" width="2" height="4" fill="#8a8a8a"/>
<rect x="1164" y="1438" width="2" height="4" fill="#8a8a8a"/>
<path d="M1221 1438V1453H1224" fill="none" stroke="#8a8a8a" stroke-width="2"/>
<text x="1226.5" y="1459.5" font-family="'Liberation Sans',sans-serif" font-size="20" letter-spacing=".7" fill="#a0a0a0" stroke="#a0a0a0" stroke-width=".35">2:45</text>
<rect x="1276" y="1438" width="2" height="4" fill="#8a8a8a"/>
<rect x="1332" y="1438" width="2" height="4" fill="#8a8a8a"/>
<path d="M1389 1438V1453H1392" fill="none" stroke="#8a8a8a" stroke-width="2"/>
<text x="1394.5" y="1459.5" font-family="'Liberation Sans',sans-serif" font-size="20" letter-spacing=".7" fill="#a0a0a0" stroke="#a0a0a0" stroke-width=".35">3:00</text>
<rect x="1442" y="1438" width="2" height="4" fill="#8a8a8a"/>
<rect x="1498" y="1438" width="2" height="4" fill="#8a8a8a"/>
<path d="M1555 1438V1453H1558" fill="none" stroke="#8a8a8a" stroke-width="2"/>
<text x="1560.5" y="1459.5" font-family="'Liberation Sans',sans-serif" font-size="20" letter-spacing=".7" fill="#a0a0a0" stroke="#a0a0a0" stroke-width=".35">3:15</text>
<rect x="1610" y="1438" width="2" height="4" fill="#8a8a8a"/>
<rect x="1666" y="1438" width="2" height="4" fill="#8a8a8a"/>
<path d="M1723 1438V1453H1726" fill="none" stroke="#8a8a8a" stroke-width="2"/>
<text x="1728.5" y="1459.5" font-family="'Liberation Sans',sans-serif" font-size="20" letter-spacing=".7" fill="#a0a0a0" stroke="#a0a0a0" stroke-width=".35">3:30</text>
<rect x="1778" y="1438" width="2" height="4" fill="#8a8a8a"/>
<rect x="1832" y="1438" width="2" height="4" fill="#8a8a8a"/>
<path d="M1889 1438V1453H1892" fill="none" stroke="#8a8a8a" stroke-width="2"/>
<text x="1894.5" y="1459.5" font-family="'Liberation Sans',sans-serif" font-size="20" letter-spacing=".7" fill="#a0a0a0" stroke="#a0a0a0" stroke-width=".35">3:45</text>
<rect x="1944" y="1438" width="2" height="4" fill="#8a8a8a"/>
<rect x="2000" y="1438" width="2" height="4" fill="#8a8a8a"/>
<path d="M2057 1438V1453H2060" fill="none" stroke="#8a8a8a" stroke-width="2"/>
<text x="2062.5" y="1459.5" font-family="'Liberation Sans',sans-serif" font-size="20" letter-spacing=".7" fill="#a0a0a0" stroke="#a0a0a0" stroke-width=".35">4:00</text>
<rect x="2112" y="1438" width="2" height="4" fill="#8a8a8a"/>
<rect x="2166" y="1438" width="2" height="4" fill="#8a8a8a"/>
<rect x="2222" y="1438" width="2" height="6" fill="#8a8a8a"/>
<rect class="aa" x="2261" y="63" width="56" height="24" rx="12" fill="#1e1e1e" stroke="#181818" stroke-width="2"/>
<text x="2275" y="82" font-family="'Liberation Sans',sans-serif" font-size="20" textLength="29" lengthAdjust="spacing" fill="#b6b6b6" stroke="#b6b6b6" stroke-width=".7" stroke-linejoin="round">Del</text>
<rect x="2341" y="63" width="44" height="24" fill="#1e1e1e" stroke="#181818" stroke-width="2"/>
<path class="aa" d="M2359 78.8L2367 71" stroke="#b6b6b6" stroke-width="2.8" fill="none"/><circle cx="2359" cy="78.8" r="3.1" fill="#b6b6b6"/><circle cx="2367" cy="71" r="3.1" fill="#b6b6b6"/>
<rect x="2395" y="63" width="44" height="24" fill="#da724d" stroke="#141414" stroke-width="2"/>
<rect x="2410" y="74" width="14" height="8" fill="#050505"/><path class="aa" d="M2412.6 75v-1.3a4.4 4.4 0 0 1 8.8 0V75" fill="none" stroke="#050505" stroke-width="2.2"/>
<circle cx="2273" cy="111" r="11.8" fill="#1e1e1e" stroke="#181818" stroke-width="2"/>
<path class="aa" d="M2266 111l8 -6.3v5.4h6v1.8h-6v5.4Z" fill="#b6b6b6"/>
<circle cx="2305" cy="111" r="11.8" fill="#1e1e1e" stroke="#181818" stroke-width="2"/>
<path class="aa" d="M2312 111l-8 -6.3v5.4h-6v1.8h6v5.4Z" fill="#b6b6b6"/>
<rect x="2257" y="1447" width="28" height="24" fill="#f4b263" stroke="#161616" stroke-width="2"/>
<rect x="2262" y="1456.5" width="2" height="5" fill="#0a0a0a"/>
<rect x="2266" y="1452.5" width="2" height="13" fill="#0a0a0a"/>
<rect x="2270" y="1450.5" width="2" height="17" fill="#0a0a0a"/>
<rect x="2274" y="1454.5" width="2" height="9" fill="#0a0a0a"/>
<rect x="2278" y="1456.5" width="2" height="5" fill="#0a0a0a"/>
<rect x="2293" y="1447" width="68" height="24" fill="#222" stroke="#161616" stroke-width="2"/>
<rect x="2294" y="1448" width="20" height="22" fill="#31768b"/>
<text x="2301" y="1466" font-family="'Liberation Sans',sans-serif" font-size="20" fill="#b8b8b8" stroke="#b8b8b8" stroke-width=".35" textLength="51" lengthAdjust="spacingAndGlyphs">1.00x</text>
<rect x="2385" y="1447" width="28" height="24" fill="#222" stroke="#1a1a1a" stroke-width="2"/>
<text x="2399" y="1466" text-anchor="middle" font-family="'Liberation Sans',sans-serif" font-size="20" fill="#b8b8b8" stroke="#b8b8b8" stroke-width=".4">H</text>
<rect x="2421" y="1447" width="28" height="24" fill="#222" stroke="#1a1a1a" stroke-width="2"/>
<text x="2435" y="1466" text-anchor="middle" font-family="'Liberation Sans',sans-serif" font-size="20" fill="#b8b8b8" stroke="#b8b8b8" stroke-width=".4">W</text>
<path class="aa" d="M600 14V34Q600 42 608 42H2460V14Z" fill="#7c7c7c"/>
<path class="aa" d="M606 14V33Q606 38 611 38H2460V14Z" fill="#303030"/>
<rect x="607" y="14" width="289" height="1.4" fill="#8ab2e6"/>
<rect x="608" y="22" width="284" height="1.8" fill="#a2449a"/>
<rect x="608" y="27" width="144" height="1.2" fill="#c645b1"/>
<rect x="608" y="30" width="144" height="1.4" fill="#c445b0"/>
<rect x="752" y="26" width="140" height="3.2" fill="#c645b1"/>
<rect x="752" y="30" width="140" height="1.2" fill="#c445b0"/>
<rect x="752" y="20" width="20" height="1" fill="#c645b1"/>
<rect x="608" y="32" width="284" height="0.8" fill="#3a9a8a"/>
<rect x="608" y="33" width="284" height="1.2" fill="#4caf3c"/>
<rect x="608" y="35" width="144" height="1" fill="#3d7f2c"/>
<rect x="610" y="37" width="282" height="1.1" fill="#9ae870"/>
<rect x="752" y="35" width="140" height="1.6" fill="#9aa83c"/>
<rect x="893" y="21" width="10" height="1" fill="#c645b1"/>
<rect x="902" y="22" width="74" height="3" fill="#c645b1"/>
<rect x="902" y="25" width="68" height="6" fill="#c645b1"/>
<rect x="902" y="24.4" width="68" height="0.8" fill="#b23d9f"/>
<rect x="980" y="22" width="4" height="9" fill="#c645b1"/>
<rect x="990" y="22" width="208" height="9" fill="#c645b1"/>
<rect x="990" y="24.4" width="208" height="0.8" fill="#b23d9f"/>
<rect x="990" y="28" width="208" height="0.8" fill="#bb40a7"/>
<rect x="1212" y="22" width="247" height="3" fill="#c645b1"/>
<rect x="1459" y="22.6" width="33" height="1.2" fill="#a2449a"/>
<rect x="1212" y="25" width="284" height="6.5" fill="#c645b1"/>
<rect x="1212" y="24.4" width="247" height="0.8" fill="#b23d9f"/>
<rect x="1212" y="28" width="284" height="0.8" fill="#bb40a7"/>
<rect x="902" y="32" width="74" height="1" fill="#3a6ab0"/>
<rect x="895" y="34" width="80" height="1" fill="#a080c0"/>
<rect x="990" y="32" width="208" height="1" fill="#3a6ab0"/>
<rect x="990" y="34.5" width="60" height="1" fill="#8a9a50"/>
<rect x="1066" y="34.5" width="56" height="1" fill="#8a9a50"/>
<rect x="1126" y="34.5" width="70" height="1" fill="#8a9a50"/>
<rect x="1198" y="35.5" width="298" height="1" fill="#8a70b0"/>
<rect x="1212" y="32" width="284" height="1.4" fill="#2f8f8f"/>
<rect x="1496" y="32" width="277" height="2" fill="#2f6f4f"/>
<rect x="1496" y="35" width="277" height="2.2" fill="#9ab040"/>
<rect x="1644" y="33.5" width="129" height="1.2" fill="#4caf3c"/>
<rect x="1644" y="21" width="129" height="0.9" fill="#c645b1"/>
<rect x="1644" y="24.6" width="129" height="1" fill="#c645b1"/>
<rect x="1644" y="27.3" width="129" height="1.2" fill="#c645b1"/>
<rect x="1342" y="14" width="33" height="1" fill="#7a9ad8"/>
<rect x="1392" y="14" width="18" height="1" fill="#7a9ad8"/>
<rect x="1418" y="14" width="32" height="1" fill="#7a9ad8"/>
<rect x="1465" y="14" width="332" height="1" fill="#7a9ad8"/>
<rect x="1478" y="17" width="295" height="1" fill="#5a7ad0"/>
<rect x="1812" y="22" width="648" height="9.2" fill="#c645b1"/>
<rect x="1812" y="24.4" width="648" height="0.8" fill="#b23d9f"/>
<rect x="1812" y="28" width="648" height="0.8" fill="#bb40a7"/>
<rect x="1812" y="32" width="648" height="1.2" fill="#2f5f9f"/>
<rect x="1812" y="35" width="298" height="1.6" fill="#5fa04a"/>
<rect x="2112" y="34" width="292" height="1.2" fill="#7a8a50"/>
<rect x="2112" y="36" width="292" height="1.4" fill="#b0c060"/>
<rect x="2405" y="34" width="55" height="1.2" fill="#8a70b0"/>
<rect x="2405" y="36.5" width="55" height="1.2" fill="#9ae870"/>
<rect x="2090" y="14" width="48" height="1.2" fill="#7a9ad8"/>
<rect x="2152" y="14" width="20" height="1.2" fill="#7a9ad8"/>
<rect x="2180" y="14" width="32" height="1.2" fill="#7a9ad8"/>
<rect x="2226" y="14" width="20" height="1.2" fill="#7a9ad8"/>
<rect x="2254" y="14" width="32" height="1.2" fill="#7a9ad8"/>
<rect x="2300" y="14" width="20" height="1.2" fill="#7a9ad8"/>
<rect x="2328" y="14" width="32" height="1.2" fill="#7a9ad8"/>
<rect x="2370" y="14" width="36" height="1.2" fill="#7a9ad8"/>
<rect x="1576" y="24.6" width="4" height="1" fill="#c645b1"/>
<rect x="1585" y="24.6" width="4" height="1" fill="#c645b1"/>
<rect x="1594" y="24.6" width="4" height="1" fill="#c645b1"/>
<rect x="1603" y="24.6" width="4" height="1" fill="#c645b1"/>
<rect x="1612" y="24.6" width="4" height="1" fill="#c645b1"/>
<rect x="1621" y="24.6" width="4" height="1" fill="#c645b1"/>
<rect x="1630" y="24.6" width="4" height="1" fill="#c645b1"/>
<rect x="1639" y="24.6" width="4" height="1" fill="#c645b1"/>
<rect x="905" y="15.5" width="3" height="1.6" fill="#4a6ac0"/>
<rect x="985" y="15.5" width="3" height="1.6" fill="#4a6ac0"/>
<rect x="1035" y="15.5" width="3" height="1.6" fill="#4a6ac0"/>
<rect x="1127" y="15.5" width="3" height="1.6" fill="#4a6ac0"/>
<rect x="1175" y="15.5" width="3" height="1.6" fill="#4a6ac0"/>
<rect x="1200" y="15.5" width="3" height="1.6" fill="#4a6ac0"/>
<rect x="1490" y="15.5" width="3" height="1.6" fill="#4a6ac0"/>
<rect x="1813" y="15.5" width="3" height="1.6" fill="#4a6ac0"/>
<rect x="1830" y="15.5" width="3" height="1.6" fill="#4a6ac0"/>
<rect x="1865" y="15.5" width="3" height="1.6" fill="#4a6ac0"/>
<rect x="1880" y="15.5" width="3" height="1.6" fill="#4a6ac0"/>
<rect x="1900" y="15.5" width="3" height="1.6" fill="#4a6ac0"/>
<rect x="1940" y="15.5" width="3" height="1.6" fill="#4a6ac0"/>
<rect x="1958" y="15.5" width="3" height="1.6" fill="#4a6ac0"/>
<rect x="1995" y="15.5" width="3" height="1.6" fill="#4a6ac0"/>
<rect x="2015" y="15.5" width="3" height="1.6" fill="#4a6ac0"/>
<rect x="2030" y="15.5" width="3" height="1.6" fill="#4a6ac0"/>
<rect x="2050" y="15.5" width="3" height="1.6" fill="#4a6ac0"/>
<rect x="2070" y="15.5" width="3" height="1.6" fill="#4a6ac0"/>
<rect x="2088" y="15.5" width="3" height="1.6" fill="#4a6ac0"/>
<rect x="1956" y="22" width="4" height="16" fill="#303030"/>
<rect x="2110" y="22" width="4" height="16" fill="#303030"/>
<rect x="1916" y="14" width="2" height="24" fill="#e6e6e6"/>
<rect x="916" y="25" width="1" height="6" fill="#b83fa4"/>
<rect x="935" y="25" width="1" height="6" fill="#b83fa4"/>
<rect x="954" y="25" width="1" height="6" fill="#b83fa4"/>
<rect x="973" y="25" width="1" height="6" fill="#b83fa4"/>
<rect x="992" y="25" width="1" height="6" fill="#b83fa4"/>
<rect x="1011" y="25" width="1" height="6" fill="#b83fa4"/>
<rect x="1030" y="25" width="1" height="6" fill="#b83fa4"/>
<rect x="1049" y="25" width="1" height="6" fill="#b83fa4"/>
<rect x="1068" y="25" width="1" height="6" fill="#b83fa4"/>
<rect x="1087" y="25" width="1" height="6" fill="#b83fa4"/>
<rect x="1106" y="25" width="1" height="6" fill="#b83fa4"/>
<rect x="1125" y="25" width="1" height="6" fill="#b83fa4"/>
<rect x="1144" y="25" width="1" height="6" fill="#b83fa4"/>
<rect x="1163" y="25" width="1" height="6" fill="#b83fa4"/>
<rect x="1182" y="25" width="1" height="6" fill="#b83fa4"/>
<rect x="1220" y="25" width="1" height="6" fill="#b83fa4"/>
<rect x="1239" y="25" width="1" height="6" fill="#b83fa4"/>
<rect x="1258" y="25" width="1" height="6" fill="#b83fa4"/>
<rect x="1277" y="25" width="1" height="6" fill="#b83fa4"/>
<rect x="1296" y="25" width="1" height="6" fill="#b83fa4"/>
<rect x="1315" y="25" width="1" height="6" fill="#b83fa4"/>
<rect x="1334" y="25" width="1" height="6" fill="#b83fa4"/>
<rect x="1353" y="25" width="1" height="6" fill="#b83fa4"/>
<rect x="1372" y="25" width="1" height="6" fill="#b83fa4"/>
<rect x="1391" y="25" width="1" height="6" fill="#b83fa4"/>
<rect x="1410" y="25" width="1" height="6" fill="#b83fa4"/>
<rect x="1429" y="25" width="1" height="6" fill="#b83fa4"/>
<rect x="1448" y="25" width="1" height="6" fill="#b83fa4"/>
<rect x="1467" y="25" width="1" height="6" fill="#b83fa4"/>
<rect x="1486" y="25" width="1" height="6" fill="#b83fa4"/>
<rect x="1828" y="25" width="1" height="6" fill="#b83fa4"/>
<rect x="1847" y="25" width="1" height="6" fill="#b83fa4"/>
<rect x="1866" y="25" width="1" height="6" fill="#b83fa4"/>
<rect x="1885" y="25" width="1" height="6" fill="#b83fa4"/>
<rect x="1904" y="25" width="1" height="6" fill="#b83fa4"/>
<rect x="1923" y="25" width="1" height="6" fill="#b83fa4"/>
<rect x="1942" y="25" width="1" height="6" fill="#b83fa4"/>
<rect x="1961" y="25" width="1" height="6" fill="#b83fa4"/>
<rect x="1980" y="25" width="1" height="6" fill="#b83fa4"/>
<rect x="1999" y="25" width="1" height="6" fill="#b83fa4"/>
<rect x="2018" y="25" width="1" height="6" fill="#b83fa4"/>
<rect x="2037" y="25" width="1" height="6" fill="#b83fa4"/>
<rect x="2056" y="25" width="1" height="6" fill="#b83fa4"/>
<rect x="2075" y="25" width="1" height="6" fill="#b83fa4"/>
<rect x="2094" y="25" width="1" height="6" fill="#b83fa4"/>
<rect x="2113" y="25" width="1" height="6" fill="#b83fa4"/>
<rect x="2132" y="25" width="1" height="6" fill="#b83fa4"/>
<rect x="2151" y="25" width="1" height="6" fill="#b83fa4"/>
<rect x="2170" y="25" width="1" height="6" fill="#b83fa4"/>
<rect x="2189" y="25" width="1" height="6" fill="#b83fa4"/>
<rect x="2208" y="25" width="1" height="6" fill="#b83fa4"/>
<rect x="2227" y="25" width="1" height="6" fill="#b83fa4"/>
<rect x="2246" y="25" width="1" height="6" fill="#b83fa4"/>
<rect x="2265" y="25" width="1" height="6" fill="#b83fa4"/>
<rect x="2284" y="25" width="1" height="6" fill="#b83fa4"/>
<rect x="2303" y="25" width="1" height="6" fill="#b83fa4"/>
<rect x="2322" y="25" width="1" height="6" fill="#b83fa4"/>
<rect x="2341" y="25" width="1" height="6" fill="#b83fa4"/>
<rect x="2360" y="25" width="1" height="6" fill="#b83fa4"/>
<rect x="2379" y="25" width="1" height="6" fill="#b83fa4"/>
<rect x="2398" y="25" width="1" height="6" fill="#b83fa4"/>
<rect x="2417" y="25" width="1" height="6" fill="#b83fa4"/>
<rect x="2436" y="25" width="1" height="6" fill="#b83fa4"/>
<rect x="2455" y="25" width="1" height="6" fill="#b83fa4"/>
</svg>
</body></html>
